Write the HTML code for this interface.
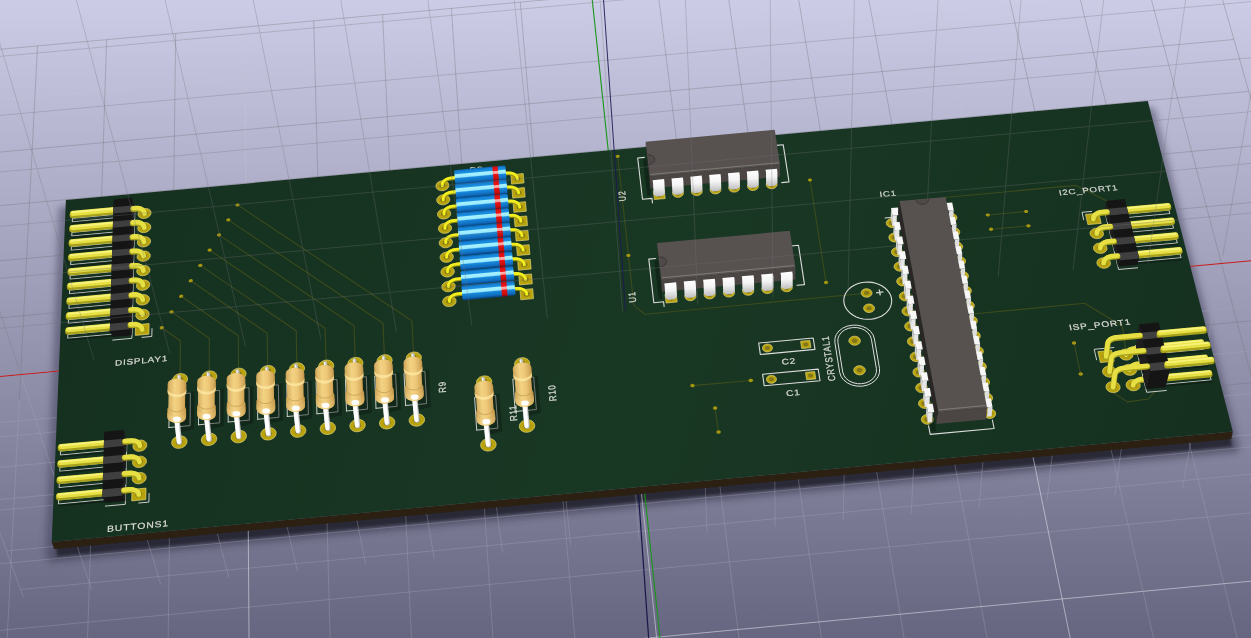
<!DOCTYPE html><html><head><meta charset="utf-8"><title>3D Viewer</title><style>html,body{margin:0;padding:0;background:#666680;overflow:hidden}svg{display:block}text{font-family:"Liberation Sans",sans-serif}</style></head><body><svg width="1251" height="638" viewBox="0 0 1251 638"><defs><linearGradient id="bg" x1="0" y1="0" x2="0" y2="1"><stop offset="0" stop-color="#cccce6"/><stop offset="1" stop-color="#666680"/></linearGradient><linearGradient id="brd" gradientUnits="userSpaceOnUse" x1="100" y1="150" x2="1200" y2="480"><stop offset="0" stop-color="#15301f"/><stop offset="0.5" stop-color="#193824"/><stop offset="1" stop-color="#15301f"/></linearGradient><filter id="blur8" x="-10%" y="-50%" width="120%" height="200%"><feGaussianBlur stdDeviation="7"/></filter><filter id="blur4" x="-10%" y="-80%" width="120%" height="260%"><feGaussianBlur stdDeviation="3.5"/></filter><filter id="blur2" x="-5%" y="-50%" width="110%" height="200%"><feGaussianBlur stdDeviation="1.6"/></filter><clipPath id="ctop"><rect x="0" y="0" width="1251" height="400"/></clipPath><clipPath id="cbot"><rect x="0" y="400" width="1251" height="238"/></clipPath><linearGradient id="pinw" x1="0" y1="0" x2="0" y2="1"><stop offset="0" stop-color="#ffffff"/><stop offset="0.45" stop-color="#f4f4f4"/><stop offset="1" stop-color="#bdbdbd"/></linearGradient><linearGradient id="rg" gradientUnits="userSpaceOnUse" x1="-1.3" y1="0" x2="1.3" y2="0"><stop offset="0" stop-color="#b98f45"/><stop offset="0.12" stop-color="#d9b365"/><stop offset="0.38" stop-color="#f3d283"/><stop offset="0.6" stop-color="#eec878"/><stop offset="0.85" stop-color="#d4aa5c"/><stop offset="1" stop-color="#b88c40"/></linearGradient><linearGradient id="rg2" gradientUnits="userSpaceOnUse" x1="-1.3" y1="0" x2="1.3" y2="0"><stop offset="0" stop-color="#d6ae5e"/><stop offset="0.4" stop-color="#fbe39a"/><stop offset="1" stop-color="#cfa555"/></linearGradient><g id="resb"><path d="M-1.2,-2.25 L-1.2,-3.6 L-1.06,-3.95 L-1.06,-5.81 L-1.2,-6.109999999999999 L-1.2,-7.56 A1.2,0.8999999999999999 0 0 1 1.2,-7.56 L1.2,-6.109999999999999 L1.06,-5.81 L1.06,-3.95 L1.2,-3.6 L1.2,-2.25 A1.2,0.8999999999999999 0 0 1 -1.2,-2.25 Z" fill="url(#rg)"/><path d="M-1.2,-6.81 A1.2,0.8999999999999999 0 0 0 1.2,-6.81 L1.2,-6.359999999999999 A1.2,0.8999999999999999 0 0 1 -1.2,-6.359999999999999 Z" fill="#fde9a4" opacity="0.75"/><path d="M-1.06,-3.95 A1.06,0.8099999999999999 0 0 0 1.06,-3.95" fill="none" stroke="#b08840" stroke-width="0.09" opacity="0.8"/><path d="M-1.2,-2.3 A1.2,0.8999999999999999 0 0 0 1.2,-2.3 L1.2,-3.2 A1.2,0.8999999999999999 0 0 1 -1.2,-3.2 Z" fill="url(#rg2)" opacity="0.85"/><ellipse cx="0.03" cy="-1.97" rx="0.5" ry="0.42" fill="#ffffff"/></g><linearGradient id="dg" x1="0" y1="0" x2="0" y2="1"><stop offset="0" stop-color="#0b5fa8"/><stop offset="0.12" stop-color="#1583d6"/><stop offset="0.26" stop-color="#1b8fe2"/><stop offset="0.33" stop-color="#a6f2ff"/><stop offset="0.52" stop-color="#9aeaff"/><stop offset="0.6" stop-color="#1888dc"/><stop offset="0.85" stop-color="#0f6cbd"/><stop offset="1" stop-color="#07407a"/></linearGradient><linearGradient id="dr" x1="0" y1="0" x2="0" y2="1"><stop offset="0" stop-color="#a80808"/><stop offset="0.12" stop-color="#e01010"/><stop offset="0.3" stop-color="#ee1515"/><stop offset="0.36" stop-color="#ffb0b0"/><stop offset="0.5" stop-color="#ff9a9a"/><stop offset="0.56" stop-color="#e81212"/><stop offset="0.85" stop-color="#c80c0c"/><stop offset="1" stop-color="#800606"/></linearGradient></defs><rect width="1251" height="638" fill="url(#bg)"/>
<g filter="url(#blur4)" opacity="0.5"><polygon points="50.2,543.0 1235.3,432.9 1238.3,451.9 48.2,562.0" fill="#2a2a3e"/><polygon points="1141.8,105.0 1154.8,109.0 1240.3,448.9 1225.3,438.9" fill="#3a3a55"/><polygon points="71.9,204.1 58.9,208.1 45.2,559.0 60.2,549.0" fill="#3a3a55"/></g>
<g filter="url(#blur2)" opacity="0.85"><polygon points="55.2,544.0 1230.3,433.9 1232.3,446.4 57.2,556.5" fill="#24242f"/></g>
<g clip-path="url(#ctop)"><line x1="589.0" y1="-4.1" x2="664.0" y2="707.4" stroke="#c8c8d0" stroke-opacity="0.3" stroke-width="1" /><line x1="-55.0" y1="381.6" x2="1296.0" y2="256.6" stroke="#c8c8d0" stroke-opacity="0.3" stroke-width="1" /><line x1="657.7" y1="-10.3" x2="746.7" y2="699.6" stroke="#72727a" stroke-opacity="0.36" stroke-width="1" /><line x1="-59.3" y1="442.5" x2="1312.7" y2="315.1" stroke="#72727a" stroke-opacity="0.36" stroke-width="1" /><line x1="520.3" y1="2.1" x2="581.4" y2="715.2" stroke="#72727a" stroke-opacity="0.36" stroke-width="1" /><line x1="-50.8" y1="322.5" x2="1279.8" y2="199.9" stroke="#72727a" stroke-opacity="0.36" stroke-width="1" /><line x1="726.4" y1="-16.5" x2="829.2" y2="691.7" stroke="#72727a" stroke-opacity="0.36" stroke-width="1" /><line x1="-63.7" y1="505.4" x2="1330.0" y2="375.5" stroke="#72727a" stroke-opacity="0.36" stroke-width="1" /><line x1="451.4" y1="8.4" x2="498.6" y2="723.1" stroke="#72727a" stroke-opacity="0.36" stroke-width="1" /><line x1="-46.8" y1="265.2" x2="1264.0" y2="144.8" stroke="#72727a" stroke-opacity="0.36" stroke-width="1" /><line x1="795.0" y1="-22.8" x2="911.7" y2="683.9" stroke="#72727a" stroke-opacity="0.36" stroke-width="1" /><line x1="-68.3" y1="570.2" x2="1347.8" y2="437.8" stroke="#72727a" stroke-opacity="0.36" stroke-width="1" /><line x1="382.6" y1="14.6" x2="415.7" y2="730.9" stroke="#72727a" stroke-opacity="0.36" stroke-width="1" /><line x1="-42.8" y1="209.6" x2="1248.8" y2="91.4" stroke="#72727a" stroke-opacity="0.36" stroke-width="1" /><line x1="863.5" y1="-29.0" x2="994.1" y2="676.1" stroke="#72727a" stroke-opacity="0.36" stroke-width="1" /><line x1="-73.0" y1="637.3" x2="1366.2" y2="502.1" stroke="#72727a" stroke-opacity="0.36" stroke-width="1" /><line x1="313.7" y1="20.9" x2="332.8" y2="738.8" stroke="#72727a" stroke-opacity="0.36" stroke-width="1" /><line x1="-39.0" y1="155.6" x2="1233.9" y2="39.5" stroke="#72727a" stroke-opacity="0.36" stroke-width="1" /><line x1="932.0" y1="-35.2" x2="1076.4" y2="668.3" stroke="#c8c8d0" stroke-opacity="0.3" stroke-width="1" /><line x1="-77.9" y1="706.5" x2="1385.2" y2="568.5" stroke="#c8c8d0" stroke-opacity="0.3" stroke-width="1" /><line x1="244.7" y1="27.1" x2="249.8" y2="746.6" stroke="#c8c8d0" stroke-opacity="0.3" stroke-width="1" /><line x1="-35.3" y1="103.2" x2="1219.5" y2="-11.0" stroke="#c8c8d0" stroke-opacity="0.3" stroke-width="1" /><line x1="1000.5" y1="-41.4" x2="1158.6" y2="660.5" stroke="#72727a" stroke-opacity="0.36" stroke-width="1" /><line x1="-83.0" y1="778.1" x2="1404.8" y2="637.2" stroke="#72727a" stroke-opacity="0.36" stroke-width="1" /><line x1="175.7" y1="33.4" x2="166.7" y2="754.5" stroke="#72727a" stroke-opacity="0.36" stroke-width="1" /><line x1="-31.7" y1="52.2" x2="1205.5" y2="-60.0" stroke="#72727a" stroke-opacity="0.36" stroke-width="1" /><line x1="1068.8" y1="-47.6" x2="1240.8" y2="652.8" stroke="#72727a" stroke-opacity="0.36" stroke-width="1" /><line x1="106.6" y1="39.7" x2="83.6" y2="762.4" stroke="#72727a" stroke-opacity="0.36" stroke-width="1" /><line x1="1137.2" y1="-53.8" x2="1322.8" y2="645.0" stroke="#72727a" stroke-opacity="0.36" stroke-width="1" /><line x1="37.5" y1="45.9" x2="0.4" y2="770.2" stroke="#72727a" stroke-opacity="0.36" stroke-width="1" /><line x1="1205.5" y1="-60.0" x2="1404.8" y2="637.2" stroke="#72727a" stroke-opacity="0.36" stroke-width="1" /><line x1="-31.7" y1="52.2" x2="-83.0" y2="778.1" stroke="#72727a" stroke-opacity="0.36" stroke-width="1" /></g>
<g><line x1="638.9" y1="539.3" x2="623.1" y2="318.9" stroke="#a4a4ba" stroke-opacity="0.36" stroke-width="1" /><line x1="707.1" y1="532.9" x2="698.1" y2="311.9" stroke="#a4a4ba" stroke-opacity="0.36" stroke-width="1" /><line x1="570.7" y1="545.7" x2="548.0" y2="325.8" stroke="#a4a4ba" stroke-opacity="0.36" stroke-width="1" /><line x1="775.2" y1="526.5" x2="773.1" y2="305.0" stroke="#a4a4ba" stroke-opacity="0.36" stroke-width="1" /><line x1="502.5" y1="552.1" x2="472.8" y2="332.8" stroke="#a4a4ba" stroke-opacity="0.36" stroke-width="1" /><line x1="843.2" y1="520.2" x2="847.9" y2="298.1" stroke="#a4a4ba" stroke-opacity="0.36" stroke-width="1" /><line x1="434.2" y1="558.5" x2="397.6" y2="339.7" stroke="#a4a4ba" stroke-opacity="0.36" stroke-width="1" /><line x1="911.2" y1="513.8" x2="922.8" y2="291.1" stroke="#a4a4ba" stroke-opacity="0.36" stroke-width="1" /><line x1="365.8" y1="564.9" x2="322.4" y2="346.7" stroke="#a4a4ba" stroke-opacity="0.36" stroke-width="1" /><line x1="979.1" y1="507.4" x2="997.6" y2="284.2" stroke="#a4a4ba" stroke-opacity="0.36" stroke-width="1" /><line x1="297.4" y1="571.3" x2="247.0" y2="353.6" stroke="#a4a4ba" stroke-opacity="0.36" stroke-width="1" /><line x1="1047.0" y1="501.1" x2="1072.3" y2="277.3" stroke="#a4a4ba" stroke-opacity="0.36" stroke-width="1" /><line x1="229.0" y1="577.8" x2="171.6" y2="360.6" stroke="#a4a4ba" stroke-opacity="0.36" stroke-width="1" /><line x1="1114.8" y1="494.7" x2="1146.9" y2="270.4" stroke="#a4a4ba" stroke-opacity="0.36" stroke-width="1" /><line x1="160.5" y1="584.2" x2="96.2" y2="367.6" stroke="#a4a4ba" stroke-opacity="0.36" stroke-width="1" /><line x1="1182.6" y1="488.3" x2="1221.5" y2="263.5" stroke="#a4a4ba" stroke-opacity="0.36" stroke-width="1" /><line x1="91.9" y1="590.6" x2="20.6" y2="374.6" stroke="#a4a4ba" stroke-opacity="0.36" stroke-width="1" /><line x1="1250.3" y1="482.0" x2="1296.0" y2="256.6" stroke="#a4a4ba" stroke-opacity="0.36" stroke-width="1" /><line x1="23.3" y1="597.0" x2="-55.0" y2="381.6" stroke="#a4a4ba" stroke-opacity="0.36" stroke-width="1" /><line x1="-55.0" y1="381.6" x2="1296.0" y2="256.6" stroke="#a4a4ba" stroke-opacity="0.36" stroke-width="1" /><line x1="-38.7" y1="426.3" x2="1286.5" y2="303.4" stroke="#a4a4ba" stroke-opacity="0.36" stroke-width="1" /><line x1="-23.1" y1="469.4" x2="1277.4" y2="348.5" stroke="#a4a4ba" stroke-opacity="0.36" stroke-width="1" /><line x1="-8.0" y1="510.9" x2="1268.6" y2="391.9" stroke="#a4a4ba" stroke-opacity="0.36" stroke-width="1" /><line x1="6.6" y1="550.9" x2="1260.1" y2="433.7" stroke="#a4a4ba" stroke-opacity="0.36" stroke-width="1" /><line x1="20.6" y1="589.5" x2="1251.9" y2="474.1" stroke="#a4a4ba" stroke-opacity="0.36" stroke-width="1" /></g>
<g clip-path="url(#cbot)"><line x1="589.0" y1="-4.1" x2="664.0" y2="707.4" stroke="#e6e6f2" stroke-opacity="0.55" stroke-width="1" /><line x1="-55.0" y1="381.6" x2="1296.0" y2="256.6" stroke="#e6e6f2" stroke-opacity="0.55" stroke-width="1" /><line x1="657.7" y1="-10.3" x2="746.7" y2="699.6" stroke="#a4a4ba" stroke-opacity="0.36" stroke-width="1" /><line x1="-59.3" y1="442.5" x2="1312.7" y2="315.1" stroke="#a4a4ba" stroke-opacity="0.36" stroke-width="1" /><line x1="520.3" y1="2.1" x2="581.4" y2="715.2" stroke="#a4a4ba" stroke-opacity="0.36" stroke-width="1" /><line x1="-50.8" y1="322.5" x2="1279.8" y2="199.9" stroke="#a4a4ba" stroke-opacity="0.36" stroke-width="1" /><line x1="726.4" y1="-16.5" x2="829.2" y2="691.7" stroke="#a4a4ba" stroke-opacity="0.36" stroke-width="1" /><line x1="-63.7" y1="505.4" x2="1330.0" y2="375.5" stroke="#a4a4ba" stroke-opacity="0.36" stroke-width="1" /><line x1="451.4" y1="8.4" x2="498.6" y2="723.1" stroke="#a4a4ba" stroke-opacity="0.36" stroke-width="1" /><line x1="-46.8" y1="265.2" x2="1264.0" y2="144.8" stroke="#a4a4ba" stroke-opacity="0.36" stroke-width="1" /><line x1="795.0" y1="-22.8" x2="911.7" y2="683.9" stroke="#a4a4ba" stroke-opacity="0.36" stroke-width="1" /><line x1="-68.3" y1="570.2" x2="1347.8" y2="437.8" stroke="#a4a4ba" stroke-opacity="0.36" stroke-width="1" /><line x1="382.6" y1="14.6" x2="415.7" y2="730.9" stroke="#a4a4ba" stroke-opacity="0.36" stroke-width="1" /><line x1="-42.8" y1="209.6" x2="1248.8" y2="91.4" stroke="#a4a4ba" stroke-opacity="0.36" stroke-width="1" /><line x1="863.5" y1="-29.0" x2="994.1" y2="676.1" stroke="#a4a4ba" stroke-opacity="0.36" stroke-width="1" /><line x1="-73.0" y1="637.3" x2="1366.2" y2="502.1" stroke="#a4a4ba" stroke-opacity="0.36" stroke-width="1" /><line x1="313.7" y1="20.9" x2="332.8" y2="738.8" stroke="#a4a4ba" stroke-opacity="0.36" stroke-width="1" /><line x1="-39.0" y1="155.6" x2="1233.9" y2="39.5" stroke="#a4a4ba" stroke-opacity="0.36" stroke-width="1" /><line x1="932.0" y1="-35.2" x2="1076.4" y2="668.3" stroke="#e6e6f2" stroke-opacity="0.55" stroke-width="1" /><line x1="-77.9" y1="706.5" x2="1385.2" y2="568.5" stroke="#e6e6f2" stroke-opacity="0.55" stroke-width="1" /><line x1="244.7" y1="27.1" x2="249.8" y2="746.6" stroke="#e6e6f2" stroke-opacity="0.55" stroke-width="1" /><line x1="-35.3" y1="103.2" x2="1219.5" y2="-11.0" stroke="#e6e6f2" stroke-opacity="0.55" stroke-width="1" /><line x1="1000.5" y1="-41.4" x2="1158.6" y2="660.5" stroke="#a4a4ba" stroke-opacity="0.36" stroke-width="1" /><line x1="-83.0" y1="778.1" x2="1404.8" y2="637.2" stroke="#a4a4ba" stroke-opacity="0.36" stroke-width="1" /><line x1="175.7" y1="33.4" x2="166.7" y2="754.5" stroke="#a4a4ba" stroke-opacity="0.36" stroke-width="1" /><line x1="-31.7" y1="52.2" x2="1205.5" y2="-60.0" stroke="#a4a4ba" stroke-opacity="0.36" stroke-width="1" /><line x1="1068.8" y1="-47.6" x2="1240.8" y2="652.8" stroke="#a4a4ba" stroke-opacity="0.36" stroke-width="1" /><line x1="106.6" y1="39.7" x2="83.6" y2="762.4" stroke="#a4a4ba" stroke-opacity="0.36" stroke-width="1" /><line x1="1137.2" y1="-53.8" x2="1322.8" y2="645.0" stroke="#a4a4ba" stroke-opacity="0.36" stroke-width="1" /><line x1="37.5" y1="45.9" x2="0.4" y2="770.2" stroke="#a4a4ba" stroke-opacity="0.36" stroke-width="1" /><line x1="1205.5" y1="-60.0" x2="1404.8" y2="637.2" stroke="#a4a4ba" stroke-opacity="0.36" stroke-width="1" /><line x1="-31.7" y1="52.2" x2="-83.0" y2="778.1" stroke="#a4a4ba" stroke-opacity="0.36" stroke-width="1" /></g>
<line x1="-392.9" y1="412.8" x2="1781.8" y2="211.7" stroke="#c41a1a" stroke-width="1.1" />
<line x1="550.6" y1="-392.2" x2="719.4" y2="1196.6" stroke="#1c961c" stroke-width="1.1" />
<line x1="626.1" y1="318.6" x2="657.8" y2="768.0" stroke="#17174a" stroke-width="1.2" />
<polygon points="51.7,541.9 1232.8,431.5 1231.3,438.9 54.2,549.0" fill="#2b2011" />
<polygon points="65.9,200.1 1147.8,101.0 1232.8,431.5 51.7,541.9" fill="url(#brd)" />
<polyline points="237.5,204.9 411.9,320.8 413.8,358.0" fill="none" stroke="#3c4b1d" stroke-width="1.1" stroke-linejoin="round"/><polygon points="239.6,204.7 239.2,205.7 238.2,206.4 236.9,206.5 235.8,206.0 235.4,205.1 235.8,204.2 236.8,203.5 238.2,203.4 239.2,203.8" fill="#a39510" />
<polyline points="228.3,219.9 383.0,323.3 384.6,360.7" fill="none" stroke="#3c4b1d" stroke-width="1.1" stroke-linejoin="round"/><polygon points="230.4,219.7 230.0,220.7 228.9,221.3 227.6,221.5 226.6,221.0 226.2,220.1 226.6,219.1 227.6,218.4 228.9,218.3 230.0,218.8" fill="#a39510" />
<polyline points="219.0,234.9 354.0,325.7 355.4,363.4" fill="none" stroke="#3c4b1d" stroke-width="1.1" stroke-linejoin="round"/><polygon points="221.1,234.7 220.7,235.7 219.7,236.4 218.3,236.5 217.3,236.0 216.9,235.1 217.3,234.1 218.3,233.4 219.7,233.3 220.7,233.8" fill="#a39510" />
<polyline points="209.6,250.1 325.1,328.2 326.2,366.1" fill="none" stroke="#3c4b1d" stroke-width="1.1" stroke-linejoin="round"/><polygon points="211.8,249.9 211.4,250.9 210.3,251.6 209.0,251.7 207.9,251.2 207.5,250.3 207.9,249.3 209.0,248.6 210.3,248.5 211.4,249.0" fill="#a39510" />
<polyline points="200.2,265.4 296.2,330.7 296.9,368.8" fill="none" stroke="#3c4b1d" stroke-width="1.1" stroke-linejoin="round"/><polygon points="202.4,265.2 201.9,266.2 200.9,266.9 199.5,267.0 198.5,266.5 198.1,265.6 198.5,264.6 199.6,263.9 200.9,263.7 202.0,264.2" fill="#a39510" />
<polyline points="190.7,280.8 267.2,333.2 267.7,371.5" fill="none" stroke="#3c4b1d" stroke-width="1.1" stroke-linejoin="round"/><polygon points="192.9,280.6 192.4,281.6 191.4,282.3 190.0,282.4 189.0,281.9 188.6,281.0 189.0,279.9 190.1,279.2 191.4,279.1 192.5,279.6" fill="#a39510" />
<polyline points="181.1,296.3 238.3,335.7 238.5,374.2" fill="none" stroke="#3c4b1d" stroke-width="1.1" stroke-linejoin="round"/><polygon points="183.3,296.1 182.9,297.1 181.8,297.8 180.4,297.9 179.4,297.4 179.0,296.5 179.4,295.5 180.5,294.8 181.8,294.6 182.9,295.1" fill="#a39510" />
<polyline points="171.5,311.9 209.3,338.2 209.2,376.9" fill="none" stroke="#3c4b1d" stroke-width="1.1" stroke-linejoin="round"/><polygon points="173.6,311.7 173.2,312.8 172.1,313.5 170.8,313.6 169.7,313.1 169.3,312.1 169.7,311.1 170.8,310.4 172.2,310.3 173.2,310.8" fill="#a39510" />
<polyline points="161.7,327.7 180.4,340.7 180.0,379.6" fill="none" stroke="#3c4b1d" stroke-width="1.1" stroke-linejoin="round"/><polygon points="163.9,327.5 163.5,328.5 162.4,329.3 161.0,329.4 160.0,328.9 159.6,327.9 160.0,326.9 161.1,326.1 162.4,326.0 163.5,326.5" fill="#a39510" />
<polyline points="943.8,197.5 1075.8,185.4 1107.2,201.0" fill="none" stroke="#3c4b1d" stroke-width="1.1" stroke-linejoin="round"/>
<polyline points="987.8,215.0 1026.1,211.5" fill="none" stroke="#3c4b1d" stroke-width="1.1" stroke-linejoin="round"/><polygon points="989.9,214.8 989.7,215.8 988.7,216.5 987.4,216.6 986.2,216.1 985.6,215.2 985.8,214.2 986.8,213.5 988.1,213.4 989.3,213.9" fill="#a39510" /><polygon points="1028.2,211.3 1028.0,212.3 1027.1,213.0 1025.8,213.1 1024.6,212.6 1024.0,211.7 1024.2,210.7 1025.1,210.0 1026.4,209.9 1027.6,210.3" fill="#a39510" />
<polyline points="991.1,229.3 1028.5,225.8" fill="none" stroke="#3c4b1d" stroke-width="1.1" stroke-linejoin="round"/><polygon points="993.2,229.1 993.0,230.1 992.1,230.8 990.7,230.9 989.5,230.4 988.9,229.5 989.1,228.5 990.1,227.8 991.4,227.6 992.6,228.1" fill="#a39510" /><polygon points="1030.6,225.6 1030.4,226.6 1029.5,227.3 1028.1,227.4 1026.9,226.9 1026.3,226.0 1026.5,225.0 1027.5,224.3 1028.8,224.2 1030.0,224.7" fill="#a39510" />
<polyline points="617.7,156.3 633.9,305.6 644.9,314.2 860.9,293.8" fill="none" stroke="#3c4b1d" stroke-width="1.1" stroke-linejoin="round"/><polygon points="619.8,156.1 619.5,157.1 618.5,157.7 617.2,157.9 616.1,157.4 615.6,156.5 615.9,155.5 616.9,154.9 618.2,154.7 619.3,155.2" fill="#a39510" />
<polyline points="628.3,255.5 628.4,255.5" fill="none" stroke="#3c4b1d" stroke-width="1.1" stroke-linejoin="round"/><polygon points="630.5,255.3 630.2,256.3 629.2,257.0 627.8,257.1 626.7,256.6 626.2,255.7 626.5,254.7 627.5,254.0 628.8,253.8 630.0,254.3" fill="#a39510" />
<polyline points="810.0,180.0 826.0,282.5" fill="none" stroke="#3c4b1d" stroke-width="1.1" stroke-linejoin="round"/><polygon points="812.1,179.8 811.8,180.8 810.9,181.4 809.6,181.6 808.4,181.1 807.9,180.2 808.1,179.2 809.1,178.5 810.4,178.4 811.5,178.9" fill="#a39510" /><polygon points="828.2,282.3 827.9,283.3 826.9,284.0 825.6,284.2 824.4,283.6 823.8,282.7 824.1,281.7 825.1,280.9 826.4,280.8 827.6,281.3" fill="#a39510" />
<polyline points="692.4,385.6 750.8,380.5" fill="none" stroke="#3c4b1d" stroke-width="1.1" stroke-linejoin="round"/><polygon points="694.7,385.4 694.4,386.4 693.3,387.2 692.0,387.3 690.8,386.8 690.2,385.8 690.5,384.7 691.5,383.9 692.9,383.8 694.1,384.4" fill="#a39510" /><polygon points="753.1,380.2 752.8,381.3 751.7,382.1 750.4,382.2 749.2,381.7 748.6,380.7 748.9,379.6 749.9,378.8 751.3,378.7 752.5,379.2" fill="#a39510" />
<polyline points="715.1,408.1 718.5,432.0" fill="none" stroke="#3c4b1d" stroke-width="1.1" stroke-linejoin="round"/><polygon points="717.3,407.9 717.0,409.0 716.0,409.7 714.6,409.8 713.4,409.3 712.9,408.3 713.1,407.2 714.2,406.4 715.6,406.3 716.8,406.8" fill="#a39510" /><polygon points="720.8,431.8 720.5,432.9 719.4,433.7 718.0,433.8 716.8,433.3 716.3,432.2 716.6,431.1 717.6,430.4 719.0,430.2 720.2,430.8" fill="#a39510" />
<polyline points="1074.0,343.0 1080.7,374.0" fill="none" stroke="#3c4b1d" stroke-width="1.1" stroke-linejoin="round"/><polygon points="1076.2,342.8 1076.0,343.9 1075.1,344.6 1073.7,344.7 1072.5,344.2 1071.8,343.2 1072.0,342.2 1073.0,341.4 1074.3,341.3 1075.6,341.8" fill="#a39510" /><polygon points="1083.0,373.8 1082.8,374.9 1081.8,375.6 1080.4,375.7 1079.2,375.2 1078.5,374.2 1078.7,373.1 1079.7,372.4 1081.0,372.2 1082.3,372.8" fill="#a39510" />
<polyline points="972.7,314.0 1084.6,303.3 1122.3,326.0 1126.3,352.7" fill="none" stroke="#3c4b1d" stroke-width="1.1" stroke-linejoin="round"/>
<polyline points="1113.5,392.7 1127.5,401.9 1148.2,399.0 1155.1,391.4" fill="none" stroke="#3c4b1d" stroke-width="1.1" stroke-linejoin="round"/>
<polyline points="644.3,157.4 637.7,158.0 642.5,199.3 652.0,198.4 652.5,202.9" fill="none" stroke="#dcdcdc" stroke-width="1.1" stroke-linejoin="round" stroke-linecap="round"/>
<polyline points="776.0,145.4 783.2,144.7 789.0,181.9 781.7,182.6" fill="none" stroke="#dcdcdc" stroke-width="1.1" stroke-linejoin="round" stroke-linecap="round"/>
<polyline points="655.5,258.5 648.8,259.1 653.8,302.7 663.6,301.8 664.1,306.5" fill="none" stroke="#dcdcdc" stroke-width="1.1" stroke-linejoin="round" stroke-linecap="round"/>
<polyline points="791.1,246.0 798.5,245.3 804.5,284.6 797.0,285.3" fill="none" stroke="#dcdcdc" stroke-width="1.1" stroke-linejoin="round" stroke-linecap="round"/>
<polyline points="928.6,425.9 930.2,434.4 994.1,428.5 992.4,420.0" fill="none" stroke="#dcdcdc" stroke-width="1.1" stroke-linejoin="round" stroke-linecap="round"/>
<polyline points="885.1,218.0 894.0,217.2" fill="none" stroke="#dcdcdc" stroke-width="1.1" stroke-linejoin="round" stroke-linecap="round"/>
<polyline points="116.2,214.3 72.5,218.3 72.3,221.9 116.1,217.8" fill="none" stroke="#dcdcdc" stroke-width="0.9" stroke-linejoin="round" stroke-linecap="round"/>
<polyline points="115.8,228.4 71.9,232.4 71.8,236.0 115.7,232.0" fill="none" stroke="#dcdcdc" stroke-width="0.9" stroke-linejoin="round" stroke-linecap="round"/>
<polyline points="115.4,242.6 71.4,246.7 71.2,250.3 115.3,246.2" fill="none" stroke="#dcdcdc" stroke-width="0.9" stroke-linejoin="round" stroke-linecap="round"/>
<polyline points="115.0,257.0 70.8,261.0 70.6,264.7 114.9,260.6" fill="none" stroke="#dcdcdc" stroke-width="0.9" stroke-linejoin="round" stroke-linecap="round"/>
<polyline points="114.6,271.4 70.2,275.5 70.1,279.2 114.5,275.1" fill="none" stroke="#dcdcdc" stroke-width="0.9" stroke-linejoin="round" stroke-linecap="round"/>
<polyline points="114.2,286.0 69.6,290.1 69.5,293.8 114.1,289.7" fill="none" stroke="#dcdcdc" stroke-width="0.9" stroke-linejoin="round" stroke-linecap="round"/>
<polyline points="113.8,300.6 69.1,304.8 68.9,308.5 113.7,304.4" fill="none" stroke="#dcdcdc" stroke-width="0.9" stroke-linejoin="round" stroke-linecap="round"/>
<polyline points="113.4,315.4 68.5,319.6 68.3,323.3 113.3,319.2" fill="none" stroke="#dcdcdc" stroke-width="0.9" stroke-linejoin="round" stroke-linecap="round"/>
<polyline points="113.0,330.3 67.9,334.5 67.7,338.3 112.9,334.1" fill="none" stroke="#dcdcdc" stroke-width="0.9" stroke-linejoin="round" stroke-linecap="round"/>
<polyline points="134.9,207.0 131.9,338.3 112.7,340.1" fill="none" stroke="#dcdcdc" stroke-width="0.9" stroke-linejoin="round" stroke-linecap="round"/>
<polyline points="152.0,328.6 151.8,336.4 142.0,337.4" fill="none" stroke="#dcdcdc" stroke-width="0.9" stroke-linejoin="round" stroke-linecap="round"/>
<polyline points="107.1,446.7 60.6,451.1 60.4,455.1 106.9,450.7" fill="none" stroke="#dcdcdc" stroke-width="0.9" stroke-linejoin="round" stroke-linecap="round"/>
<polyline points="106.6,462.9 59.9,467.2 59.8,471.3 106.5,466.9" fill="none" stroke="#dcdcdc" stroke-width="0.9" stroke-linejoin="round" stroke-linecap="round"/>
<polyline points="106.1,479.1 59.3,483.5 59.1,487.6 106.0,483.2" fill="none" stroke="#dcdcdc" stroke-width="0.9" stroke-linejoin="round" stroke-linecap="round"/>
<polyline points="105.7,495.5 58.6,499.9 58.5,504.0 105.6,499.6" fill="none" stroke="#dcdcdc" stroke-width="0.9" stroke-linejoin="round" stroke-linecap="round"/>
<polyline points="126.9,438.6 125.3,504.3 105.4,506.1" fill="none" stroke="#dcdcdc" stroke-width="0.9" stroke-linejoin="round" stroke-linecap="round"/>
<polyline points="149.1,493.5 148.9,502.1 138.7,503.0" fill="none" stroke="#dcdcdc" stroke-width="0.9" stroke-linejoin="round" stroke-linecap="round"/>
<polyline points="1124.6,214.2 1168.9,210.1 1169.9,213.7 1125.5,217.8" fill="none" stroke="#dcdcdc" stroke-width="0.9" stroke-linejoin="round" stroke-linecap="round"/>
<polyline points="1128.2,228.7 1172.6,224.6 1173.6,228.3 1129.0,232.4" fill="none" stroke="#dcdcdc" stroke-width="0.9" stroke-linejoin="round" stroke-linecap="round"/>
<polyline points="1131.7,243.4 1176.4,239.3 1177.3,243.0 1132.6,247.1" fill="none" stroke="#dcdcdc" stroke-width="0.9" stroke-linejoin="round" stroke-linecap="round"/>
<polyline points="1135.3,258.2 1180.2,254.1 1181.1,257.8 1136.2,261.9" fill="none" stroke="#dcdcdc" stroke-width="0.9" stroke-linejoin="round" stroke-linecap="round"/>
<polyline points="1104.5,210.2 1118.6,269.5 1137.6,267.8" fill="none" stroke="#dcdcdc" stroke-width="0.9" stroke-linejoin="round" stroke-linecap="round"/>
<polyline points="1083.7,219.8 1082.0,212.3 1091.6,211.4" fill="none" stroke="#dcdcdc" stroke-width="0.9" stroke-linejoin="round" stroke-linecap="round"/>
<polyline points="1156.4,349.8 1202.3,345.5 1203.3,349.4 1157.4,353.6" fill="none" stroke="#dcdcdc" stroke-width="0.9" stroke-linejoin="round" stroke-linecap="round"/>
<polyline points="1160.1,365.0 1206.2,360.7 1207.2,364.6 1161.1,368.9" fill="none" stroke="#dcdcdc" stroke-width="0.9" stroke-linejoin="round" stroke-linecap="round"/>
<polyline points="1163.8,380.3 1210.1,376.0 1211.1,379.9 1164.8,384.3" fill="none" stroke="#dcdcdc" stroke-width="0.9" stroke-linejoin="round" stroke-linecap="round"/>
<polyline points="1135.5,345.4 1146.7,392.3 1166.3,390.5" fill="none" stroke="#dcdcdc" stroke-width="0.9" stroke-linejoin="round" stroke-linecap="round"/>
<polyline points="1113.9,347.5 1094.2,349.3 1096.6,359.8" fill="none" stroke="#dcdcdc" stroke-width="0.9" stroke-linejoin="round" stroke-linecap="round"/>
<polyline points="168.9,427.5 190.1,425.6 190.3,393.0 169.4,394.9 168.9,427.5" fill="none" stroke="#dcdcdc" stroke-width="0.9" stroke-linejoin="round" stroke-linecap="round"/>
<polyline points="198.5,424.8 219.7,422.8 219.7,390.3 198.7,392.2 198.5,424.8" fill="none" stroke="#dcdcdc" stroke-width="0.9" stroke-linejoin="round" stroke-linecap="round"/>
<polyline points="228.2,422.0 249.3,420.1 249.0,387.6 228.1,389.5 228.2,422.0" fill="none" stroke="#dcdcdc" stroke-width="0.9" stroke-linejoin="round" stroke-linecap="round"/>
<polyline points="257.7,419.3 278.9,417.3 278.4,384.8 257.4,386.8 257.7,419.3" fill="none" stroke="#dcdcdc" stroke-width="0.9" stroke-linejoin="round" stroke-linecap="round"/>
<polyline points="287.3,416.5 308.4,414.6 307.7,382.1 286.8,384.1 287.3,416.5" fill="none" stroke="#dcdcdc" stroke-width="0.9" stroke-linejoin="round" stroke-linecap="round"/>
<polyline points="316.9,413.8 338.0,411.8 337.0,379.4 316.1,381.3 316.9,413.8" fill="none" stroke="#dcdcdc" stroke-width="0.9" stroke-linejoin="round" stroke-linecap="round"/>
<polyline points="346.5,411.0 367.5,409.1 366.3,376.7 345.4,378.6 346.5,411.0" fill="none" stroke="#dcdcdc" stroke-width="0.9" stroke-linejoin="round" stroke-linecap="round"/>
<polyline points="376.0,408.3 397.1,406.3 395.6,374.0 374.7,375.9 376.0,408.3" fill="none" stroke="#dcdcdc" stroke-width="0.9" stroke-linejoin="round" stroke-linecap="round"/>
<polyline points="405.6,405.5 426.6,403.6 424.9,371.3 404.0,373.2 405.6,405.5" fill="none" stroke="#dcdcdc" stroke-width="0.9" stroke-linejoin="round" stroke-linecap="round"/>
<polyline points="476.7,430.1 497.9,428.2 495.6,395.4 474.6,397.3 476.7,430.1" fill="none" stroke="#dcdcdc" stroke-width="0.9" stroke-linejoin="round" stroke-linecap="round"/>
<polyline points="515.2,411.5 536.4,409.5 533.7,377.0 512.8,379.0 515.2,411.5" fill="none" stroke="#dcdcdc" stroke-width="0.9" stroke-linejoin="round" stroke-linecap="round"/>
<polygon points="891.5,298.4 891.7,301.3 891.3,304.2 890.4,307.1 888.9,309.7 886.8,312.2 884.3,314.3 881.4,316.2 878.1,317.6 874.6,318.6 870.9,319.2 867.2,319.3 863.4,319.0 859.8,318.2 856.3,316.9 853.2,315.3 850.4,313.3 848.0,311.0 846.1,308.4 844.8,305.7 844.0,302.8 843.8,299.9 844.2,297.0 845.2,294.2 846.8,291.5 848.8,289.1 851.3,287.0 854.2,285.2 857.5,283.7 861.0,282.7 864.6,282.2 868.3,282.1 872.1,282.4 875.7,283.2 879.1,284.4 882.2,286.0 885.0,288.0 887.4,290.3 889.3,292.8 890.7,295.5" fill="none" stroke="#dcdcdc" stroke-width="1.1"/>
<text transform="matrix(7.515,-0.695,1.019,5.863,880.0,292.0)" font-size="1.9" text-anchor="middle" fill="#dadad6" stroke="#dadad6" stroke-width="0.035" letter-spacing="0.1" font-weight="normal" opacity="0.99" y="0.68">+</text>
<polygon points="834.9,342.6 834.9,338.5 836.3,334.5 838.9,331.0 842.6,328.2 847.1,326.2 852.1,325.2 857.3,325.2 862.3,326.3 866.8,328.4 870.5,331.3 873.1,334.9 874.4,338.9 879.5,368.4 879.5,372.6 878.1,376.6 875.5,380.2 871.8,383.1 867.2,385.2 862.1,386.2 856.9,386.1 851.8,385.0 847.2,382.8 843.5,379.8 840.9,376.2 839.6,372.1" fill="none" stroke="#dcdcdc" stroke-width="1"/>
<polygon points="837.9,342.3 837.9,338.8 839.1,335.5 841.3,332.5 844.4,330.1 848.2,328.4 852.5,327.6 856.9,327.6 861.1,328.5 864.9,330.3 868.0,332.8 870.2,335.8 871.4,339.2 876.4,368.7 876.4,372.2 875.3,375.6 873.0,378.7 869.9,381.1 866.0,382.9 861.7,383.7 857.3,383.7 853.0,382.7 849.1,380.9 846.0,378.4 843.8,375.3 842.7,371.9" fill="none" stroke="#dcdcdc" stroke-width="1"/>
<polyline points="758.7,343.0 813.2,338.0 815.0,349.4 760.3,354.5 758.7,343.0" fill="none" stroke="#dcdcdc" stroke-width="1.1" stroke-linejoin="round" stroke-linecap="round"/>
<polyline points="762.6,374.2 818.2,369.1 820.0,380.7 764.2,385.8 762.6,374.2" fill="none" stroke="#dcdcdc" stroke-width="1.1" stroke-linejoin="round" stroke-linecap="round"/>
<text transform="matrix(7.578,-0.701,-0.121,5.994,141.5,360.5)" font-size="1.32" text-anchor="middle" fill="#dadad6" stroke="#dadad6" stroke-width="0.035" letter-spacing="0.1" font-weight="normal" opacity="0.99" y="0.48">DISPLAY1</text>
<text transform="matrix(7.902,-0.738,-0.132,6.518,138.0,526.0)" font-size="1.32" text-anchor="middle" fill="#dadad6" stroke="#dadad6" stroke-width="0.035" letter-spacing="0.1" font-weight="normal" opacity="0.99" y="0.48">BUTTONS1</text>
<text transform="matrix(-0.349,-6.110,7.659,-0.711,442.0,387.0)" font-size="1.32" text-anchor="middle" fill="#dadad6" stroke="#dadad6" stroke-width="0.035" letter-spacing="0.1" font-weight="normal" opacity="0.99" y="0.48">R9</text>
<text transform="matrix(-0.464,-6.199,7.717,-0.717,513.0,413.0)" font-size="1.32" text-anchor="middle" fill="#dadad6" stroke="#dadad6" stroke-width="0.035" letter-spacing="0.1" font-weight="normal" opacity="0.99" y="0.48">R11</text>
<text transform="matrix(-0.523,-6.141,7.681,-0.714,552.0,393.0)" font-size="1.32" text-anchor="middle" fill="#dadad6" stroke="#dadad6" stroke-width="0.035" letter-spacing="0.1" font-weight="normal" opacity="0.99" y="0.48">R10</text>
<text transform="matrix(-0.603,-5.545,7.303,-0.671,622.0,196.0)" font-size="1.32" text-anchor="middle" fill="#dadad6" stroke="#dadad6" stroke-width="0.035" letter-spacing="0.1" font-weight="normal" opacity="0.99" y="0.48">U2</text>
<text transform="matrix(-0.634,-5.851,7.501,-0.693,632.0,297.0)" font-size="1.32" text-anchor="middle" fill="#dadad6" stroke="#dadad6" stroke-width="0.035" letter-spacing="0.1" font-weight="normal" opacity="0.99" y="0.48">U1</text>
<text transform="matrix(7.324,-0.673,1.005,5.565,888.0,193.5)" font-size="1.32" text-anchor="middle" fill="#dadad6" stroke="#dadad6" stroke-width="0.035" letter-spacing="0.1" font-weight="normal" opacity="0.99" y="0.48">IC1</text>
<text transform="matrix(7.336,-0.675,1.310,5.576,1088.5,190.0)" font-size="1.32" text-anchor="middle" fill="#dadad6" stroke="#dadad6" stroke-width="0.035" letter-spacing="0.1" font-weight="normal" opacity="0.99" y="0.48">I2C_PORT1</text>
<text transform="matrix(7.600,-0.705,1.376,5.987,1100.0,324.5)" font-size="1.32" text-anchor="middle" fill="#dadad6" stroke="#dadad6" stroke-width="0.035" letter-spacing="0.1" font-weight="normal" opacity="0.99" y="0.48">ISP_PORT1</text>
<text transform="matrix(7.642,-0.709,0.893,6.067,788.7,361.2)" font-size="1.32" text-anchor="middle" fill="#dadad6" stroke="#dadad6" stroke-width="0.035" letter-spacing="0.1" font-weight="normal" opacity="0.99" y="0.48">C2</text>
<text transform="matrix(7.704,-0.717,0.907,6.166,793.3,392.7)" font-size="1.32" text-anchor="middle" fill="#dadad6" stroke="#dadad6" stroke-width="0.035" letter-spacing="0.1" font-weight="normal" opacity="0.99" y="0.48">C1</text>
<text transform="matrix(-0.955,-6.063,7.640,-0.709,828.3,358.5)" font-size="1.32" text-anchor="middle" fill="#dadad6" stroke="#dadad6" stroke-width="0.035" letter-spacing="0.1" font-weight="normal" opacity="0.99" y="0.48">CRYSTAL1</text>
<text transform="matrix(7.236,-0.663,0.381,5.450,476.5,169.3)" font-size="1.32" text-anchor="middle" fill="#dadad6" stroke="#dadad6" stroke-width="0.035" letter-spacing="0.1" font-weight="normal" opacity="0.99" y="0.48">D9</text>
<polygon points="653.4,191.3 664.2,190.3 665.2,198.5 654.4,199.5" fill="#b9a30c" stroke="#ddd27a" stroke-width="0.7"/><polygon points="662.2,194.7 662.2,195.4 661.8,196.0 661.2,196.6 660.5,197.0 659.6,197.1 658.7,197.1 657.8,196.9 657.1,196.5 656.6,195.9 656.4,195.2 656.4,194.5 656.8,193.8 657.4,193.3 658.2,192.9 659.0,192.7 660.0,192.7 660.8,193.0 661.5,193.4 662.0,194.0" fill="#84761a" />
<polygon points="659.7,152.7 659.6,154.0 659.0,155.2 657.9,156.2 656.5,156.9 654.8,157.2 653.2,157.2 651.6,156.7 650.3,156.0 649.4,154.9 649.0,153.7 649.1,152.4 649.8,151.3 650.8,150.3 652.3,149.6 653.9,149.2 655.6,149.3 657.1,149.7 658.4,150.5 659.3,151.5" fill="#b9a30c" stroke="#ddd27a" stroke-width="0.7"/><polygon points="657.2,153.0 657.2,153.6 656.8,154.3 656.3,154.8 655.5,155.2 654.6,155.4 653.7,155.4 652.9,155.1 652.2,154.7 651.7,154.1 651.5,153.5 651.5,152.8 651.9,152.2 652.4,151.6 653.2,151.2 654.1,151.1 655.0,151.1 655.8,151.3 656.5,151.7 657.0,152.3" fill="#84761a" />
<polygon points="683.4,192.7 683.3,194.0 682.7,195.2 681.6,196.2 680.2,197.0 678.5,197.3 676.9,197.3 675.3,196.8 674.0,196.0 673.1,195.0 672.6,193.7 672.7,192.4 673.4,191.2 674.5,190.2 675.9,189.5 677.5,189.1 679.2,189.2 680.8,189.6 682.1,190.4 683.0,191.5" fill="#b9a30c" stroke="#ddd27a" stroke-width="0.7"/><polygon points="681.0,192.9 680.9,193.6 680.6,194.3 680.0,194.8 679.2,195.2 678.3,195.4 677.4,195.4 676.5,195.2 675.8,194.7 675.3,194.2 675.1,193.5 675.2,192.8 675.5,192.1 676.1,191.6 676.9,191.2 677.8,191.0 678.7,191.0 679.5,191.3 680.2,191.7 680.7,192.3" fill="#84761a" />
<polygon points="678.2,151.0 678.1,152.3 677.5,153.5 676.4,154.5 675.0,155.2 673.4,155.5 671.7,155.5 670.1,155.0 668.8,154.3 667.9,153.2 667.5,152.0 667.6,150.7 668.3,149.6 669.3,148.6 670.8,147.9 672.4,147.5 674.1,147.6 675.6,148.0 676.9,148.8 677.8,149.8" fill="#b9a30c" stroke="#ddd27a" stroke-width="0.7"/><polygon points="675.8,151.3 675.7,151.9 675.4,152.6 674.8,153.1 674.0,153.5 673.1,153.7 672.2,153.7 671.4,153.4 670.7,153.0 670.2,152.4 670.0,151.8 670.0,151.1 670.4,150.5 671.0,149.9 671.7,149.5 672.6,149.4 673.5,149.4 674.4,149.6 675.1,150.0 675.5,150.6" fill="#84761a" />
<polygon points="702.2,191.0 702.1,192.3 701.5,193.5 700.4,194.5 698.9,195.2 697.3,195.6 695.6,195.5 694.0,195.1 692.7,194.3 691.8,193.2 691.4,192.0 691.5,190.7 692.1,189.5 693.2,188.5 694.6,187.8 696.2,187.4 697.9,187.5 699.5,187.9 700.8,188.7 701.7,189.8" fill="#b9a30c" stroke="#ddd27a" stroke-width="0.7"/><polygon points="699.7,191.2 699.6,191.9 699.3,192.6 698.7,193.1 697.9,193.5 697.1,193.7 696.1,193.7 695.3,193.4 694.6,193.0 694.1,192.4 693.9,191.8 693.9,191.1 694.2,190.4 694.8,189.9 695.6,189.5 696.5,189.3 697.4,189.3 698.3,189.5 699.0,190.0 699.5,190.6" fill="#84761a" />
<polygon points="696.7,149.3 696.6,150.6 696.0,151.8 695.0,152.8 693.5,153.5 691.9,153.8 690.2,153.8 688.7,153.3 687.4,152.6 686.5,151.5 686.1,150.3 686.2,149.1 686.8,147.9 687.8,146.9 689.3,146.2 690.9,145.8 692.6,145.9 694.1,146.3 695.4,147.1 696.3,148.1" fill="#b9a30c" stroke="#ddd27a" stroke-width="0.7"/><polygon points="694.3,149.6 694.2,150.2 693.9,150.9 693.3,151.4 692.6,151.8 691.7,152.0 690.8,152.0 689.9,151.7 689.2,151.3 688.7,150.7 688.5,150.1 688.6,149.4 688.9,148.8 689.5,148.2 690.2,147.8 691.1,147.7 692.0,147.7 692.9,147.9 693.6,148.3 694.1,148.9" fill="#84761a" />
<polygon points="720.9,189.3 720.8,190.6 720.2,191.8 719.1,192.8 717.7,193.5 716.0,193.9 714.3,193.8 712.8,193.4 711.4,192.6 710.5,191.5 710.1,190.3 710.2,189.0 710.8,187.8 711.9,186.8 713.3,186.0 714.9,185.7 716.6,185.7 718.2,186.2 719.5,187.0 720.5,188.0" fill="#b9a30c" stroke="#ddd27a" stroke-width="0.7"/><polygon points="718.4,189.5 718.4,190.2 718.0,190.9 717.5,191.4 716.7,191.8 715.8,192.0 714.9,192.0 714.0,191.7 713.3,191.3 712.8,190.7 712.6,190.0 712.6,189.3 713.0,188.7 713.5,188.1 714.3,187.8 715.2,187.6 716.1,187.6 717.0,187.8 717.7,188.3 718.2,188.8" fill="#84761a" />
<polygon points="715.3,147.6 715.2,148.9 714.6,150.1 713.5,151.1 712.1,151.8 710.4,152.1 708.8,152.1 707.2,151.7 705.9,150.9 705.0,149.8 704.6,148.6 704.7,147.4 705.3,146.2 706.3,145.2 707.8,144.5 709.4,144.1 711.1,144.2 712.6,144.6 713.9,145.4 714.8,146.4" fill="#b9a30c" stroke="#ddd27a" stroke-width="0.7"/><polygon points="712.8,147.9 712.7,148.5 712.4,149.2 711.8,149.7 711.1,150.1 710.2,150.3 709.3,150.3 708.4,150.0 707.7,149.6 707.3,149.0 707.0,148.4 707.1,147.7 707.4,147.1 708.0,146.5 708.7,146.2 709.6,146.0 710.5,146.0 711.4,146.2 712.1,146.6 712.6,147.2" fill="#84761a" />
<polygon points="739.6,187.6 739.5,188.8 738.9,190.1 737.9,191.1 736.4,191.8 734.8,192.1 733.1,192.1 731.5,191.7 730.2,190.9 729.3,189.8 728.8,188.5 728.9,187.3 729.5,186.1 730.6,185.0 732.0,184.3 733.7,184.0 735.3,184.0 736.9,184.5 738.3,185.3 739.2,186.3" fill="#b9a30c" stroke="#ddd27a" stroke-width="0.7"/><polygon points="737.1,187.8 737.1,188.5 736.8,189.1 736.2,189.7 735.4,190.1 734.5,190.3 733.6,190.2 732.8,190.0 732.0,189.6 731.5,189.0 731.3,188.3 731.3,187.6 731.7,187.0 732.3,186.4 733.0,186.0 733.9,185.8 734.8,185.9 735.7,186.1 736.4,186.5 736.9,187.1" fill="#84761a" />
<polygon points="733.8,145.9 733.7,147.2 733.1,148.4 732.0,149.4 730.6,150.1 729.0,150.4 727.3,150.4 725.7,150.0 724.4,149.2 723.5,148.1 723.1,146.9 723.2,145.7 723.8,144.5 724.8,143.5 726.2,142.8 727.9,142.4 729.5,142.5 731.1,142.9 732.4,143.7 733.3,144.7" fill="#b9a30c" stroke="#ddd27a" stroke-width="0.7"/><polygon points="731.3,146.2 731.3,146.8 730.9,147.5 730.4,148.0 729.6,148.4 728.7,148.6 727.8,148.6 727.0,148.3 726.3,147.9 725.8,147.3 725.5,146.7 725.6,146.0 725.9,145.4 726.5,144.8 727.2,144.5 728.1,144.3 729.0,144.3 729.9,144.5 730.6,144.9 731.1,145.5" fill="#84761a" />
<polygon points="758.3,185.8 758.3,187.1 757.7,188.3 756.6,189.4 755.2,190.1 753.5,190.4 751.8,190.4 750.2,189.9 748.9,189.1 748.0,188.1 747.5,186.8 747.6,185.5 748.2,184.3 749.3,183.3 750.7,182.6 752.3,182.3 754.0,182.3 755.6,182.7 757.0,183.5 757.9,184.6" fill="#b9a30c" stroke="#ddd27a" stroke-width="0.7"/><polygon points="755.9,186.1 755.8,186.8 755.5,187.4 754.9,188.0 754.1,188.4 753.3,188.5 752.3,188.5 751.5,188.3 750.8,187.9 750.3,187.3 750.0,186.6 750.1,185.9 750.4,185.3 751.0,184.7 751.7,184.3 752.6,184.1 753.5,184.2 754.4,184.4 755.1,184.8 755.6,185.4" fill="#84761a" />
<polygon points="752.3,144.2 752.2,145.5 751.6,146.7 750.5,147.7 749.1,148.4 747.5,148.7 745.8,148.7 744.3,148.3 742.9,147.5 742.0,146.4 741.6,145.2 741.7,144.0 742.3,142.8 743.3,141.8 744.7,141.1 746.4,140.7 748.0,140.8 749.6,141.2 750.9,142.0 751.8,143.0" fill="#b9a30c" stroke="#ddd27a" stroke-width="0.7"/><polygon points="749.8,144.5 749.8,145.2 749.5,145.8 748.9,146.3 748.1,146.7 747.2,146.9 746.3,146.9 745.5,146.6 744.8,146.2 744.3,145.7 744.0,145.0 744.1,144.3 744.4,143.7 745.0,143.1 745.7,142.8 746.6,142.6 747.5,142.6 748.4,142.8 749.1,143.3 749.6,143.8" fill="#84761a" />
<polygon points="777.1,184.1 777.0,185.4 776.4,186.6 775.3,187.6 773.9,188.4 772.3,188.7 770.6,188.7 769.0,188.2 767.6,187.4 766.7,186.3 766.3,185.1 766.3,183.8 766.9,182.6 768.0,181.6 769.4,180.9 771.0,180.5 772.7,180.6 774.3,181.0 775.7,181.8 776.6,182.9" fill="#b9a30c" stroke="#ddd27a" stroke-width="0.7"/><polygon points="774.6,184.3 774.5,185.0 774.2,185.7 773.6,186.2 772.9,186.6 772.0,186.8 771.1,186.8 770.2,186.6 769.5,186.1 769.0,185.6 768.7,184.9 768.8,184.2 769.1,183.5 769.7,183.0 770.4,182.6 771.3,182.4 772.2,182.4 773.1,182.7 773.8,183.1 774.3,183.7" fill="#84761a" />
<polygon points="770.8,142.6 770.7,143.8 770.1,145.0 769.1,146.0 767.7,146.7 766.0,147.0 764.4,147.0 762.8,146.6 761.5,145.8 760.5,144.7 760.1,143.5 760.2,142.3 760.8,141.1 761.8,140.1 763.2,139.4 764.8,139.1 766.5,139.1 768.1,139.5 769.4,140.3 770.3,141.3" fill="#b9a30c" stroke="#ddd27a" stroke-width="0.7"/><polygon points="768.3,142.8 768.3,143.5 768.0,144.1 767.4,144.6 766.6,145.0 765.8,145.2 764.9,145.2 764.0,144.9 763.3,144.5 762.8,144.0 762.6,143.3 762.6,142.6 762.9,142.0 763.5,141.5 764.2,141.1 765.1,140.9 766.0,140.9 766.9,141.1 767.6,141.6 768.1,142.1" fill="#84761a" />
<polygon points="665.0,294.3 676.1,293.3 677.2,301.9 666.1,303.0" fill="#b9a30c" stroke="#ddd27a" stroke-width="0.7"/><polygon points="674.1,297.8 674.0,298.6 673.7,299.3 673.1,299.8 672.3,300.2 671.4,300.4 670.4,300.4 669.6,300.2 668.8,299.7 668.3,299.1 668.1,298.4 668.2,297.6 668.5,297.0 669.1,296.4 669.9,296.0 670.8,295.8 671.8,295.8 672.6,296.0 673.4,296.5 673.9,297.1" fill="#84761a" />
<polygon points="671.4,253.5 671.3,254.9 670.6,256.1 669.5,257.2 668.1,257.9 666.4,258.3 664.7,258.2 663.1,257.8 661.7,256.9 660.8,255.8 660.4,254.5 660.5,253.2 661.1,252.0 662.2,250.9 663.7,250.2 665.4,249.8 667.1,249.9 668.7,250.3 670.0,251.1 670.9,252.3" fill="#b9a30c" stroke="#ddd27a" stroke-width="0.7"/><polygon points="668.8,253.8 668.8,254.5 668.4,255.2 667.8,255.7 667.1,256.1 666.1,256.3 665.2,256.3 664.4,256.1 663.6,255.6 663.1,255.0 662.9,254.3 663.0,253.6 663.3,252.9 663.9,252.4 664.7,252.0 665.6,251.8 666.5,251.8 667.4,252.0 668.1,252.5 668.6,253.1" fill="#84761a" />
<polygon points="695.9,295.8 695.8,297.2 695.2,298.5 694.1,299.5 692.6,300.3 690.9,300.7 689.2,300.6 687.6,300.1 686.2,299.3 685.3,298.1 684.8,296.8 684.9,295.5 685.6,294.2 686.7,293.1 688.2,292.4 689.9,292.0 691.6,292.1 693.2,292.5 694.6,293.4 695.5,294.5" fill="#b9a30c" stroke="#ddd27a" stroke-width="0.7"/><polygon points="693.4,296.0 693.3,296.8 693.0,297.5 692.4,298.1 691.6,298.5 690.7,298.7 689.7,298.6 688.9,298.4 688.1,297.9 687.6,297.3 687.4,296.6 687.4,295.9 687.8,295.2 688.4,294.6 689.2,294.2 690.1,294.0 691.0,294.0 691.9,294.3 692.6,294.7 693.2,295.3" fill="#84761a" />
<polygon points="690.4,251.8 690.3,253.1 689.7,254.4 688.6,255.4 687.1,256.2 685.5,256.5 683.7,256.5 682.1,256.0 680.8,255.2 679.9,254.1 679.4,252.8 679.6,251.5 680.2,250.2 681.3,249.2 682.7,248.4 684.4,248.1 686.1,248.1 687.7,248.6 689.1,249.4 690.0,250.5" fill="#b9a30c" stroke="#ddd27a" stroke-width="0.7"/><polygon points="687.9,252.0 687.8,252.7 687.5,253.4 686.9,254.0 686.1,254.4 685.2,254.6 684.3,254.5 683.4,254.3 682.7,253.9 682.2,253.3 682.0,252.6 682.0,251.8 682.4,251.2 683.0,250.6 683.7,250.2 684.7,250.0 685.6,250.0 686.4,250.3 687.2,250.7 687.7,251.3" fill="#84761a" />
<polygon points="715.2,294.0 715.1,295.4 714.5,296.7 713.4,297.7 711.9,298.5 710.2,298.9 708.5,298.8 706.8,298.3 705.5,297.5 704.5,296.4 704.1,295.1 704.2,293.7 704.8,292.4 705.9,291.3 707.4,290.6 709.1,290.2 710.8,290.3 712.5,290.7 713.8,291.6 714.8,292.7" fill="#b9a30c" stroke="#ddd27a" stroke-width="0.7"/><polygon points="712.7,294.3 712.6,295.0 712.3,295.7 711.7,296.3 710.9,296.7 710.0,296.9 709.0,296.8 708.1,296.6 707.4,296.1 706.9,295.5 706.7,294.8 706.7,294.1 707.1,293.4 707.7,292.8 708.4,292.4 709.4,292.2 710.3,292.2 711.2,292.5 711.9,292.9 712.4,293.6" fill="#84761a" />
<polygon points="709.5,250.0 709.4,251.4 708.8,252.6 707.7,253.7 706.2,254.4 704.5,254.8 702.8,254.7 701.2,254.2 699.9,253.4 698.9,252.3 698.5,251.0 698.6,249.7 699.2,248.5 700.3,247.4 701.8,246.7 703.4,246.3 705.2,246.4 706.8,246.8 708.1,247.6 709.0,248.7" fill="#b9a30c" stroke="#ddd27a" stroke-width="0.7"/><polygon points="707.0,250.3 706.9,251.0 706.6,251.7 706.0,252.2 705.2,252.6 704.3,252.8 703.4,252.8 702.5,252.5 701.8,252.1 701.3,251.5 701.0,250.8 701.1,250.1 701.4,249.4 702.0,248.8 702.8,248.4 703.7,248.2 704.6,248.3 705.5,248.5 706.2,249.0 706.7,249.6" fill="#84761a" />
<polygon points="734.5,292.2 734.4,293.6 733.8,294.9 732.7,296.0 731.2,296.7 729.5,297.1 727.8,297.0 726.1,296.6 724.8,295.7 723.8,294.6 723.4,293.3 723.5,291.9 724.1,290.6 725.2,289.6 726.7,288.8 728.4,288.4 730.1,288.5 731.7,289.0 733.1,289.8 734.0,290.9" fill="#b9a30c" stroke="#ddd27a" stroke-width="0.7"/><polygon points="731.9,292.5 731.9,293.2 731.5,293.9 731.0,294.5 730.2,294.9 729.2,295.1 728.3,295.1 727.4,294.8 726.7,294.4 726.2,293.7 725.9,293.0 726.0,292.3 726.3,291.6 726.9,291.0 727.7,290.6 728.6,290.4 729.6,290.5 730.4,290.7 731.2,291.2 731.7,291.8" fill="#84761a" />
<polygon points="728.5,248.3 728.4,249.6 727.8,250.8 726.7,251.9 725.3,252.6 723.6,253.0 721.9,252.9 720.3,252.5 718.9,251.7 718.0,250.6 717.5,249.3 717.6,248.0 718.3,246.7 719.4,245.7 720.8,244.9 722.5,244.6 724.2,244.6 725.8,245.1 727.1,245.9 728.1,247.0" fill="#b9a30c" stroke="#ddd27a" stroke-width="0.7"/><polygon points="726.0,248.5 726.0,249.2 725.6,249.9 725.0,250.5 724.2,250.9 723.3,251.1 722.4,251.0 721.5,250.8 720.8,250.3 720.3,249.7 720.1,249.0 720.1,248.3 720.5,247.7 721.0,247.1 721.8,246.7 722.7,246.5 723.7,246.5 724.5,246.8 725.3,247.2 725.8,247.8" fill="#84761a" />
<polygon points="753.7,290.5 753.7,291.8 753.0,293.1 752.0,294.2 750.5,294.9 748.8,295.3 747.1,295.2 745.4,294.8 744.1,293.9 743.1,292.8 742.6,291.5 742.7,290.1 743.4,288.9 744.5,287.8 745.9,287.0 747.6,286.7 749.3,286.7 751.0,287.2 752.3,288.0 753.3,289.2" fill="#b9a30c" stroke="#ddd27a" stroke-width="0.7"/><polygon points="751.2,290.7 751.2,291.4 750.8,292.1 750.2,292.7 749.4,293.1 748.5,293.3 747.6,293.3 746.7,293.0 746.0,292.6 745.4,292.0 745.2,291.3 745.2,290.5 745.6,289.8 746.2,289.3 747.0,288.8 747.9,288.6 748.8,288.7 749.7,288.9 750.4,289.4 751.0,290.0" fill="#84761a" />
<polygon points="747.6,246.5 747.5,247.8 746.9,249.1 745.8,250.1 744.3,250.9 742.7,251.2 740.9,251.2 739.3,250.7 738.0,249.9 737.0,248.8 736.6,247.5 736.7,246.2 737.3,244.9 738.4,243.9 739.8,243.2 741.5,242.8 743.2,242.9 744.8,243.3 746.2,244.1 747.1,245.2" fill="#b9a30c" stroke="#ddd27a" stroke-width="0.7"/><polygon points="745.0,246.7 745.0,247.5 744.7,248.1 744.1,248.7 743.3,249.1 742.4,249.3 741.5,249.3 740.6,249.0 739.9,248.6 739.4,248.0 739.1,247.3 739.2,246.6 739.5,245.9 740.1,245.3 740.9,244.9 741.8,244.7 742.7,244.8 743.6,245.0 744.3,245.5 744.8,246.1" fill="#84761a" />
<polygon points="773.0,288.7 772.9,290.0 772.3,291.3 771.2,292.4 769.8,293.1 768.1,293.5 766.3,293.5 764.7,293.0 763.3,292.2 762.4,291.0 761.9,289.7 762.0,288.4 762.6,287.1 763.7,286.0 765.2,285.3 766.8,284.9 768.6,284.9 770.2,285.4 771.6,286.2 772.5,287.4" fill="#b9a30c" stroke="#ddd27a" stroke-width="0.7"/><polygon points="770.5,288.9 770.4,289.7 770.1,290.3 769.5,290.9 768.7,291.3 767.8,291.5 766.9,291.5 766.0,291.2 765.2,290.8 764.7,290.2 764.5,289.5 764.5,288.7 764.8,288.1 765.4,287.5 766.2,287.1 767.1,286.9 768.1,286.9 769.0,287.1 769.7,287.6 770.2,288.2" fill="#84761a" />
<polygon points="766.6,244.8 766.5,246.1 765.9,247.3 764.8,248.4 763.4,249.1 761.7,249.5 760.0,249.4 758.4,249.0 757.0,248.2 756.1,247.0 755.6,245.8 755.7,244.4 756.3,243.2 757.4,242.2 758.9,241.4 760.5,241.1 762.2,241.1 763.9,241.6 765.2,242.4 766.1,243.5" fill="#b9a30c" stroke="#ddd27a" stroke-width="0.7"/><polygon points="764.1,245.0 764.0,245.7 763.7,246.4 763.1,246.9 762.4,247.3 761.5,247.5 760.5,247.5 759.6,247.3 758.9,246.8 758.4,246.2 758.2,245.5 758.2,244.8 758.5,244.1 759.1,243.6 759.9,243.2 760.8,243.0 761.7,243.0 762.6,243.3 763.3,243.7 763.8,244.3" fill="#84761a" />
<polygon points="792.3,286.9 792.2,288.3 791.6,289.5 790.5,290.6 789.1,291.4 787.4,291.7 785.6,291.7 784.0,291.2 782.6,290.4 781.6,289.2 781.2,287.9 781.2,286.6 781.9,285.3 782.9,284.2 784.4,283.5 786.1,283.1 787.8,283.2 789.5,283.6 790.8,284.5 791.8,285.6" fill="#b9a30c" stroke="#ddd27a" stroke-width="0.7"/><polygon points="789.7,287.1 789.7,287.9 789.4,288.6 788.8,289.1 788.0,289.6 787.1,289.8 786.1,289.7 785.2,289.5 784.5,289.0 784.0,288.4 783.7,287.7 783.8,287.0 784.1,286.3 784.7,285.7 785.5,285.3 786.4,285.1 787.3,285.1 788.2,285.4 788.9,285.8 789.5,286.4" fill="#84761a" />
<polygon points="785.6,243.0 785.6,244.3 785.0,245.6 783.9,246.6 782.5,247.4 780.8,247.7 779.1,247.7 777.4,247.2 776.1,246.4 775.1,245.3 774.7,244.0 774.7,242.7 775.4,241.4 776.4,240.4 777.9,239.7 779.5,239.3 781.3,239.3 782.9,239.8 784.2,240.6 785.2,241.7" fill="#b9a30c" stroke="#ddd27a" stroke-width="0.7"/><polygon points="783.1,243.2 783.1,244.0 782.8,244.6 782.2,245.2 781.4,245.6 780.5,245.8 779.6,245.8 778.7,245.5 778.0,245.1 777.4,244.5 777.2,243.8 777.2,243.1 777.6,242.4 778.1,241.8 778.9,241.4 779.8,241.2 780.8,241.3 781.6,241.5 782.4,241.9 782.9,242.5" fill="#84761a" />
<polygon points="897.8,222.6 897.8,224.0 897.2,225.3 896.1,226.4 894.6,227.2 892.9,227.5 891.0,227.5 889.3,227.0 887.9,226.1 886.8,225.0 886.3,223.7 886.3,222.3 886.9,221.0 888.0,219.9 889.5,219.1 891.3,218.7 893.1,218.8 894.8,219.3 896.3,220.1 897.3,221.3" fill="#b9a30c" stroke="#ddd27a" stroke-width="0.7"/><polygon points="895.0,222.9 895.0,223.6 894.7,224.2 894.1,224.8 893.4,225.2 892.5,225.4 891.5,225.4 890.7,225.1 889.9,224.7 889.4,224.1 889.1,223.4 889.1,222.7 889.4,222.0 890.0,221.5 890.8,221.1 891.7,220.9 892.6,220.9 893.5,221.1 894.2,221.6 894.7,222.2" fill="#84761a" />
<polygon points="956.9,217.2 956.8,218.5 956.3,219.8 955.2,220.9 953.7,221.7 952.0,222.1 950.1,222.0 948.4,221.6 947.0,220.7 945.9,219.5 945.3,218.2 945.4,216.8 945.9,215.5 947.0,214.4 948.5,213.7 950.2,213.3 952.1,213.3 953.8,213.8 955.2,214.7 956.3,215.8" fill="#b9a30c" stroke="#ddd27a" stroke-width="0.7"/><polygon points="954.1,217.4 954.0,218.1 953.8,218.8 953.2,219.4 952.4,219.7 951.5,219.9 950.6,219.9 949.7,219.7 949.0,219.2 948.4,218.6 948.2,218.0 948.2,217.2 948.5,216.6 949.0,216.0 949.8,215.6 950.7,215.4 951.6,215.5 952.5,215.7 953.2,216.1 953.8,216.7" fill="#84761a" />
<polygon points="900.4,237.0 900.4,238.4 899.8,239.7 898.7,240.8 897.2,241.6 895.5,242.0 893.6,241.9 891.9,241.4 890.4,240.6 889.4,239.4 888.9,238.1 888.9,236.7 889.5,235.3 890.6,234.2 892.1,233.5 893.9,233.1 895.7,233.1 897.4,233.6 898.9,234.5 899.9,235.6" fill="#b9a30c" stroke="#ddd27a" stroke-width="0.7"/><polygon points="897.6,237.2 897.6,238.0 897.3,238.6 896.7,239.2 896.0,239.6 895.1,239.8 894.1,239.8 893.2,239.5 892.5,239.1 892.0,238.5 891.7,237.8 891.7,237.1 892.0,236.4 892.6,235.8 893.4,235.4 894.2,235.2 895.2,235.3 896.1,235.5 896.8,236.0 897.3,236.6" fill="#84761a" />
<polygon points="959.7,231.5 959.7,232.9 959.1,234.2 958.0,235.3 956.5,236.1 954.8,236.5 953.0,236.4 951.2,236.0 949.8,235.1 948.7,233.9 948.1,232.6 948.2,231.2 948.7,229.9 949.8,228.8 951.3,228.0 953.1,227.6 954.9,227.7 956.6,228.2 958.1,229.0 959.1,230.2" fill="#b9a30c" stroke="#ddd27a" stroke-width="0.7"/><polygon points="956.9,231.8 956.9,232.5 956.6,233.2 956.0,233.7 955.3,234.1 954.4,234.3 953.4,234.3 952.5,234.1 951.8,233.6 951.2,233.0 951.0,232.3 951.0,231.6 951.3,230.9 951.8,230.4 952.6,230.0 953.5,229.8 954.4,229.8 955.3,230.1 956.1,230.5 956.6,231.1" fill="#84761a" />
<polygon points="903.1,251.5 903.0,252.9 902.4,254.2 901.3,255.3 899.8,256.1 898.1,256.5 896.2,256.5 894.5,256.0 893.0,255.1 892.0,253.9 891.5,252.6 891.5,251.2 892.1,249.8 893.2,248.7 894.7,247.9 896.5,247.6 898.3,247.6 900.0,248.1 901.5,249.0 902.5,250.1" fill="#b9a30c" stroke="#ddd27a" stroke-width="0.7"/><polygon points="900.2,251.8 900.2,252.5 899.9,253.2 899.4,253.7 898.6,254.1 897.7,254.3 896.7,254.3 895.9,254.0 895.1,253.6 894.6,253.0 894.3,252.3 894.3,251.6 894.6,250.9 895.2,250.3 896.0,249.9 896.9,249.7 897.8,249.8 898.7,250.0 899.4,250.5 900.0,251.1" fill="#84761a" />
<polygon points="962.6,246.0 962.6,247.4 962.0,248.7 960.9,249.8 959.4,250.6 957.6,251.0 955.8,251.0 954.1,250.5 952.6,249.6 951.5,248.4 951.0,247.1 951.0,245.7 951.6,244.3 952.7,243.2 954.1,242.5 955.9,242.1 957.7,242.1 959.5,242.6 960.9,243.5 962.0,244.7" fill="#b9a30c" stroke="#ddd27a" stroke-width="0.7"/><polygon points="959.7,246.3 959.7,247.0 959.4,247.7 958.9,248.2 958.1,248.6 957.2,248.8 956.3,248.8 955.4,248.6 954.6,248.1 954.1,247.5 953.8,246.8 953.8,246.1 954.1,245.4 954.7,244.8 955.4,244.4 956.3,244.3 957.3,244.3 958.2,244.5 958.9,245.0 959.5,245.6" fill="#84761a" />
<polygon points="905.7,266.1 905.7,267.5 905.1,268.9 904.0,270.0 902.5,270.8 900.7,271.2 898.9,271.1 897.1,270.6 895.7,269.7 894.6,268.6 894.1,267.2 894.1,265.8 894.7,264.4 895.8,263.3 897.3,262.5 899.1,262.1 900.9,262.2 902.7,262.7 904.1,263.6 905.2,264.7" fill="#b9a30c" stroke="#ddd27a" stroke-width="0.7"/><polygon points="902.9,266.4 902.9,267.1 902.6,267.8 902.0,268.4 901.2,268.8 900.3,269.0 899.4,268.9 898.5,268.7 897.7,268.2 897.2,267.6 896.9,266.9 896.9,266.2 897.2,265.5 897.8,264.9 898.6,264.5 899.5,264.3 900.4,264.4 901.3,264.6 902.1,265.1 902.6,265.7" fill="#84761a" />
<polygon points="965.5,260.6 965.4,262.0 964.9,263.3 963.8,264.5 962.3,265.3 960.5,265.6 958.7,265.6 956.9,265.1 955.4,264.2 954.4,263.0 953.8,261.7 953.8,260.3 954.4,258.9 955.5,257.8 957.0,257.0 958.8,256.6 960.6,256.7 962.3,257.2 963.8,258.1 964.9,259.2" fill="#b9a30c" stroke="#ddd27a" stroke-width="0.7"/><polygon points="962.6,260.9 962.6,261.6 962.3,262.3 961.8,262.8 961.0,263.2 960.1,263.4 959.1,263.4 958.2,263.2 957.5,262.7 956.9,262.1 956.6,261.4 956.7,260.7 957.0,260.0 957.5,259.4 958.3,259.0 959.2,258.8 960.1,258.9 961.0,259.1 961.8,259.6 962.3,260.2" fill="#84761a" />
<polygon points="908.4,280.8 908.4,282.3 907.8,283.6 906.7,284.7 905.2,285.5 903.4,285.9 901.5,285.9 899.8,285.4 898.3,284.5 897.3,283.3 896.7,281.9 896.8,280.5 897.4,279.2 898.5,278.0 900.0,277.2 901.7,276.8 903.6,276.9 905.3,277.4 906.8,278.3 907.9,279.5" fill="#b9a30c" stroke="#ddd27a" stroke-width="0.7"/><polygon points="905.6,281.1 905.5,281.8 905.2,282.5 904.7,283.1 903.9,283.5 903.0,283.7 902.0,283.7 901.1,283.4 900.4,283.0 899.8,282.4 899.6,281.7 899.6,280.9 899.9,280.2 900.5,279.7 901.2,279.3 902.1,279.1 903.1,279.1 904.0,279.3 904.7,279.8 905.3,280.4" fill="#84761a" />
<polygon points="968.4,275.3 968.4,276.7 967.8,278.1 966.7,279.2 965.2,280.0 963.4,280.4 961.6,280.3 959.8,279.8 958.3,278.9 957.2,277.8 956.7,276.4 956.7,275.0 957.3,273.6 958.4,272.5 959.9,271.7 961.6,271.3 963.5,271.4 965.2,271.9 966.7,272.7 967.8,273.9" fill="#b9a30c" stroke="#ddd27a" stroke-width="0.7"/><polygon points="965.5,275.6 965.5,276.3 965.2,277.0 964.7,277.6 963.9,278.0 963.0,278.2 962.0,278.1 961.1,277.9 960.4,277.4 959.8,276.8 959.5,276.1 959.5,275.4 959.8,274.7 960.4,274.1 961.2,273.7 962.1,273.5 963.0,273.5 963.9,273.8 964.7,274.3 965.2,274.9" fill="#84761a" />
<polygon points="911.1,295.7 911.1,297.1 910.5,298.5 909.4,299.6 907.8,300.4 906.1,300.8 904.2,300.8 902.5,300.3 901.0,299.4 899.9,298.2 899.4,296.8 899.4,295.3 900.0,294.0 901.1,292.9 902.6,292.1 904.4,291.7 906.3,291.7 908.0,292.2 909.5,293.1 910.6,294.3" fill="#b9a30c" stroke="#ddd27a" stroke-width="0.7"/><polygon points="908.3,296.0 908.2,296.7 907.9,297.4 907.4,298.0 906.6,298.4 905.7,298.6 904.7,298.6 903.8,298.3 903.1,297.8 902.5,297.2 902.2,296.5 902.2,295.8 902.6,295.1 903.1,294.5 903.9,294.1 904.8,293.9 905.8,293.9 906.7,294.2 907.4,294.6 908.0,295.2" fill="#84761a" />
<polygon points="971.3,290.1 971.3,291.6 970.7,292.9 969.6,294.0 968.1,294.8 966.3,295.2 964.5,295.2 962.7,294.7 961.2,293.8 960.1,292.6 959.6,291.2 959.6,289.8 960.2,288.4 961.3,287.3 962.8,286.5 964.5,286.1 966.4,286.2 968.2,286.7 969.6,287.5 970.7,288.7" fill="#b9a30c" stroke="#ddd27a" stroke-width="0.7"/><polygon points="968.4,290.4 968.4,291.1 968.1,291.8 967.6,292.4 966.8,292.8 965.9,293.0 964.9,293.0 964.0,292.7 963.3,292.3 962.7,291.7 962.4,290.9 962.4,290.2 962.7,289.5 963.3,288.9 964.1,288.5 965.0,288.3 965.9,288.4 966.8,288.6 967.6,289.1 968.2,289.7" fill="#84761a" />
<polygon points="913.8,310.7 913.8,312.1 913.2,313.5 912.1,314.6 910.6,315.4 908.8,315.8 906.9,315.8 905.1,315.3 903.7,314.4 902.6,313.1 902.0,311.7 902.1,310.3 902.7,308.9 903.8,307.8 905.3,307.0 907.1,306.6 909.0,306.6 910.7,307.2 912.2,308.1 913.3,309.3" fill="#b9a30c" stroke="#ddd27a" stroke-width="0.7"/><polygon points="911.0,310.9 910.9,311.7 910.6,312.4 910.1,313.0 909.3,313.4 908.4,313.6 907.4,313.5 906.5,313.3 905.7,312.8 905.2,312.2 904.9,311.5 904.9,310.7 905.2,310.0 905.8,309.5 906.6,309.0 907.5,308.8 908.5,308.9 909.4,309.1 910.1,309.6 910.7,310.2" fill="#84761a" />
<polygon points="974.3,305.1 974.2,306.5 973.7,307.9 972.6,309.0 971.0,309.8 969.3,310.2 967.4,310.2 965.6,309.7 964.1,308.8 963.0,307.5 962.5,306.2 962.5,304.7 963.1,303.3 964.2,302.2 965.7,301.4 967.5,301.0 969.3,301.1 971.1,301.6 972.6,302.5 973.7,303.7" fill="#b9a30c" stroke="#ddd27a" stroke-width="0.7"/><polygon points="971.4,305.3 971.4,306.1 971.1,306.8 970.5,307.4 969.7,307.8 968.8,308.0 967.9,307.9 967.0,307.7 966.2,307.2 965.6,306.6 965.3,305.9 965.4,305.1 965.7,304.4 966.2,303.9 967.0,303.4 967.9,303.2 968.9,303.3 969.8,303.5 970.5,304.0 971.1,304.6" fill="#84761a" />
<polygon points="916.6,325.7 916.5,327.2 915.9,328.6 914.8,329.7 913.3,330.5 911.5,330.9 909.6,330.9 907.9,330.4 906.4,329.5 905.3,328.2 904.7,326.8 904.8,325.4 905.4,324.0 906.5,322.9 908.0,322.0 909.8,321.6 911.7,321.7 913.5,322.2 914.9,323.1 916.0,324.3" fill="#b9a30c" stroke="#ddd27a" stroke-width="0.7"/><polygon points="913.7,326.0 913.7,326.8 913.4,327.5 912.8,328.1 912.0,328.5 911.1,328.7 910.1,328.6 909.2,328.4 908.5,327.9 907.9,327.3 907.6,326.6 907.6,325.8 908.0,325.1 908.5,324.5 909.3,324.1 910.2,323.9 911.2,323.9 912.1,324.2 912.9,324.7 913.4,325.3" fill="#84761a" />
<polygon points="977.2,320.1 977.2,321.6 976.6,323.0 975.5,324.1 974.0,324.9 972.2,325.3 970.4,325.3 968.6,324.7 967.1,323.8 966.0,322.6 965.4,321.2 965.4,319.8 966.0,318.4 967.1,317.2 968.6,316.4 970.4,316.0 972.3,316.1 974.1,316.6 975.6,317.5 976.7,318.7" fill="#b9a30c" stroke="#ddd27a" stroke-width="0.7"/><polygon points="974.4,320.4 974.4,321.1 974.1,321.8 973.5,322.4 972.7,322.8 971.8,323.0 970.8,323.0 969.9,322.8 969.1,322.3 968.6,321.7 968.3,320.9 968.3,320.2 968.6,319.5 969.2,318.9 969.9,318.5 970.9,318.3 971.8,318.3 972.7,318.6 973.5,319.0 974.1,319.7" fill="#84761a" />
<polygon points="919.3,340.9 919.3,342.4 918.7,343.8 917.6,345.0 916.0,345.8 914.2,346.2 912.4,346.1 910.6,345.6 909.1,344.7 908.0,343.5 907.5,342.0 907.5,340.6 908.1,339.2 909.2,338.0 910.8,337.2 912.6,336.8 914.4,336.9 916.2,337.4 917.7,338.3 918.8,339.5" fill="#b9a30c" stroke="#ddd27a" stroke-width="0.7"/><polygon points="916.4,341.2 916.4,342.0 916.1,342.7 915.5,343.3 914.8,343.7 913.8,343.9 912.9,343.9 912.0,343.6 911.2,343.1 910.6,342.5 910.4,341.8 910.4,341.0 910.7,340.3 911.3,339.7 912.0,339.3 913.0,339.1 913.9,339.1 914.8,339.4 915.6,339.9 916.2,340.5" fill="#84761a" />
<polygon points="980.2,335.3 980.2,336.8 979.6,338.1 978.5,339.3 977.0,340.1 975.2,340.5 973.3,340.5 971.6,340.0 970.0,339.0 968.9,337.8 968.4,336.4 968.4,334.9 969.0,333.5 970.1,332.4 971.6,331.6 973.4,331.2 975.3,331.2 977.0,331.7 978.6,332.6 979.7,333.9" fill="#b9a30c" stroke="#ddd27a" stroke-width="0.7"/><polygon points="977.3,335.6 977.3,336.3 977.0,337.0 976.5,337.6 975.7,338.0 974.8,338.2 973.8,338.2 972.9,337.9 972.1,337.5 971.6,336.9 971.3,336.1 971.3,335.4 971.6,334.7 972.1,334.1 972.9,333.6 973.8,333.4 974.8,333.5 975.7,333.7 976.5,334.2 977.1,334.8" fill="#84761a" />
<polygon points="922.1,356.3 922.1,357.8 921.5,359.1 920.4,360.3 918.8,361.1 917.0,361.5 915.1,361.5 913.3,361.0 911.8,360.0 910.8,358.8 910.2,357.4 910.2,355.9 910.8,354.5 912.0,353.3 913.5,352.5 915.3,352.1 917.2,352.2 919.0,352.7 920.5,353.6 921.6,354.8" fill="#b9a30c" stroke="#ddd27a" stroke-width="0.7"/><polygon points="919.2,356.5 919.2,357.3 918.9,358.0 918.3,358.6 917.5,359.0 916.6,359.2 915.6,359.2 914.7,358.9 913.9,358.5 913.4,357.8 913.1,357.1 913.1,356.3 913.4,355.6 914.0,355.0 914.8,354.6 915.7,354.4 916.7,354.4 917.6,354.7 918.4,355.2 918.9,355.8" fill="#84761a" />
<polygon points="983.3,350.6 983.3,352.1 982.7,353.5 981.6,354.6 980.0,355.5 978.2,355.9 976.3,355.8 974.6,355.3 973.0,354.4 971.9,353.1 971.3,351.7 971.4,350.2 971.9,348.8 973.1,347.7 974.6,346.8 976.4,346.4 978.3,346.5 980.1,347.0 981.6,347.9 982.7,349.2" fill="#b9a30c" stroke="#ddd27a" stroke-width="0.7"/><polygon points="980.4,350.9 980.4,351.6 980.1,352.3 979.5,352.9 978.7,353.4 977.8,353.6 976.8,353.5 975.9,353.3 975.1,352.8 974.5,352.2 974.3,351.4 974.3,350.7 974.6,349.9 975.1,349.4 975.9,348.9 976.8,348.7 977.8,348.8 978.7,349.0 979.5,349.5 980.1,350.1" fill="#84761a" />
<polygon points="924.9,371.7 924.9,373.2 924.3,374.6 923.2,375.8 921.6,376.6 919.8,377.0 917.9,377.0 916.1,376.5 914.6,375.5 913.5,374.3 913.0,372.8 913.0,371.3 913.6,369.9 914.7,368.7 916.3,367.9 918.1,367.5 920.0,367.6 921.8,368.1 923.3,369.0 924.4,370.3" fill="#b9a30c" stroke="#ddd27a" stroke-width="0.7"/><polygon points="922.0,372.0 922.0,372.8 921.7,373.5 921.1,374.1 920.3,374.5 919.4,374.7 918.4,374.7 917.5,374.4 916.7,373.9 916.2,373.3 915.9,372.6 915.9,371.8 916.2,371.1 916.8,370.5 917.6,370.0 918.5,369.8 919.5,369.9 920.4,370.1 921.2,370.6 921.7,371.2" fill="#84761a" />
<polygon points="986.3,366.0 986.3,367.5 985.7,368.9 984.6,370.1 983.1,370.9 981.3,371.3 979.4,371.3 977.6,370.7 976.0,369.8 974.9,368.6 974.4,367.1 974.4,365.6 975.0,364.2 976.1,363.0 977.6,362.2 979.4,361.8 981.3,361.9 983.1,362.4 984.6,363.3 985.7,364.6" fill="#b9a30c" stroke="#ddd27a" stroke-width="0.7"/><polygon points="983.4,366.3 983.4,367.0 983.1,367.8 982.5,368.4 981.7,368.8 980.8,369.0 979.8,369.0 978.9,368.7 978.1,368.2 977.6,367.6 977.3,366.8 977.3,366.1 977.6,365.4 978.1,364.8 978.9,364.3 979.9,364.1 980.8,364.2 981.8,364.4 982.5,364.9 983.1,365.5" fill="#84761a" />
<polygon points="927.8,387.3 927.7,388.8 927.1,390.2 926.0,391.4 924.4,392.2 922.6,392.6 920.7,392.6 918.9,392.1 917.4,391.1 916.3,389.9 915.7,388.4 915.8,386.9 916.4,385.5 917.5,384.3 919.1,383.5 920.9,383.0 922.8,383.1 924.6,383.6 926.1,384.6 927.2,385.8" fill="#b9a30c" stroke="#ddd27a" stroke-width="0.7"/><polygon points="924.8,387.6 924.8,388.3 924.5,389.1 923.9,389.7 923.1,390.1 922.2,390.3 921.2,390.3 920.3,390.0 919.5,389.5 919.0,388.9 918.7,388.1 918.7,387.4 919.0,386.6 919.6,386.0 920.4,385.6 921.3,385.4 922.3,385.4 923.2,385.7 924.0,386.2 924.5,386.8" fill="#84761a" />
<polygon points="989.4,381.5 989.4,383.1 988.8,384.5 987.7,385.7 986.1,386.5 984.3,386.9 982.4,386.8 980.6,386.3 979.1,385.4 978.0,384.1 977.4,382.7 977.4,381.2 978.0,379.7 979.1,378.6 980.6,377.7 982.4,377.3 984.3,377.4 986.2,377.9 987.7,378.8 988.8,380.1" fill="#b9a30c" stroke="#ddd27a" stroke-width="0.7"/><polygon points="986.5,381.8 986.5,382.6 986.2,383.3 985.6,383.9 984.8,384.4 983.9,384.6 982.9,384.5 982.0,384.3 981.2,383.8 980.6,383.1 980.3,382.4 980.3,381.6 980.6,380.9 981.2,380.3 982.0,379.9 982.9,379.6 983.9,379.7 984.8,379.9 985.6,380.4 986.2,381.1" fill="#84761a" />
<polygon points="930.6,403.0 930.6,404.5 930.0,405.9 928.8,407.1 927.3,408.0 925.5,408.4 923.5,408.3 921.7,407.8 920.2,406.8 919.1,405.6 918.5,404.1 918.6,402.6 919.2,401.2 920.3,400.0 921.9,399.1 923.7,398.7 925.6,398.8 927.4,399.3 929.0,400.2 930.1,401.5" fill="#b9a30c" stroke="#ddd27a" stroke-width="0.7"/><polygon points="927.7,403.3 927.7,404.0 927.4,404.8 926.8,405.4 926.0,405.8 925.0,406.0 924.1,406.0 923.1,405.7 922.3,405.2 921.8,404.6 921.5,403.8 921.5,403.0 921.8,402.3 922.4,401.7 923.2,401.3 924.1,401.1 925.1,401.1 926.0,401.4 926.8,401.8 927.4,402.5" fill="#84761a" />
<polygon points="992.5,397.2 992.5,398.7 991.9,400.2 990.8,401.4 989.2,402.2 987.4,402.6 985.5,402.5 983.7,402.0 982.1,401.1 981.0,399.8 980.4,398.3 980.4,396.8 981.0,395.4 982.2,394.2 983.7,393.4 985.5,392.9 987.4,393.0 989.2,393.5 990.8,394.5 991.9,395.7" fill="#b9a30c" stroke="#ddd27a" stroke-width="0.7"/><polygon points="989.6,397.5 989.6,398.3 989.3,399.0 988.7,399.6 987.9,400.0 987.0,400.3 986.0,400.2 985.0,400.0 984.2,399.5 983.7,398.8 983.4,398.1 983.4,397.3 983.7,396.6 984.3,395.9 985.0,395.5 986.0,395.3 987.0,395.3 987.9,395.6 988.7,396.1 989.3,396.7" fill="#84761a" />
<polygon points="933.5,418.8 933.5,420.3 932.9,421.8 931.7,423.0 930.1,423.8 928.3,424.2 926.4,424.2 924.6,423.6 923.0,422.7 921.9,421.4 921.4,419.9 921.4,418.4 922.0,417.0 923.2,415.8 924.7,414.9 926.6,414.5 928.5,414.6 930.3,415.1 931.8,416.0 932.9,417.3" fill="#b9a30c" stroke="#ddd27a" stroke-width="0.7"/><polygon points="930.5,419.1 930.5,419.9 930.2,420.6 929.6,421.2 928.8,421.7 927.9,421.9 926.9,421.8 926.0,421.6 925.2,421.1 924.6,420.4 924.3,419.7 924.3,418.9 924.7,418.1 925.2,417.5 926.0,417.1 927.0,416.9 928.0,416.9 928.9,417.2 929.7,417.7 930.3,418.3" fill="#84761a" />
<polygon points="995.6,413.0 995.6,414.5 995.0,416.0 993.9,417.2 992.4,418.0 990.5,418.4 988.6,418.4 986.8,417.8 985.2,416.9 984.1,415.6 983.5,414.1 983.5,412.6 984.1,411.2 985.2,410.0 986.8,409.1 988.6,408.7 990.5,408.8 992.4,409.3 993.9,410.3 995.0,411.5" fill="#b9a30c" stroke="#ddd27a" stroke-width="0.7"/><polygon points="992.7,413.3 992.7,414.1 992.4,414.8 991.8,415.4 991.0,415.9 990.1,416.1 989.1,416.0 988.1,415.8 987.3,415.3 986.8,414.6 986.5,413.9 986.5,413.1 986.8,412.3 987.3,411.7 988.1,411.3 989.1,411.1 990.1,411.1 991.0,411.4 991.8,411.9 992.4,412.5" fill="#84761a" />
<polygon points="151.1,212.9 150.7,214.4 149.8,215.9 148.3,217.1 146.5,218.0 144.4,218.5 142.4,218.4 140.6,217.9 139.2,216.9 138.3,215.6 138.0,214.1 138.3,212.5 139.3,211.0 140.8,209.8 142.6,208.9 144.6,208.5 146.7,208.5 148.5,209.1 149.9,210.0 150.8,211.4" fill="#b9a30c" stroke="#ddd27a" stroke-width="0.7"/><polygon points="147.8,213.2 147.6,213.9 147.2,214.7 146.4,215.3 145.5,215.7 144.5,216.0 143.5,215.9 142.6,215.7 141.8,215.2 141.4,214.5 141.2,213.8 141.4,213.0 141.9,212.2 142.6,211.6 143.6,211.2 144.6,211.0 145.6,211.0 146.5,211.3 147.2,211.8 147.7,212.4" fill="#84761a" />
<polygon points="150.8,227.0 150.5,228.6 149.5,230.0 148.0,231.3 146.2,232.2 144.1,232.6 142.1,232.6 140.3,232.0 138.9,231.0 137.9,229.7 137.7,228.2 138.0,226.6 139.0,225.1 140.5,223.9 142.3,223.0 144.3,222.6 146.4,222.6 148.2,223.2 149.6,224.1 150.5,225.5" fill="#b9a30c" stroke="#ddd27a" stroke-width="0.7"/><polygon points="147.5,227.3 147.4,228.1 146.9,228.8 146.1,229.4 145.2,229.9 144.2,230.1 143.2,230.1 142.3,229.8 141.6,229.3 141.1,228.6 141.0,227.9 141.1,227.1 141.6,226.4 142.4,225.7 143.3,225.3 144.3,225.1 145.3,225.1 146.2,225.4 146.9,225.9 147.4,226.5" fill="#84761a" />
<polygon points="150.6,241.2 150.2,242.8 149.3,244.3 147.8,245.6 145.9,246.4 143.9,246.9 141.8,246.8 140.0,246.3 138.5,245.3 137.6,244.0 137.3,242.4 137.7,240.8 138.7,239.3 140.2,238.1 142.0,237.2 144.1,236.8 146.1,236.8 147.9,237.4 149.4,238.3 150.3,239.7" fill="#b9a30c" stroke="#ddd27a" stroke-width="0.7"/><polygon points="147.3,241.5 147.1,242.3 146.6,243.1 145.9,243.7 144.9,244.1 143.9,244.3 142.9,244.3 142.0,244.0 141.3,243.5 140.8,242.9 140.7,242.1 140.8,241.3 141.3,240.6 142.1,239.9 143.0,239.5 144.0,239.3 145.0,239.3 145.9,239.6 146.7,240.1 147.1,240.7" fill="#84761a" />
<polygon points="150.3,255.5 150.0,257.1 149.0,258.7 147.5,259.9 145.6,260.8 143.6,261.3 141.5,261.2 139.7,260.6 138.2,259.6 137.3,258.3 137.0,256.8 137.4,255.2 138.4,253.6 139.9,252.4 141.7,251.5 143.8,251.1 145.8,251.1 147.7,251.7 149.1,252.7 150.0,254.0" fill="#b9a30c" stroke="#ddd27a" stroke-width="0.7"/><polygon points="147.0,255.8 146.8,256.6 146.3,257.4 145.6,258.0 144.6,258.5 143.6,258.7 142.6,258.7 141.7,258.4 141.0,257.9 140.5,257.2 140.4,256.5 140.5,255.6 141.0,254.9 141.8,254.3 142.7,253.8 143.7,253.6 144.7,253.6 145.7,253.9 146.4,254.4 146.8,255.1" fill="#84761a" />
<polygon points="150.0,270.0 149.7,271.6 148.7,273.1 147.2,274.4 145.3,275.3 143.3,275.7 141.2,275.7 139.4,275.1 137.9,274.1 137.0,272.8 136.7,271.2 137.1,269.6 138.1,268.1 139.6,266.8 141.4,265.9 143.5,265.5 145.5,265.5 147.4,266.1 148.8,267.1 149.7,268.4" fill="#b9a30c" stroke="#ddd27a" stroke-width="0.7"/><polygon points="146.7,270.3 146.5,271.1 146.0,271.9 145.3,272.5 144.4,272.9 143.3,273.2 142.3,273.1 141.4,272.9 140.7,272.4 140.2,271.7 140.0,270.9 140.2,270.1 140.7,269.3 141.5,268.7 142.4,268.2 143.4,268.0 144.5,268.1 145.4,268.3 146.1,268.8 146.6,269.5" fill="#84761a" />
<polygon points="149.8,284.5 149.4,286.2 148.4,287.7 146.9,289.0 145.1,289.9 143.0,290.3 140.9,290.3 139.1,289.7 137.6,288.7 136.7,287.3 136.4,285.8 136.8,284.1 137.7,282.6 139.2,281.3 141.1,280.4 143.2,280.0 145.2,280.0 147.1,280.6 148.6,281.6 149.5,283.0" fill="#b9a30c" stroke="#ddd27a" stroke-width="0.7"/><polygon points="146.4,284.8 146.3,285.7 145.8,286.4 145.0,287.1 144.1,287.5 143.0,287.7 142.0,287.7 141.1,287.4 140.3,286.9 139.9,286.2 139.7,285.5 139.9,284.6 140.4,283.9 141.2,283.2 142.1,282.8 143.1,282.6 144.2,282.6 145.1,282.9 145.8,283.4 146.3,284.1" fill="#84761a" />
<polygon points="149.5,299.2 149.1,300.8 148.2,302.4 146.7,303.7 144.8,304.6 142.7,305.0 140.6,305.0 138.8,304.4 137.3,303.4 136.4,302.0 136.1,300.4 136.4,298.8 137.4,297.3 138.9,296.0 140.8,295.1 142.9,294.6 145.0,294.7 146.8,295.2 148.3,296.3 149.2,297.6" fill="#b9a30c" stroke="#ddd27a" stroke-width="0.7"/><polygon points="146.1,299.5 146.0,300.3 145.5,301.1 144.7,301.8 143.8,302.2 142.7,302.4 141.7,302.4 140.8,302.1 140.0,301.6 139.6,300.9 139.4,300.1 139.6,299.3 140.1,298.5 140.9,297.9 141.8,297.4 142.8,297.2 143.9,297.2 144.8,297.5 145.5,298.0 146.0,298.7" fill="#84761a" />
<polygon points="149.2,314.0 148.9,315.6 147.9,317.2 146.4,318.5 144.5,319.4 142.4,319.9 140.3,319.8 138.4,319.2 137.0,318.2 136.0,316.8 135.8,315.2 136.1,313.6 137.1,312.0 138.6,310.7 140.5,309.8 142.6,309.4 144.7,309.4 146.5,310.0 148.0,311.0 148.9,312.4" fill="#b9a30c" stroke="#ddd27a" stroke-width="0.7"/><polygon points="145.9,314.3 145.7,315.1 145.2,315.9 144.4,316.6 143.5,317.0 142.4,317.2 141.4,317.2 140.5,316.9 139.7,316.4 139.3,315.7 139.1,314.9 139.3,314.1 139.8,313.3 140.6,312.7 141.5,312.2 142.5,312.0 143.6,312.0 144.5,312.3 145.2,312.8 145.7,313.5" fill="#84761a" />
<polygon points="135.5,324.8 149.1,323.6 148.9,334.2 135.3,335.4" fill="#b9a30c" stroke="#ddd27a" stroke-width="0.7"/><polygon points="145.6,329.2 145.4,330.0 144.9,330.8 144.1,331.5 143.2,331.9 142.1,332.2 141.1,332.1 140.2,331.8 139.4,331.3 139.0,330.6 138.8,329.8 139.0,329.0 139.5,328.2 140.2,327.5 141.2,327.1 142.2,326.9 143.3,326.9 144.2,327.2 145.0,327.7 145.4,328.4" fill="#84761a" />
<polygon points="146.8,445.0 146.5,446.8 145.4,448.5 143.9,449.9 141.9,450.8 139.7,451.3 137.6,451.3 135.7,450.6 134.1,449.5 133.2,448.0 132.9,446.3 133.3,444.6 134.3,442.9 135.9,441.5 137.8,440.5 140.0,440.1 142.1,440.1 144.0,440.8 145.6,441.9 146.5,443.3" fill="#b9a30c" stroke="#ddd27a" stroke-width="0.7"/><polygon points="143.3,445.4 143.2,446.3 142.6,447.1 141.9,447.8 140.9,448.3 139.8,448.5 138.7,448.5 137.8,448.2 137.0,447.6 136.5,446.9 136.4,446.0 136.6,445.1 137.1,444.3 137.9,443.6 138.8,443.1 139.9,442.9 141.0,442.9 141.9,443.2 142.7,443.8 143.2,444.5" fill="#84761a" />
<polygon points="146.5,461.2 146.2,463.0 145.1,464.6 143.6,466.0 141.6,467.0 139.4,467.5 137.3,467.4 135.3,466.8 133.8,465.7 132.8,464.2 132.5,462.5 132.9,460.7 133.9,459.0 135.5,457.6 137.5,456.6 139.6,456.2 141.8,456.2 143.7,456.9 145.3,458.0 146.2,459.5" fill="#b9a30c" stroke="#ddd27a" stroke-width="0.7"/><polygon points="143.0,461.5 142.8,462.4 142.3,463.2 141.5,463.9 140.6,464.4 139.5,464.7 138.4,464.6 137.4,464.3 136.7,463.8 136.2,463.0 136.0,462.1 136.2,461.3 136.7,460.4 137.5,459.7 138.5,459.2 139.6,459.0 140.7,459.0 141.6,459.3 142.4,459.9 142.9,460.6" fill="#84761a" />
<polygon points="146.2,477.4 145.9,479.2 144.8,480.9 143.2,482.3 141.3,483.3 139.1,483.8 136.9,483.7 135.0,483.1 133.4,482.0 132.5,480.5 132.2,478.7 132.6,476.9 133.6,475.3 135.2,473.8 137.1,472.9 139.3,472.4 141.5,472.5 143.4,473.1 144.9,474.2 145.9,475.7" fill="#b9a30c" stroke="#ddd27a" stroke-width="0.7"/><polygon points="142.7,477.8 142.5,478.7 142.0,479.5 141.2,480.2 140.2,480.7 139.1,480.9 138.1,480.9 137.1,480.6 136.3,480.0 135.8,479.3 135.7,478.4 135.9,477.5 136.4,476.7 137.2,476.0 138.2,475.5 139.3,475.2 140.3,475.3 141.3,475.6 142.1,476.1 142.6,476.9" fill="#84761a" />
<polygon points="131.9,489.4 146.0,488.1 145.8,499.6 131.7,500.9" fill="#b9a30c" stroke="#ddd27a" stroke-width="0.7"/><polygon points="142.4,494.2 142.2,495.1 141.7,495.9 140.9,496.6 139.9,497.1 138.8,497.4 137.7,497.3 136.7,497.0 136.0,496.4 135.5,495.7 135.3,494.8 135.5,493.9 136.1,493.1 136.8,492.3 137.8,491.8 138.9,491.6 140.0,491.6 141.0,492.0 141.8,492.5 142.2,493.3" fill="#84761a" />
<polygon points="1085.5,214.4 1098.8,213.2 1101.2,223.4 1087.9,224.6" fill="#b9a30c" stroke="#ddd27a" stroke-width="0.7"/><polygon points="1096.7,218.6 1096.7,219.4 1096.4,220.2 1095.8,220.8 1094.9,221.2 1093.9,221.5 1092.9,221.4 1091.9,221.2 1091.0,220.7 1090.4,220.0 1090.0,219.2 1090.0,218.4 1090.3,217.7 1090.9,217.0 1091.8,216.6 1092.7,216.4 1093.8,216.4 1094.8,216.7 1095.7,217.2 1096.3,217.8" fill="#84761a" />
<polygon points="1103.4,232.9 1103.5,234.5 1102.9,236.0 1101.7,237.3 1100.0,238.2 1098.0,238.6 1095.8,238.6 1093.8,238.0 1092.1,237.0 1090.8,235.7 1090.1,234.1 1090.0,232.5 1090.7,231.0 1091.9,229.7 1093.6,228.8 1095.6,228.4 1097.7,228.4 1099.7,229.0 1101.5,230.0 1102.7,231.3" fill="#b9a30c" stroke="#ddd27a" stroke-width="0.7"/><polygon points="1100.1,233.2 1100.1,234.0 1099.8,234.8 1099.2,235.4 1098.4,235.8 1097.4,236.1 1096.3,236.0 1095.3,235.8 1094.4,235.3 1093.8,234.6 1093.4,233.8 1093.4,233.0 1093.7,232.2 1094.3,231.6 1095.2,231.2 1096.2,230.9 1097.2,231.0 1098.2,231.2 1099.1,231.7 1099.8,232.4" fill="#84761a" />
<polygon points="1106.9,247.6 1107.0,249.2 1106.4,250.7 1105.1,252.0 1103.4,252.9 1101.4,253.4 1099.3,253.3 1097.2,252.8 1095.5,251.8 1094.2,250.4 1093.5,248.8 1093.5,247.2 1094.1,245.7 1095.3,244.4 1097.0,243.5 1099.0,243.0 1101.1,243.1 1103.2,243.7 1104.9,244.7 1106.2,246.0" fill="#b9a30c" stroke="#ddd27a" stroke-width="0.7"/><polygon points="1103.6,247.9 1103.6,248.7 1103.3,249.5 1102.7,250.1 1101.8,250.6 1100.8,250.8 1099.8,250.8 1098.7,250.5 1097.9,250.0 1097.2,249.3 1096.9,248.5 1096.8,247.7 1097.1,246.9 1097.8,246.3 1098.6,245.8 1099.6,245.6 1100.7,245.7 1101.7,245.9 1102.6,246.4 1103.2,247.1" fill="#84761a" />
<polygon points="1110.4,262.4 1110.5,264.0 1109.9,265.6 1108.6,266.9 1106.9,267.8 1104.9,268.2 1102.8,268.2 1100.7,267.6 1099.0,266.6 1097.7,265.2 1097.0,263.7 1096.9,262.0 1097.5,260.5 1098.7,259.2 1100.5,258.3 1102.5,257.8 1104.6,257.9 1106.7,258.5 1108.4,259.5 1109.7,260.8" fill="#b9a30c" stroke="#ddd27a" stroke-width="0.7"/><polygon points="1107.1,262.7 1107.1,263.5 1106.8,264.3 1106.2,265.0 1105.3,265.4 1104.3,265.6 1103.2,265.6 1102.2,265.3 1101.3,264.8 1100.7,264.1 1100.3,263.3 1100.3,262.5 1100.6,261.7 1101.2,261.1 1102.1,260.6 1103.1,260.4 1104.1,260.5 1105.2,260.7 1106.1,261.2 1106.7,261.9" fill="#84761a" />
<polygon points="1097.9,351.6 1111.6,350.3 1114.2,361.3 1100.4,362.5" fill="#b9a30c" stroke="#ddd27a" stroke-width="0.7"/><polygon points="1109.5,356.1 1109.5,357.0 1109.2,357.8 1108.6,358.5 1107.7,358.9 1106.6,359.2 1105.5,359.1 1104.5,358.8 1103.6,358.3 1102.9,357.6 1102.6,356.7 1102.5,355.9 1102.9,355.1 1103.5,354.4 1104.4,353.9 1105.4,353.7 1106.5,353.7 1107.5,354.0 1108.4,354.6 1109.1,355.3" fill="#84761a" />
<polygon points="1132.8,353.9 1132.9,355.7 1132.3,357.3 1131.0,358.6 1129.3,359.6 1127.2,360.1 1125.0,360.0 1122.9,359.4 1121.1,358.3 1119.8,356.9 1119.0,355.2 1119.0,353.5 1119.6,351.9 1120.9,350.5 1122.6,349.6 1124.7,349.1 1126.8,349.2 1128.9,349.8 1130.8,350.8 1132.1,352.3" fill="#b9a30c" stroke="#ddd27a" stroke-width="0.7"/><polygon points="1129.4,354.3 1129.4,355.1 1129.1,355.9 1128.5,356.6 1127.6,357.1 1126.6,357.3 1125.5,357.3 1124.4,357.0 1123.5,356.4 1122.9,355.7 1122.5,354.9 1122.5,354.0 1122.8,353.2 1123.4,352.6 1124.3,352.1 1125.3,351.8 1126.4,351.9 1127.4,352.2 1128.3,352.7 1129.0,353.4" fill="#84761a" />
<polygon points="1116.4,371.0 1116.5,372.8 1115.9,374.4 1114.6,375.8 1112.9,376.7 1110.8,377.2 1108.6,377.1 1106.5,376.5 1104.7,375.4 1103.3,374.0 1102.6,372.3 1102.5,370.6 1103.2,369.0 1104.4,367.6 1106.2,366.6 1108.3,366.2 1110.5,366.2 1112.6,366.8 1114.4,367.9 1115.7,369.4" fill="#b9a30c" stroke="#ddd27a" stroke-width="0.7"/><polygon points="1113.0,371.4 1113.0,372.2 1112.7,373.0 1112.1,373.7 1111.2,374.2 1110.1,374.4 1109.0,374.4 1108.0,374.1 1107.1,373.6 1106.4,372.8 1106.1,372.0 1106.0,371.1 1106.3,370.3 1107.0,369.6 1107.8,369.2 1108.9,368.9 1110.0,369.0 1111.0,369.3 1111.9,369.8 1112.6,370.5" fill="#84761a" />
<polygon points="1136.4,369.2 1136.5,370.9 1135.9,372.5 1134.6,373.9 1132.9,374.9 1130.8,375.3 1128.6,375.3 1126.5,374.7 1124.7,373.6 1123.3,372.1 1122.6,370.5 1122.5,368.7 1123.2,367.1 1124.4,365.7 1126.2,364.8 1128.2,364.3 1130.4,364.4 1132.5,365.0 1134.4,366.1 1135.7,367.5" fill="#b9a30c" stroke="#ddd27a" stroke-width="0.7"/><polygon points="1133.0,369.5 1133.0,370.4 1132.7,371.2 1132.1,371.9 1131.2,372.3 1130.2,372.6 1129.1,372.5 1128.0,372.2 1127.1,371.7 1126.4,371.0 1126.1,370.1 1126.0,369.3 1126.3,368.5 1127.0,367.8 1127.8,367.3 1128.9,367.1 1130.0,367.1 1131.0,367.4 1131.9,367.9 1132.6,368.7" fill="#84761a" />
<polygon points="1120.0,386.4 1120.0,388.2 1119.4,389.8 1118.2,391.2 1116.4,392.1 1114.3,392.6 1112.1,392.5 1110.0,391.9 1108.2,390.9 1106.8,389.4 1106.1,387.7 1106.0,386.0 1106.7,384.3 1107.9,382.9 1109.7,382.0 1111.8,381.5 1114.0,381.6 1116.1,382.2 1117.9,383.3 1119.3,384.7" fill="#b9a30c" stroke="#ddd27a" stroke-width="0.7"/><polygon points="1116.5,386.7 1116.5,387.6 1116.2,388.4 1115.6,389.1 1114.7,389.6 1113.7,389.8 1112.6,389.8 1111.5,389.5 1110.6,389.0 1109.9,388.2 1109.6,387.4 1109.5,386.5 1109.9,385.7 1110.5,385.0 1111.4,384.5 1112.4,384.3 1113.5,384.3 1114.6,384.6 1115.5,385.2 1116.1,385.9" fill="#84761a" />
<polygon points="1140.1,384.5 1140.1,386.3 1139.5,387.9 1138.3,389.3 1136.5,390.3 1134.4,390.7 1132.2,390.7 1130.1,390.1 1128.3,389.0 1126.9,387.5 1126.2,385.8 1126.1,384.1 1126.7,382.4 1128.0,381.1 1129.7,380.1 1131.8,379.6 1134.0,379.7 1136.1,380.3 1138.0,381.4 1139.3,382.9" fill="#b9a30c" stroke="#ddd27a" stroke-width="0.7"/><polygon points="1136.6,384.9 1136.6,385.7 1136.3,386.6 1135.7,387.2 1134.8,387.7 1133.8,388.0 1132.7,387.9 1131.6,387.6 1130.7,387.1 1130.0,386.4 1129.6,385.5 1129.6,384.6 1129.9,383.8 1130.6,383.1 1131.4,382.6 1132.5,382.4 1133.6,382.4 1134.6,382.8 1135.5,383.3 1136.2,384.0" fill="#84761a" />
<polygon points="187.1,441.4 186.7,443.3 185.6,445.2 183.9,446.7 181.7,447.8 179.3,448.3 176.9,448.3 174.7,447.6 173.0,446.3 172.0,444.7 171.6,442.8 172.0,440.8 173.1,439.0 174.9,437.5 177.0,436.4 179.4,435.8 181.8,435.9 183.9,436.6 185.6,437.8 186.7,439.5" fill="#b9a30c" stroke="#ddd27a" stroke-width="0.7"/><polygon points="182.8,441.8 182.7,442.6 182.1,443.5 181.4,444.2 180.4,444.7 179.3,444.9 178.2,444.9 177.3,444.5 176.5,444.0 176.0,443.3 175.9,442.4 176.0,441.5 176.5,440.7 177.3,440.0 178.3,439.5 179.4,439.3 180.4,439.3 181.4,439.6 182.2,440.2 182.7,440.9" fill="#84761a" />
<polygon points="187.6,378.9 187.2,380.8 186.1,382.6 184.4,384.1 182.3,385.2 179.9,385.7 177.6,385.6 175.4,385.0 173.8,383.8 172.7,382.2 172.4,380.4 172.8,378.5 173.9,376.7 175.6,375.2 177.7,374.1 180.0,373.6 182.4,373.7 184.5,374.3 186.2,375.5 187.2,377.1" fill="#b9a30c" stroke="#ddd27a" stroke-width="0.7"/><polygon points="183.4,379.3 183.2,380.2 182.7,381.0 182.0,381.7 181.0,382.1 180.0,382.4 178.9,382.3 177.9,382.0 177.2,381.5 176.7,380.8 176.6,380.0 176.7,379.1 177.2,378.3 178.0,377.6 178.9,377.2 180.0,376.9 181.1,377.0 182.0,377.3 182.8,377.8 183.2,378.5" fill="#84761a" />
<polygon points="216.8,438.6 216.4,440.6 215.3,442.4 213.6,443.9 211.5,445.0 209.1,445.6 206.7,445.5 204.5,444.8 202.8,443.6 201.7,441.9 201.3,440.0 201.7,438.1 202.8,436.2 204.5,434.7 206.7,433.6 209.1,433.1 211.5,433.2 213.6,433.9 215.3,435.1 216.4,436.7" fill="#b9a30c" stroke="#ddd27a" stroke-width="0.7"/><polygon points="212.6,439.0 212.4,439.9 211.9,440.7 211.1,441.4 210.1,441.9 209.1,442.1 208.0,442.1 207.0,441.8 206.2,441.2 205.8,440.5 205.6,439.6 205.8,438.8 206.3,437.9 207.0,437.2 208.0,436.8 209.1,436.5 210.2,436.6 211.1,436.9 211.9,437.4 212.4,438.1" fill="#84761a" />
<polygon points="216.9,376.2 216.5,378.1 215.4,379.9 213.7,381.4 211.6,382.5 209.2,383.0 206.9,382.9 204.7,382.2 203.1,381.1 202.0,379.5 201.6,377.6 202.0,375.7 203.1,374.0 204.8,372.5 206.9,371.4 209.3,370.9 211.6,371.0 213.7,371.6 215.4,372.8 216.5,374.4" fill="#b9a30c" stroke="#ddd27a" stroke-width="0.7"/><polygon points="212.7,376.6 212.5,377.5 212.0,378.3 211.2,379.0 210.3,379.4 209.2,379.7 208.2,379.6 207.2,379.3 206.5,378.8 206.0,378.1 205.8,377.3 206.0,376.4 206.5,375.6 207.2,374.9 208.2,374.5 209.2,374.2 210.3,374.3 211.3,374.6 212.0,375.1 212.5,375.8" fill="#84761a" />
<polygon points="246.5,435.8 246.2,437.8 245.1,439.6 243.4,441.2 241.2,442.3 238.8,442.8 236.4,442.7 234.3,442.0 232.5,440.8 231.4,439.2 231.0,437.3 231.4,435.3 232.5,433.5 234.2,431.9 236.4,430.9 238.8,430.3 241.1,430.4 243.3,431.1 245.0,432.3 246.1,433.9" fill="#b9a30c" stroke="#ddd27a" stroke-width="0.7"/><polygon points="242.3,436.2 242.1,437.1 241.6,437.9 240.8,438.6 239.9,439.1 238.8,439.4 237.7,439.3 236.7,439.0 236.0,438.5 235.5,437.7 235.3,436.9 235.5,436.0 236.0,435.2 236.7,434.5 237.7,434.0 238.8,433.8 239.8,433.8 240.8,434.1 241.6,434.6 242.1,435.4" fill="#84761a" />
<polygon points="246.1,373.5 245.7,375.4 244.7,377.2 243.0,378.7 240.9,379.8 238.5,380.3 236.2,380.2 234.0,379.5 232.3,378.4 231.2,376.8 230.9,374.9 231.2,373.0 232.3,371.3 234.0,369.8 236.1,368.7 238.5,368.2 240.8,368.3 242.9,368.9 244.6,370.1 245.7,371.7" fill="#b9a30c" stroke="#ddd27a" stroke-width="0.7"/><polygon points="241.9,373.9 241.7,374.8 241.3,375.6 240.5,376.2 239.6,376.7 238.5,376.9 237.4,376.9 236.5,376.6 235.7,376.1 235.2,375.4 235.1,374.5 235.2,373.7 235.7,372.9 236.5,372.2 237.4,371.7 238.5,371.5 239.5,371.5 240.5,371.8 241.2,372.4 241.7,373.1" fill="#84761a" />
<polygon points="276.2,433.1 275.9,435.0 274.8,436.9 273.1,438.4 271.0,439.5 268.6,440.0 266.2,439.9 264.0,439.3 262.3,438.0 261.2,436.4 260.8,434.5 261.1,432.6 262.2,430.7 263.9,429.2 266.0,428.1 268.4,427.6 270.8,427.7 273.0,428.3 274.7,429.6 275.8,431.2" fill="#b9a30c" stroke="#ddd27a" stroke-width="0.7"/><polygon points="272.0,433.5 271.8,434.4 271.3,435.2 270.6,435.9 269.6,436.4 268.5,436.6 267.4,436.6 266.5,436.3 265.7,435.7 265.2,435.0 265.0,434.1 265.2,433.2 265.7,432.4 266.4,431.7 267.4,431.2 268.5,431.0 269.5,431.0 270.5,431.3 271.3,431.9 271.8,432.6" fill="#84761a" />
<polygon points="275.3,370.8 275.0,372.7 273.9,374.5 272.3,376.0 270.1,377.0 267.8,377.6 265.4,377.5 263.3,376.8 261.6,375.6 260.5,374.1 260.1,372.2 260.5,370.3 261.5,368.5 263.2,367.1 265.3,366.0 267.6,365.5 270.0,365.6 272.1,366.2 273.8,367.4 274.9,369.0" fill="#b9a30c" stroke="#ddd27a" stroke-width="0.7"/><polygon points="271.1,371.2 271.0,372.1 270.5,372.9 269.8,373.5 268.8,374.0 267.8,374.2 266.7,374.2 265.7,373.9 265.0,373.4 264.5,372.7 264.3,371.8 264.4,371.0 264.9,370.2 265.7,369.5 266.6,369.0 267.7,368.8 268.7,368.8 269.7,369.1 270.5,369.7 271.0,370.4" fill="#84761a" />
<polygon points="305.9,430.3 305.6,432.3 304.5,434.1 302.8,435.7 300.7,436.7 298.3,437.3 295.9,437.2 293.7,436.5 292.0,435.3 290.9,433.6 290.5,431.8 290.8,429.8 291.9,428.0 293.5,426.4 295.7,425.3 298.1,424.8 300.5,424.9 302.6,425.6 304.4,426.8 305.5,428.4" fill="#b9a30c" stroke="#ddd27a" stroke-width="0.7"/><polygon points="301.7,430.7 301.5,431.6 301.0,432.4 300.3,433.1 299.3,433.6 298.2,433.8 297.2,433.8 296.2,433.5 295.4,432.9 294.9,432.2 294.7,431.4 294.9,430.5 295.3,429.7 296.1,429.0 297.1,428.5 298.1,428.2 299.2,428.3 300.2,428.6 301.0,429.1 301.5,429.9" fill="#84761a" />
<polygon points="304.6,368.1 304.2,370.0 303.2,371.8 301.5,373.3 299.4,374.3 297.1,374.9 294.7,374.8 292.6,374.1 290.9,372.9 289.7,371.3 289.3,369.5 289.7,367.6 290.7,365.8 292.4,364.4 294.5,363.3 296.8,362.8 299.2,362.9 301.3,363.5 303.0,364.7 304.1,366.3" fill="#b9a30c" stroke="#ddd27a" stroke-width="0.7"/><polygon points="300.4,368.5 300.2,369.4 299.7,370.2 299.0,370.8 298.1,371.3 297.0,371.5 295.9,371.5 295.0,371.2 294.2,370.7 293.7,370.0 293.5,369.1 293.7,368.3 294.1,367.5 294.9,366.8 295.8,366.3 296.9,366.1 297.9,366.1 298.9,366.4 299.7,367.0 300.2,367.7" fill="#84761a" />
<polygon points="335.6,427.6 335.3,429.5 334.2,431.4 332.6,432.9 330.4,434.0 328.0,434.5 325.6,434.4 323.5,433.7 321.7,432.5 320.6,430.9 320.1,429.0 320.5,427.0 321.5,425.2 323.2,423.7 325.3,422.6 327.7,422.1 330.1,422.1 332.3,422.8 334.0,424.0 335.2,425.7" fill="#b9a30c" stroke="#ddd27a" stroke-width="0.7"/><polygon points="331.4,428.0 331.2,428.8 330.7,429.7 330.0,430.3 329.0,430.8 327.9,431.1 326.9,431.0 325.9,430.7 325.1,430.2 324.6,429.4 324.4,428.6 324.5,427.7 325.0,426.9 325.8,426.2 326.7,425.7 327.8,425.5 328.9,425.5 329.9,425.8 330.6,426.4 331.2,427.1" fill="#84761a" />
<polygon points="333.8,365.4 333.5,367.3 332.4,369.1 330.8,370.6 328.7,371.6 326.3,372.1 324.0,372.1 321.8,371.4 320.1,370.2 319.0,368.6 318.6,366.8 318.9,364.9 319.9,363.1 321.6,361.7 323.7,360.6 326.0,360.1 328.4,360.2 330.5,360.8 332.2,362.0 333.3,363.6" fill="#b9a30c" stroke="#ddd27a" stroke-width="0.7"/><polygon points="329.6,365.8 329.4,366.6 329.0,367.4 328.2,368.1 327.3,368.6 326.2,368.8 325.2,368.8 324.2,368.5 323.4,368.0 322.9,367.2 322.7,366.4 322.9,365.6 323.3,364.8 324.1,364.1 325.0,363.6 326.1,363.4 327.1,363.4 328.1,363.7 328.9,364.3 329.4,365.0" fill="#84761a" />
<polygon points="365.3,424.8 365.0,426.8 363.9,428.6 362.3,430.1 360.1,431.2 357.8,431.7 355.4,431.7 353.2,431.0 351.4,429.8 350.3,428.1 349.8,426.2 350.1,424.3 351.2,422.4 352.8,420.9 355.0,419.8 357.3,419.3 359.7,419.4 361.9,420.1 363.7,421.3 364.8,422.9" fill="#b9a30c" stroke="#ddd27a" stroke-width="0.7"/><polygon points="361.0,425.2 360.9,426.1 360.4,426.9 359.7,427.6 358.7,428.1 357.6,428.3 356.6,428.3 355.6,428.0 354.8,427.4 354.3,426.7 354.1,425.8 354.2,425.0 354.7,424.1 355.4,423.4 356.4,423.0 357.5,422.7 358.5,422.8 359.5,423.1 360.3,423.6 360.8,424.3" fill="#84761a" />
<polygon points="363.0,362.7 362.7,364.6 361.7,366.4 360.0,367.9 357.9,368.9 355.6,369.4 353.2,369.4 351.1,368.7 349.3,367.5 348.2,365.9 347.8,364.1 348.1,362.2 349.1,360.4 350.7,359.0 352.8,357.9 355.2,357.4 357.5,357.5 359.7,358.1 361.4,359.3 362.5,360.9" fill="#b9a30c" stroke="#ddd27a" stroke-width="0.7"/><polygon points="358.8,363.1 358.7,363.9 358.2,364.7 357.5,365.4 356.5,365.9 355.5,366.1 354.4,366.1 353.4,365.8 352.7,365.3 352.1,364.5 351.9,363.7 352.1,362.9 352.5,362.1 353.3,361.4 354.2,360.9 355.3,360.7 356.3,360.7 357.3,361.0 358.1,361.6 358.6,362.3" fill="#84761a" />
<polygon points="394.9,422.0 394.6,424.0 393.6,425.8 392.0,427.4 389.9,428.4 387.5,429.0 385.1,428.9 382.9,428.2 381.1,427.0 379.9,425.4 379.5,423.5 379.8,421.5 380.8,419.7 382.5,418.2 384.6,417.1 386.9,416.6 389.3,416.6 391.5,417.3 393.3,418.5 394.5,420.2" fill="#b9a30c" stroke="#ddd27a" stroke-width="0.7"/><polygon points="390.7,422.4 390.6,423.3 390.1,424.1 389.4,424.8 388.4,425.3 387.3,425.6 386.3,425.5 385.3,425.2 384.5,424.7 383.9,423.9 383.7,423.1 383.9,422.2 384.3,421.4 385.1,420.7 386.0,420.2 387.1,420.0 388.2,420.0 389.2,420.3 390.0,420.9 390.5,421.6" fill="#84761a" />
<polygon points="392.2,360.0 391.9,361.9 390.9,363.7 389.2,365.2 387.2,366.2 384.8,366.7 382.5,366.6 380.3,366.0 378.6,364.8 377.4,363.2 377.0,361.4 377.3,359.5 378.3,357.7 379.9,356.3 382.0,355.2 384.3,354.7 386.7,354.8 388.8,355.4 390.6,356.6 391.7,358.2" fill="#b9a30c" stroke="#ddd27a" stroke-width="0.7"/><polygon points="388.0,360.4 387.9,361.2 387.4,362.0 386.7,362.7 385.7,363.2 384.7,363.4 383.6,363.4 382.6,363.1 381.9,362.5 381.3,361.8 381.1,361.0 381.3,360.2 381.7,359.4 382.5,358.7 383.4,358.2 384.5,358.0 385.5,358.0 386.5,358.3 387.3,358.9 387.8,359.6" fill="#84761a" />
<polygon points="424.6,419.3 424.3,421.2 423.3,423.1 421.7,424.6 419.6,425.7 417.2,426.2 414.8,426.1 412.6,425.4 410.8,424.2 409.6,422.6 409.1,420.7 409.4,418.8 410.4,416.9 412.1,415.4 414.2,414.3 416.6,413.8 419.0,413.9 421.2,414.6 422.9,415.8 424.1,417.4" fill="#b9a30c" stroke="#ddd27a" stroke-width="0.7"/><polygon points="420.3,419.7 420.2,420.6 419.8,421.4 419.0,422.1 418.1,422.6 417.0,422.8 415.9,422.8 414.9,422.4 414.1,421.9 413.6,421.2 413.4,420.3 413.5,419.4 414.0,418.6 414.7,417.9 415.7,417.4 416.7,417.2 417.8,417.2 418.8,417.6 419.6,418.1 420.1,418.8" fill="#84761a" />
<polygon points="421.4,357.3 421.1,359.2 420.1,361.0 418.5,362.4 416.4,363.5 414.1,364.0 411.7,363.9 409.5,363.3 407.8,362.1 406.6,360.5 406.2,358.7 406.4,356.8 407.4,355.0 409.0,353.6 411.1,352.5 413.5,352.0 415.8,352.1 418.0,352.7 419.7,353.9 420.9,355.5" fill="#b9a30c" stroke="#ddd27a" stroke-width="0.7"/><polygon points="417.2,357.7 417.0,358.5 416.6,359.3 415.9,360.0 414.9,360.5 413.9,360.7 412.8,360.7 411.9,360.4 411.1,359.8 410.5,359.1 410.3,358.3 410.5,357.5 410.9,356.7 411.6,356.0 412.6,355.5 413.6,355.3 414.7,355.3 415.7,355.6 416.4,356.2 417.0,356.9" fill="#84761a" />
<polygon points="496.2,444.1 495.9,446.1 494.9,447.9 493.3,449.5 491.2,450.6 488.8,451.1 486.4,451.0 484.2,450.3 482.3,449.1 481.1,447.4 480.6,445.5 480.9,443.5 481.8,441.7 483.5,440.1 485.6,439.1 488.0,438.5 490.4,438.6 492.6,439.3 494.4,440.5 495.6,442.2" fill="#b9a30c" stroke="#ddd27a" stroke-width="0.7"/><polygon points="491.9,444.5 491.8,445.4 491.3,446.2 490.6,446.9 489.7,447.4 488.6,447.6 487.5,447.6 486.5,447.3 485.7,446.7 485.1,446.0 484.9,445.1 485.0,444.2 485.4,443.4 486.2,442.7 487.1,442.2 488.2,442.0 489.3,442.0 490.3,442.3 491.1,442.9 491.7,443.6" fill="#84761a" />
<polygon points="491.8,381.2 491.5,383.1 490.6,384.9 488.9,386.5 486.9,387.5 484.5,388.0 482.1,388.0 479.9,387.3 478.2,386.1 477.0,384.5 476.5,382.6 476.7,380.7 477.7,378.9 479.3,377.4 481.4,376.4 483.7,375.9 486.1,375.9 488.3,376.6 490.1,377.8 491.3,379.4" fill="#b9a30c" stroke="#ddd27a" stroke-width="0.7"/><polygon points="487.6,381.6 487.4,382.5 487.0,383.3 486.3,384.0 485.4,384.4 484.3,384.7 483.2,384.6 482.2,384.3 481.4,383.8 480.9,383.1 480.7,382.3 480.8,381.4 481.2,380.6 481.9,379.9 482.9,379.4 483.9,379.2 485.0,379.2 486.0,379.5 486.8,380.1 487.3,380.8" fill="#84761a" />
<polygon points="534.8,425.3 534.5,427.3 533.6,429.1 532.0,430.6 529.9,431.7 527.5,432.3 525.1,432.2 522.9,431.5 521.0,430.3 519.8,428.6 519.3,426.7 519.5,424.8 520.5,422.9 522.1,421.4 524.2,420.3 526.5,419.8 528.9,419.9 531.2,420.6 533.0,421.8 534.2,423.4" fill="#b9a30c" stroke="#ddd27a" stroke-width="0.7"/><polygon points="530.5,425.7 530.4,426.6 530.0,427.4 529.2,428.1 528.3,428.6 527.2,428.8 526.1,428.8 525.1,428.5 524.3,427.9 523.8,427.2 523.5,426.3 523.6,425.5 524.1,424.6 524.8,423.9 525.7,423.4 526.8,423.2 527.9,423.2 528.9,423.6 529.7,424.1 530.3,424.8" fill="#84761a" />
<polygon points="529.8,363.0 529.5,364.9 528.6,366.7 527.0,368.2 525.0,369.2 522.6,369.7 520.2,369.7 518.0,369.0 516.3,367.8 515.0,366.2 514.5,364.4 514.8,362.5 515.7,360.7 517.3,359.2 519.3,358.2 521.7,357.7 524.0,357.8 526.2,358.4 528.0,359.6 529.2,361.2" fill="#b9a30c" stroke="#ddd27a" stroke-width="0.7"/><polygon points="525.6,363.4 525.5,364.2 525.0,365.0 524.3,365.7 523.4,366.2 522.4,366.4 521.3,366.4 520.3,366.1 519.5,365.6 518.9,364.8 518.7,364.0 518.8,363.2 519.2,362.4 520.0,361.7 520.9,361.2 521.9,361.0 523.0,361.0 524.0,361.3 524.8,361.8 525.3,362.6" fill="#84761a" />
<polygon points="448.9,185.1 448.7,186.7 447.9,188.1 446.5,189.4 444.7,190.2 442.7,190.7 440.7,190.6 438.8,190.1 437.3,189.1 436.3,187.8 435.9,186.3 436.1,184.8 436.9,183.3 438.3,182.1 440.1,181.2 442.1,180.8 444.1,180.8 446.0,181.4 447.5,182.3 448.5,183.6" fill="#b9a30c" stroke="#ddd27a" stroke-width="0.7"/><polygon points="445.5,185.4 445.3,186.2 445.0,186.8 444.3,187.4 443.5,187.8 442.5,188.0 441.6,188.0 440.7,187.7 440.0,187.3 439.5,186.7 439.3,186.0 439.5,185.3 439.9,184.6 440.5,184.0 441.3,183.6 442.3,183.4 443.2,183.4 444.1,183.7 444.8,184.1 445.3,184.7" fill="#84761a" />
<polygon points="510.9,174.8 523.2,173.6 524.0,182.9 511.6,184.1" fill="#b9a30c" stroke="#ddd27a" stroke-width="0.7"/><polygon points="520.5,178.6 520.4,179.3 520.0,180.0 519.4,180.5 518.5,180.9 517.6,181.1 516.7,181.1 515.8,180.9 515.1,180.4 514.6,179.8 514.4,179.1 514.5,178.4 514.8,177.7 515.5,177.1 516.3,176.7 517.2,176.5 518.2,176.6 519.1,176.8 519.8,177.3 520.3,177.9" fill="#84761a" />
<polygon points="449.8,199.2 449.6,200.8 448.7,202.2 447.4,203.5 445.6,204.3 443.6,204.8 441.5,204.7 439.6,204.2 438.1,203.2 437.1,201.9 436.7,200.4 436.9,198.8 437.8,197.4 439.2,196.1 440.9,195.2 443.0,194.8 445.0,194.9 446.9,195.4 448.4,196.4 449.4,197.7" fill="#b9a30c" stroke="#ddd27a" stroke-width="0.7"/><polygon points="446.3,199.5 446.2,200.2 445.8,200.9 445.2,201.5 444.3,201.9 443.4,202.1 442.4,202.1 441.6,201.8 440.9,201.4 440.4,200.8 440.2,200.1 440.3,199.3 440.7,198.6 441.3,198.1 442.2,197.7 443.1,197.5 444.1,197.5 444.9,197.7 445.6,198.2 446.1,198.8" fill="#84761a" />
<polygon points="512.0,188.8 524.4,187.6 525.1,197.0 512.7,198.1" fill="#b9a30c" stroke="#ddd27a" stroke-width="0.7"/><polygon points="521.6,192.6 521.5,193.3 521.1,194.0 520.5,194.6 519.7,195.0 518.7,195.2 517.8,195.2 516.9,194.9 516.2,194.5 515.7,193.9 515.5,193.2 515.6,192.4 516.0,191.7 516.6,191.2 517.4,190.8 518.4,190.6 519.3,190.6 520.2,190.8 520.9,191.3 521.4,191.9" fill="#84761a" />
<polygon points="450.7,213.4 450.5,214.9 449.6,216.4 448.2,217.7 446.4,218.6 444.4,219.0 442.4,218.9 440.5,218.4 438.9,217.4 437.9,216.1 437.5,214.6 437.7,213.0 438.6,211.5 440.0,210.3 441.8,209.4 443.8,209.0 445.9,209.0 447.7,209.6 449.3,210.5 450.3,211.8" fill="#b9a30c" stroke="#ddd27a" stroke-width="0.7"/><polygon points="447.2,213.7 447.1,214.4 446.7,215.1 446.0,215.7 445.2,216.1 444.2,216.3 443.3,216.3 442.4,216.0 441.7,215.6 441.2,215.0 441.0,214.2 441.1,213.5 441.5,212.8 442.2,212.2 443.0,211.8 444.0,211.6 444.9,211.7 445.8,211.9 446.5,212.4 447.0,213.0" fill="#84761a" />
<polygon points="513.1,202.9 525.5,201.7 526.3,211.2 513.9,212.3" fill="#b9a30c" stroke="#ddd27a" stroke-width="0.7"/><polygon points="522.8,206.7 522.7,207.5 522.3,208.2 521.7,208.7 520.8,209.2 519.9,209.4 518.9,209.3 518.0,209.1 517.3,208.6 516.8,208.0 516.6,207.3 516.7,206.6 517.1,205.9 517.7,205.3 518.6,204.9 519.5,204.7 520.5,204.7 521.3,205.0 522.1,205.4 522.6,206.0" fill="#84761a" />
<polygon points="451.6,227.6 451.4,229.2 450.5,230.7 449.1,232.0 447.3,232.9 445.3,233.3 443.2,233.3 441.3,232.7 439.8,231.7 438.8,230.4 438.4,228.9 438.6,227.3 439.4,225.8 440.8,224.5 442.6,223.6 444.7,223.2 446.7,223.3 448.6,223.8 450.1,224.8 451.2,226.1" fill="#b9a30c" stroke="#ddd27a" stroke-width="0.7"/><polygon points="448.1,228.0 447.9,228.7 447.5,229.4 446.9,230.0 446.1,230.4 445.1,230.6 444.1,230.6 443.3,230.3 442.6,229.9 442.1,229.3 441.9,228.5 442.0,227.8 442.4,227.1 443.0,226.5 443.9,226.1 444.8,225.9 445.8,225.9 446.7,226.2 447.4,226.6 447.9,227.3" fill="#84761a" />
<polygon points="514.2,217.1 526.7,216.0 527.5,225.5 515.0,226.6" fill="#b9a30c" stroke="#ddd27a" stroke-width="0.7"/><polygon points="523.9,221.0 523.8,221.7 523.5,222.4 522.8,223.0 522.0,223.4 521.0,223.6 520.1,223.6 519.2,223.4 518.5,222.9 518.0,222.3 517.8,221.6 517.9,220.8 518.2,220.1 518.9,219.5 519.7,219.1 520.7,218.9 521.6,219.0 522.5,219.2 523.2,219.7 523.7,220.3" fill="#84761a" />
<polygon points="452.5,242.0 452.2,243.6 451.4,245.2 450.0,246.4 448.2,247.3 446.1,247.8 444.1,247.7 442.2,247.1 440.6,246.1 439.6,244.8 439.2,243.3 439.4,241.7 440.3,240.2 441.7,238.9 443.5,238.0 445.5,237.6 447.6,237.6 449.5,238.2 451.0,239.2 452.1,240.5" fill="#b9a30c" stroke="#ddd27a" stroke-width="0.7"/><polygon points="448.9,242.4 448.8,243.1 448.4,243.8 447.8,244.4 446.9,244.8 446.0,245.0 445.0,245.0 444.1,244.7 443.4,244.3 442.9,243.7 442.7,242.9 442.8,242.2 443.2,241.5 443.9,240.9 444.7,240.5 445.7,240.3 446.7,240.3 447.5,240.6 448.3,241.0 448.7,241.7" fill="#84761a" />
<polygon points="515.4,231.4 527.9,230.3 528.7,239.9 516.1,241.0" fill="#b9a30c" stroke="#ddd27a" stroke-width="0.7"/><polygon points="525.1,235.4 525.0,236.1 524.6,236.8 524.0,237.4 523.1,237.8 522.2,238.0 521.2,238.0 520.3,237.7 519.6,237.3 519.1,236.7 518.9,235.9 519.0,235.2 519.4,234.5 520.0,233.9 520.9,233.5 521.8,233.3 522.8,233.3 523.7,233.6 524.4,234.0 524.9,234.6" fill="#84761a" />
<polygon points="453.4,256.6 453.1,258.2 452.3,259.7 450.9,261.0 449.1,261.9 447.0,262.3 444.9,262.2 443.0,261.7 441.5,260.7 440.5,259.3 440.0,257.8 440.3,256.2 441.1,254.6 442.5,253.4 444.4,252.5 446.4,252.0 448.5,252.1 450.4,252.7 451.9,253.7 453.0,255.0" fill="#b9a30c" stroke="#ddd27a" stroke-width="0.7"/><polygon points="449.8,256.9 449.7,257.6 449.3,258.3 448.7,258.9 447.8,259.4 446.9,259.6 445.9,259.5 445.0,259.3 444.3,258.8 443.8,258.2 443.6,257.5 443.7,256.7 444.1,256.0 444.8,255.4 445.6,255.0 446.6,254.8 447.5,254.8 448.4,255.1 449.1,255.5 449.6,256.2" fill="#84761a" />
<polygon points="516.5,245.9 529.1,244.7 529.9,254.4 517.3,255.5" fill="#b9a30c" stroke="#ddd27a" stroke-width="0.7"/><polygon points="526.3,249.8 526.2,250.6 525.8,251.3 525.2,251.9 524.3,252.3 523.4,252.5 522.4,252.5 521.5,252.2 520.8,251.8 520.3,251.1 520.1,250.4 520.2,249.7 520.6,249.0 521.2,248.4 522.0,247.9 523.0,247.7 524.0,247.8 524.8,248.0 525.6,248.5 526.1,249.1" fill="#84761a" />
<polygon points="454.3,271.2 454.1,272.8 453.2,274.3 451.8,275.6 450.0,276.5 447.9,277.0 445.8,276.9 443.9,276.3 442.4,275.3 441.3,274.0 440.9,272.4 441.1,270.8 442.0,269.3 443.4,268.0 445.2,267.1 447.3,266.6 449.4,266.7 451.3,267.2 452.8,268.3 453.9,269.6" fill="#b9a30c" stroke="#ddd27a" stroke-width="0.7"/><polygon points="450.7,271.5 450.6,272.3 450.2,273.0 449.5,273.6 448.7,274.0 447.7,274.2 446.8,274.2 445.9,273.9 445.2,273.4 444.7,272.8 444.5,272.1 444.6,271.3 445.0,270.6 445.6,270.0 446.5,269.6 447.4,269.4 448.4,269.4 449.3,269.7 450.0,270.1 450.5,270.8" fill="#84761a" />
<polygon points="517.7,260.4 530.3,259.3 531.1,269.0 518.4,270.2" fill="#b9a30c" stroke="#ddd27a" stroke-width="0.7"/><polygon points="527.5,264.4 527.4,265.2 527.0,265.9 526.4,266.5 525.5,266.9 524.6,267.1 523.6,267.1 522.7,266.8 521.9,266.4 521.5,265.7 521.2,265.0 521.3,264.2 521.7,263.5 522.4,262.9 523.2,262.5 524.2,262.3 525.1,262.3 526.0,262.6 526.8,263.1 527.3,263.7" fill="#84761a" />
<polygon points="455.2,285.9 455.0,287.5 454.1,289.1 452.7,290.4 450.9,291.3 448.8,291.7 446.7,291.7 444.8,291.1 443.2,290.1 442.2,288.7 441.8,287.1 442.0,285.5 442.9,284.0 444.3,282.7 446.1,281.8 448.2,281.3 450.3,281.4 452.2,282.0 453.7,283.0 454.8,284.3" fill="#b9a30c" stroke="#ddd27a" stroke-width="0.7"/><polygon points="451.6,286.2 451.5,287.0 451.1,287.7 450.4,288.3 449.6,288.8 448.6,289.0 447.7,288.9 446.8,288.7 446.0,288.2 445.5,287.6 445.4,286.8 445.5,286.1 445.9,285.3 446.5,284.7 447.4,284.3 448.3,284.1 449.3,284.1 450.2,284.4 450.9,284.9 451.4,285.5" fill="#84761a" />
<polygon points="518.8,275.1 531.5,273.9 532.3,283.8 519.6,284.9" fill="#b9a30c" stroke="#ddd27a" stroke-width="0.7"/><polygon points="528.7,279.1 528.6,279.9 528.2,280.6 527.5,281.2 526.7,281.6 525.7,281.8 524.8,281.8 523.9,281.6 523.1,281.1 522.6,280.4 522.4,279.7 522.5,278.9 522.9,278.2 523.5,277.6 524.4,277.2 525.4,277.0 526.3,277.0 527.2,277.3 528.0,277.8 528.5,278.4" fill="#84761a" />
<polygon points="456.1,300.8 455.9,302.4 455.0,304.0 453.6,305.3 451.8,306.2 449.7,306.6 447.6,306.6 445.7,306.0 444.1,305.0 443.1,303.6 442.6,302.0 442.9,300.4 443.7,298.8 445.2,297.5 447.0,296.6 449.1,296.1 451.2,296.2 453.1,296.8 454.6,297.8 455.7,299.2" fill="#b9a30c" stroke="#ddd27a" stroke-width="0.7"/><polygon points="452.5,301.1 452.4,301.9 452.0,302.6 451.4,303.2 450.5,303.6 449.5,303.8 448.5,303.8 447.7,303.5 446.9,303.1 446.4,302.4 446.2,301.7 446.3,300.9 446.7,300.2 447.4,299.6 448.3,299.1 449.2,298.9 450.2,299.0 451.1,299.2 451.8,299.7 452.3,300.3" fill="#84761a" />
<polygon points="520.0,289.9 532.7,288.7 533.5,298.6 520.8,299.8" fill="#b9a30c" stroke="#ddd27a" stroke-width="0.7"/><polygon points="529.9,293.9 529.8,294.7 529.4,295.4 528.8,296.0 527.9,296.5 526.9,296.7 526.0,296.7 525.1,296.4 524.3,295.9 523.8,295.3 523.6,294.5 523.7,293.8 524.1,293.0 524.7,292.4 525.6,292.0 526.5,291.8 527.5,291.8 528.4,292.1 529.2,292.6 529.7,293.2" fill="#84761a" />
<polygon points="872.0,292.5 872.0,293.8 871.4,295.0 870.4,296.1 869.0,296.8 867.3,297.2 865.6,297.1 864.0,296.7 862.6,295.8 861.7,294.7 861.2,293.5 861.2,292.1 861.8,290.9 862.8,289.8 864.3,289.1 865.9,288.7 867.6,288.8 869.2,289.3 870.6,290.1 871.5,291.2" fill="#b9a30c" stroke="#ddd27a" stroke-width="0.7"/><polygon points="869.2,292.7 869.2,293.4 868.9,294.0 868.4,294.5 867.7,294.8 867.0,295.0 866.1,295.0 865.3,294.8 864.7,294.4 864.2,293.8 864.0,293.2 864.0,292.6 864.3,292.0 864.8,291.4 865.5,291.1 866.3,290.9 867.1,290.9 867.9,291.2 868.5,291.6 869.0,292.1" fill="#84761a" />
<polygon points="874.5,307.8 874.4,309.1 873.9,310.3 872.8,311.4 871.4,312.1 869.8,312.5 868.1,312.5 866.4,312.0 865.1,311.2 864.1,310.0 863.6,308.8 863.7,307.4 864.2,306.2 865.3,305.1 866.7,304.4 868.3,304.0 870.0,304.1 871.7,304.5 873.0,305.4 874.0,306.5" fill="#b9a30c" stroke="#ddd27a" stroke-width="0.7"/><polygon points="871.7,308.0 871.7,308.7 871.4,309.3 870.9,309.8 870.2,310.1 869.4,310.3 868.6,310.3 867.8,310.1 867.1,309.7 866.7,309.1 866.4,308.5 866.4,307.9 866.7,307.2 867.2,306.7 867.9,306.4 868.7,306.2 869.5,306.2 870.3,306.4 871.0,306.8 871.5,307.4" fill="#84761a" />
<polygon points="860.3,340.2 860.3,341.6 859.7,342.9 858.6,344.1 857.1,344.8 855.4,345.2 853.6,345.2 851.9,344.7 850.5,343.8 849.4,342.6 848.9,341.2 849.0,339.8 849.6,338.5 850.7,337.4 852.2,336.6 853.9,336.2 855.7,336.3 857.4,336.8 858.8,337.6 859.8,338.8" fill="#b9a30c" stroke="#ddd27a" stroke-width="0.7"/><polygon points="857.5,340.5 857.5,341.2 857.2,341.8 856.6,342.4 855.9,342.8 855.0,343.0 854.1,343.0 853.2,342.7 852.5,342.3 852.0,341.7 851.8,341.0 851.8,340.3 852.1,339.6 852.6,339.0 853.4,338.6 854.3,338.4 855.2,338.5 856.0,338.7 856.8,339.2 857.3,339.8" fill="#84761a" />
<polygon points="865.3,369.8 865.2,371.2 864.6,372.5 863.5,373.7 862.0,374.5 860.3,374.9 858.5,374.8 856.8,374.3 855.3,373.4 854.3,372.2 853.8,370.8 853.8,369.4 854.4,368.0 855.5,366.9 857.0,366.1 858.8,365.7 860.6,365.8 862.3,366.3 863.7,367.2 864.8,368.4" fill="#b9a30c" stroke="#ddd27a" stroke-width="0.7"/><polygon points="862.4,370.0 862.4,370.7 862.1,371.4 861.5,372.0 860.8,372.4 859.9,372.6 859.0,372.6 858.1,372.3 857.4,371.9 856.9,371.3 856.6,370.6 856.6,369.8 856.9,369.1 857.5,368.6 858.3,368.2 859.1,368.0 860.1,368.0 860.9,368.3 861.7,368.7 862.2,369.3" fill="#84761a" />
<polygon points="772.4,347.6 772.3,348.8 771.8,349.9 770.8,350.9 769.5,351.6 768.0,351.9 766.4,351.9 765.0,351.4 763.8,350.7 762.9,349.7 762.5,348.5 762.6,347.2 763.1,346.1 764.1,345.1 765.4,344.4 766.9,344.1 768.4,344.2 769.9,344.6 771.1,345.3 772.0,346.4" fill="#b9a30c" stroke="#ddd27a" stroke-width="0.7"/><polygon points="770.0,347.8 769.9,348.4 769.6,349.0 769.2,349.5 768.5,349.8 767.7,350.0 766.9,350.0 766.2,349.8 765.6,349.4 765.1,348.8 764.9,348.2 765.0,347.6 765.3,347.0 765.7,346.5 766.4,346.2 767.2,346.0 768.0,346.1 768.7,346.3 769.3,346.7 769.8,347.2" fill="#84761a" />
<polygon points="800.6,341.3 809.8,340.4 810.9,347.6 801.7,348.5" fill="#b9a30c" stroke="#ddd27a" stroke-width="0.7"/><polygon points="808.3,344.2 808.2,344.9 808.0,345.4 807.5,345.9 806.8,346.3 806.0,346.4 805.3,346.4 804.5,346.2 803.9,345.8 803.4,345.3 803.2,344.7 803.3,344.1 803.5,343.5 804.0,343.0 804.7,342.7 805.4,342.5 806.2,342.5 807.0,342.7 807.6,343.1 808.0,343.6" fill="#84761a" />
<polygon points="776.4,378.8 776.3,380.1 775.8,381.2 774.8,382.2 773.5,382.9 772.0,383.3 770.4,383.2 768.9,382.8 767.7,382.0 766.9,381.0 766.4,379.7 766.5,378.5 767.1,377.3 768.0,376.3 769.3,375.7 770.9,375.3 772.4,375.4 773.9,375.8 775.1,376.6 776.0,377.6" fill="#b9a30c" stroke="#ddd27a" stroke-width="0.7"/><polygon points="774.0,379.0 773.9,379.7 773.6,380.3 773.1,380.8 772.5,381.1 771.7,381.3 770.9,381.3 770.2,381.1 769.5,380.7 769.1,380.1 768.9,379.5 768.9,378.9 769.2,378.3 769.7,377.8 770.4,377.4 771.1,377.3 771.9,377.3 772.7,377.5 773.3,377.9 773.7,378.4" fill="#84761a" />
<polygon points="805.5,372.4 814.7,371.6 815.8,378.9 806.6,379.7" fill="#b9a30c" stroke="#ddd27a" stroke-width="0.7"/><polygon points="813.2,375.4 813.1,376.0 812.9,376.6 812.4,377.1 811.7,377.5 810.9,377.7 810.1,377.6 809.4,377.4 808.8,377.0 808.3,376.5 808.1,375.9 808.1,375.2 808.4,374.6 808.9,374.1 809.6,373.8 810.3,373.6 811.1,373.7 811.9,373.9 812.5,374.3 813.0,374.8" fill="#84761a" />
<line x1="116.1" y1="219.1" x2="72.3" y2="223.1" stroke="#0b170f" stroke-width="2.2" opacity="0.55"/><line x1="114.5" y1="211.3" x2="72.8" y2="215.1" stroke="#a8a21c" stroke-width="6.40" stroke-linecap="round"/><line x1="114.5" y1="209.6" x2="72.8" y2="213.4" stroke="#e6e044" stroke-width="5.12" stroke-linecap="round"/><line x1="114.5" y1="208.5" x2="72.8" y2="212.3" stroke="#f6f27a" stroke-width="1.92" stroke-linecap="round"/><polygon points="113.6,199.5 132.2,197.8 131.8,212.5 134.6,218.8 116.0,220.5 113.2,214.2" fill="#151515" /><polygon points="132.2,197.8 131.8,212.5 134.6,218.8 134.8,208.0" fill="#1e1e1e" /><polygon points="113.4,207.3 132.0,205.6 131.8,212.5 113.2,214.2" fill="#3f3f3f" /><polyline points="133.1,208.2 135.6,208.0 137.6,208.0 139.4,208.3 141.2,208.9 142.6,209.8 143.6,210.8 144.2,212.0 144.5,213.5" fill="none" stroke="#a8a21c" stroke-width="5.76" stroke-linecap="round" stroke-linejoin="round" transform="translate(0,0.9)"/><polyline points="133.1,208.2 135.6,208.0 137.6,208.0 139.4,208.3 141.2,208.9 142.6,209.8 143.6,210.8 144.2,212.0 144.5,213.5" fill="none" stroke="#e6e044" stroke-width="4.61" stroke-linecap="round" stroke-linejoin="round"/>
<line x1="115.7" y1="233.3" x2="71.7" y2="237.3" stroke="#0b170f" stroke-width="2.2" opacity="0.55"/><line x1="114.1" y1="225.5" x2="72.3" y2="229.3" stroke="#a8a21c" stroke-width="6.40" stroke-linecap="round"/><line x1="114.1" y1="223.7" x2="72.3" y2="227.6" stroke="#e6e044" stroke-width="5.12" stroke-linecap="round"/><line x1="114.1" y1="222.7" x2="72.3" y2="226.5" stroke="#f6f27a" stroke-width="1.92" stroke-linecap="round"/><polygon points="113.2,213.6 131.8,211.9 131.5,226.7 134.3,233.0 115.7,234.7 112.8,228.4" fill="#151515" /><polygon points="131.8,211.9 131.5,226.7 134.3,233.0 134.5,222.1" fill="#1e1e1e" /><polygon points="113.0,221.4 131.6,219.7 131.5,226.7 112.8,228.4" fill="#3f3f3f" /><polyline points="132.7,222.4 135.3,222.1 137.2,222.1 139.1,222.4 140.9,223.0 142.3,223.9 143.3,225.0 143.9,226.2 144.2,227.6" fill="none" stroke="#a8a21c" stroke-width="5.76" stroke-linecap="round" stroke-linejoin="round" transform="translate(0,0.9)"/><polyline points="132.7,222.4 135.3,222.1 137.2,222.1 139.1,222.4 140.9,223.0 142.3,223.9 143.3,225.0 143.9,226.2 144.2,227.6" fill="none" stroke="#e6e044" stroke-width="4.61" stroke-linecap="round" stroke-linejoin="round"/>
<line x1="115.3" y1="247.5" x2="71.2" y2="251.6" stroke="#0b170f" stroke-width="2.2" opacity="0.55"/><line x1="113.7" y1="239.7" x2="71.7" y2="243.6" stroke="#a8a21c" stroke-width="6.40" stroke-linecap="round"/><line x1="113.7" y1="238.0" x2="71.7" y2="241.8" stroke="#e6e044" stroke-width="5.12" stroke-linecap="round"/><line x1="113.7" y1="236.9" x2="71.7" y2="240.8" stroke="#f6f27a" stroke-width="1.92" stroke-linecap="round"/><polygon points="112.8,227.8 131.5,226.1 131.1,241.0 133.9,247.2 115.3,248.9 112.4,242.7" fill="#151515" /><polygon points="131.5,226.1 131.1,241.0 133.9,247.2 134.2,236.3" fill="#1e1e1e" /><polygon points="112.6,235.7 131.3,234.0 131.1,241.0 112.4,242.7" fill="#3f3f3f" /><polyline points="132.4,236.6 135.0,236.4 136.9,236.3 138.8,236.7 140.6,237.3 142.0,238.1 143.0,239.2 143.6,240.4 144.0,241.8" fill="none" stroke="#a8a21c" stroke-width="5.76" stroke-linecap="round" stroke-linejoin="round" transform="translate(0,0.9)"/><polyline points="132.4,236.6 135.0,236.4 136.9,236.3 138.8,236.7 140.6,237.3 142.0,238.1 143.0,239.2 143.6,240.4 144.0,241.8" fill="none" stroke="#e6e044" stroke-width="4.61" stroke-linecap="round" stroke-linejoin="round"/>
<polyline points="456.8,177.4 450.9,177.9 448.5,178.4 446.3,179.2 444.5,180.4 443.1,181.8 442.4,183.4 442.3,185.0 442.4,185.7" fill="none" stroke="#9a9410" stroke-width="3.6" stroke-linecap="round" stroke-linejoin="round" transform="translate(0,0.7)"/><polyline points="456.8,177.4 450.9,177.9 448.5,178.4 446.3,179.2 444.5,180.4 443.1,181.8 442.4,183.4 442.3,185.0 442.4,185.7" fill="none" stroke="#f2ee20" stroke-width="2.8" stroke-linecap="round" stroke-linejoin="round"/><polyline points="503.8,173.1 507.2,172.8 509.7,172.8 512.0,173.2 514.1,174.0 515.7,175.1 516.8,176.5 517.3,178.1 517.4,178.8" fill="none" stroke="#9a9410" stroke-width="3.6" stroke-linecap="round" stroke-linejoin="round" transform="translate(0,0.7)"/><polyline points="503.8,173.1 507.2,172.8 509.7,172.8 512.0,173.2 514.1,174.0 515.7,175.1 516.8,176.5 517.3,178.1 517.4,178.8" fill="none" stroke="#f2ee20" stroke-width="2.8" stroke-linecap="round" stroke-linejoin="round"/><g transform="translate(454.66,177.58) rotate(-5.24)"><rect x="0" y="-7.59" width="51.55" height="14.60" rx="1.6" fill="url(#dg)"/><rect x="38.41" y="-7.59" width="5.41" height="14.60" fill="url(#dr)"/></g>
<line x1="114.9" y1="261.9" x2="70.6" y2="266.0" stroke="#0b170f" stroke-width="2.2" opacity="0.55"/><line x1="113.3" y1="254.1" x2="71.1" y2="258.0" stroke="#a8a21c" stroke-width="6.40" stroke-linecap="round"/><line x1="113.3" y1="252.4" x2="71.1" y2="256.2" stroke="#e6e044" stroke-width="5.12" stroke-linecap="round"/><line x1="113.3" y1="251.3" x2="71.1" y2="255.1" stroke="#f6f27a" stroke-width="1.92" stroke-linecap="round"/><polygon points="112.4,242.1 131.1,240.4 130.8,255.4 133.6,261.6 114.9,263.3 111.9,257.1" fill="#151515" /><polygon points="131.1,240.4 130.8,255.4 133.6,261.6 133.9,250.6" fill="#1e1e1e" /><polygon points="112.1,250.1 131.0,248.4 130.8,255.4 111.9,257.1" fill="#3f3f3f" /><polyline points="132.1,250.9 134.7,250.7 136.6,250.7 138.5,251.0 140.3,251.6 141.7,252.5 142.7,253.5 143.3,254.7 143.7,256.1" fill="none" stroke="#a8a21c" stroke-width="5.76" stroke-linecap="round" stroke-linejoin="round" transform="translate(0,0.9)"/><polyline points="132.1,250.9 134.7,250.7 136.6,250.7 138.5,251.0 140.3,251.6 141.7,252.5 142.7,253.5 143.3,254.7 143.7,256.1" fill="none" stroke="#e6e044" stroke-width="4.61" stroke-linecap="round" stroke-linejoin="round"/>
<polyline points="457.7,191.5 451.8,192.0 449.4,192.4 447.2,193.3 445.3,194.4 444.0,195.9 443.2,197.4 443.2,199.1 443.3,199.8" fill="none" stroke="#9a9410" stroke-width="3.6" stroke-linecap="round" stroke-linejoin="round" transform="translate(0,0.7)"/><polyline points="457.7,191.5 451.8,192.0 449.4,192.4 447.2,193.3 445.3,194.4 444.0,195.9 443.2,197.4 443.2,199.1 443.3,199.8" fill="none" stroke="#f2ee20" stroke-width="2.8" stroke-linecap="round" stroke-linejoin="round"/><polyline points="504.9,187.1 508.3,186.8 510.8,186.8 513.1,187.2 515.2,188.0 516.9,189.2 518.0,190.6 518.5,192.2 518.6,192.9" fill="none" stroke="#9a9410" stroke-width="3.6" stroke-linecap="round" stroke-linejoin="round" transform="translate(0,0.7)"/><polyline points="504.9,187.1 508.3,186.8 510.8,186.8 513.1,187.2 515.2,188.0 516.9,189.2 518.0,190.6 518.5,192.2 518.6,192.9" fill="none" stroke="#f2ee20" stroke-width="2.8" stroke-linecap="round" stroke-linejoin="round"/><g transform="translate(455.56,191.66) rotate(-5.24)"><rect x="0" y="-7.59" width="51.75" height="14.60" rx="1.6" fill="url(#dg)"/><rect x="38.55" y="-7.59" width="5.43" height="14.60" fill="url(#dr)"/></g>
<line x1="114.5" y1="276.4" x2="70.0" y2="280.5" stroke="#0b170f" stroke-width="2.2" opacity="0.55"/><line x1="112.9" y1="268.6" x2="70.6" y2="272.4" stroke="#a8a21c" stroke-width="6.40" stroke-linecap="round"/><line x1="112.9" y1="266.8" x2="70.6" y2="270.7" stroke="#e6e044" stroke-width="5.12" stroke-linecap="round"/><line x1="112.9" y1="265.7" x2="70.6" y2="269.6" stroke="#f6f27a" stroke-width="1.92" stroke-linecap="round"/><polygon points="112.0,256.6 130.8,254.8 130.5,269.9 133.3,276.1 114.5,277.8 111.5,271.7" fill="#151515" /><polygon points="130.8,254.8 130.5,269.9 133.3,276.1 133.5,265.0" fill="#1e1e1e" /><polygon points="111.7,264.6 130.6,262.8 130.5,269.9 111.5,271.7" fill="#3f3f3f" /><polyline points="131.7,265.4 134.3,265.2 136.3,265.2 138.2,265.5 140.0,266.1 141.4,266.9 142.4,268.0 143.0,269.2 143.4,270.6" fill="none" stroke="#a8a21c" stroke-width="5.76" stroke-linecap="round" stroke-linejoin="round" transform="translate(0,0.9)"/><polyline points="131.7,265.4 134.3,265.2 136.3,265.2 138.2,265.5 140.0,266.1 141.4,266.9 142.4,268.0 143.0,269.2 143.4,270.6" fill="none" stroke="#e6e044" stroke-width="4.61" stroke-linecap="round" stroke-linejoin="round"/>
<polygon points="643.0,159.4 646.6,159.0 650.9,195.5 647.2,195.8" fill="#0c1a11" opacity="0.6"/><polygon points="646.3,153.8 650.4,188.6 649.7,176.5 645.6,141.7" fill="#2a2626" /><polygon points="650.4,188.6 780.1,176.7 780.0,164.6 649.7,176.5" fill="#4b4544" /><polygon points="645.6,141.7 774.7,129.8 780.0,164.6 649.7,176.5" fill="#575150" /><line x1="650.2" y1="174.5" x2="779.0" y2="162.7" stroke="#857f7c" stroke-width="0.9" /><polygon points="648.0,154.8 650.5,155.0 652.6,155.8 654.1,157.2 654.8,158.9 654.6,160.7 653.4,162.4 651.5,163.6 649.1,164.2" fill="#4f4948" /><polyline points="648.0,154.8 650.5,155.0 652.6,155.8 654.1,157.2 654.8,158.9 654.6,160.7 653.4,162.4 651.5,163.6 649.1,164.2" fill="none" stroke="#3a3535" stroke-width="0.9" /><polygon points="652.6,180.2 664.1,179.1 664.4,182.1 665.0,193.4 662.6,196.0 656.3,196.6 653.6,194.4 653.0,183.1" fill="url(#pinw)" /><polygon points="671.5,178.4 682.9,177.4 683.3,180.3 683.8,191.6 681.3,194.3 675.1,194.9 672.4,192.7 671.8,181.4" fill="url(#pinw)" /><polygon points="690.3,176.7 701.7,175.6 702.1,178.6 702.5,189.9 700.1,192.6 693.8,193.2 691.1,191.0 690.7,179.7" fill="url(#pinw)" /><polygon points="709.1,175.0 720.5,173.9 720.9,176.9 721.3,188.2 718.8,190.9 712.6,191.4 709.9,189.2 709.5,177.9" fill="url(#pinw)" /><polygon points="727.9,173.2 739.4,172.2 739.8,175.2 740.0,186.5 737.5,189.1 731.3,189.7 728.6,187.5 728.3,176.2" fill="url(#pinw)" /><polygon points="746.7,171.5 758.2,170.5 758.6,173.4 758.8,184.8 756.3,187.4 750.0,188.0 747.4,185.8 747.1,174.5" fill="url(#pinw)" /><polygon points="765.5,169.8 777.0,168.7 777.4,171.7 777.5,183.0 775.0,185.7 768.7,186.3 766.1,184.1 766.0,172.8" fill="url(#pinw)" />
<polyline points="458.7,205.6 452.7,206.2 450.2,206.6 448.0,207.5 446.2,208.6 444.8,210.0 444.1,211.6 444.0,213.3 444.1,214.0" fill="none" stroke="#9a9410" stroke-width="3.6" stroke-linecap="round" stroke-linejoin="round" transform="translate(0,0.7)"/><polyline points="458.7,205.6 452.7,206.2 450.2,206.6 448.0,207.5 446.2,208.6 444.8,210.0 444.1,211.6 444.0,213.3 444.1,214.0" fill="none" stroke="#f2ee20" stroke-width="2.8" stroke-linecap="round" stroke-linejoin="round"/><polyline points="506.0,201.3 509.4,201.0 511.9,201.0 514.3,201.4 516.3,202.2 518.0,203.3 519.1,204.7 519.6,206.3 519.7,207.0" fill="none" stroke="#9a9410" stroke-width="3.6" stroke-linecap="round" stroke-linejoin="round" transform="translate(0,0.7)"/><polyline points="506.0,201.3 509.4,201.0 511.9,201.0 514.3,201.4 516.3,202.2 518.0,203.3 519.1,204.7 519.6,206.3 519.7,207.0" fill="none" stroke="#f2ee20" stroke-width="2.8" stroke-linecap="round" stroke-linejoin="round"/><g transform="translate(456.46,205.84) rotate(-5.24)"><rect x="0" y="-7.59" width="51.95" height="14.60" rx="1.6" fill="url(#dg)"/><rect x="38.70" y="-7.59" width="5.45" height="14.60" fill="url(#dr)"/></g>
<line x1="114.1" y1="291.0" x2="69.4" y2="295.1" stroke="#0b170f" stroke-width="2.2" opacity="0.55"/><line x1="112.5" y1="283.1" x2="70.0" y2="287.0" stroke="#a8a21c" stroke-width="6.40" stroke-linecap="round"/><line x1="112.5" y1="281.4" x2="70.0" y2="285.3" stroke="#e6e044" stroke-width="5.12" stroke-linecap="round"/><line x1="112.5" y1="280.3" x2="70.0" y2="284.2" stroke="#f6f27a" stroke-width="1.92" stroke-linecap="round"/><polygon points="111.5,271.1 130.5,269.4 130.1,284.6 132.9,290.7 114.0,292.4 111.1,286.3" fill="#151515" /><polygon points="130.5,269.4 130.1,284.6 132.9,290.7 133.2,279.5" fill="#1e1e1e" /><polygon points="111.3,279.2 130.3,277.4 130.1,284.6 111.1,286.3" fill="#3f3f3f" /><polyline points="131.4,280.0 134.0,279.7 136.0,279.7 137.9,280.0 139.6,280.6 141.1,281.5 142.1,282.6 142.7,283.7 143.1,285.2" fill="none" stroke="#a8a21c" stroke-width="5.76" stroke-linecap="round" stroke-linejoin="round" transform="translate(0,0.9)"/><polyline points="131.4,280.0 134.0,279.7 136.0,279.7 137.9,280.0 139.6,280.6 141.1,281.5 142.1,282.6 142.7,283.7 143.1,285.2" fill="none" stroke="#e6e044" stroke-width="4.61" stroke-linecap="round" stroke-linejoin="round"/>
<line x1="1125.8" y1="219.1" x2="1170.2" y2="215.0" stroke="#0b170f" stroke-width="2.2" opacity="0.55"/><line x1="1125.9" y1="211.1" x2="1168.1" y2="207.2" stroke="#a8a21c" stroke-width="6.40" stroke-linecap="round"/><line x1="1125.9" y1="209.4" x2="1168.1" y2="205.5" stroke="#e6e044" stroke-width="5.12" stroke-linecap="round"/><line x1="1125.9" y1="208.3" x2="1168.1" y2="204.4" stroke="#f6f27a" stroke-width="1.92" stroke-linecap="round"/><polygon points="1106.0,200.9 1124.8,199.1 1128.5,214.1 1126.2,220.5 1107.4,222.2 1109.6,215.8" fill="#151515" /><polygon points="1106.0,200.9 1109.6,215.8 1107.4,222.2 1104.7,211.2" fill="#1e1e1e" /><polygon points="1107.9,208.8 1126.8,207.0 1128.5,214.1 1109.6,215.8" fill="#3f3f3f" /><polyline points="1107.1,211.5 1101.5,212.0 1099.6,212.3 1097.7,213.0 1096.1,213.9 1094.8,215.0 1093.9,216.2 1093.5,217.5 1093.3,218.9" fill="none" stroke="#a8a21c" stroke-width="5.76" stroke-linecap="round" stroke-linejoin="round" transform="translate(0,0.9)"/><polyline points="1107.1,211.5 1101.5,212.0 1099.6,212.3 1097.7,213.0 1096.1,213.9 1094.8,215.0 1093.9,216.2 1093.5,217.5 1093.3,218.9" fill="none" stroke="#e6e044" stroke-width="4.61" stroke-linecap="round" stroke-linejoin="round"/>
<line x1="113.7" y1="305.7" x2="68.9" y2="309.8" stroke="#0b170f" stroke-width="2.2" opacity="0.55"/><line x1="112.1" y1="297.8" x2="69.4" y2="301.8" stroke="#a8a21c" stroke-width="6.40" stroke-linecap="round"/><line x1="112.1" y1="296.1" x2="69.4" y2="300.0" stroke="#e6e044" stroke-width="5.12" stroke-linecap="round"/><line x1="112.1" y1="295.0" x2="69.4" y2="298.9" stroke="#f6f27a" stroke-width="1.92" stroke-linecap="round"/><polygon points="111.1,285.8 130.1,284.0 129.8,299.4 132.6,305.4 113.6,307.1 110.7,301.1" fill="#151515" /><polygon points="130.1,284.0 129.8,299.4 132.6,305.4 132.9,294.1" fill="#1e1e1e" /><polygon points="110.9,293.9 129.9,292.1 129.8,299.4 110.7,301.1" fill="#3f3f3f" /><polyline points="131.1,294.7 133.7,294.4 135.7,294.4 137.6,294.7 139.3,295.3 140.8,296.2 141.8,297.2 142.4,298.4 142.8,299.8" fill="none" stroke="#a8a21c" stroke-width="5.76" stroke-linecap="round" stroke-linejoin="round" transform="translate(0,0.9)"/><polyline points="131.1,294.7 133.7,294.4 135.7,294.4 137.6,294.7 139.3,295.3 140.8,296.2 141.8,297.2 142.4,298.4 142.8,299.8" fill="none" stroke="#e6e044" stroke-width="4.61" stroke-linecap="round" stroke-linejoin="round"/>
<polyline points="459.6,219.9 453.6,220.5 451.1,220.9 448.9,221.8 447.1,222.9 445.7,224.3 445.0,225.9 444.9,227.5 445.0,228.3" fill="none" stroke="#9a9410" stroke-width="3.6" stroke-linecap="round" stroke-linejoin="round" transform="translate(0,0.7)"/><polyline points="459.6,219.9 453.6,220.5 451.1,220.9 448.9,221.8 447.1,222.9 445.7,224.3 445.0,225.9 444.9,227.5 445.0,228.3" fill="none" stroke="#f2ee20" stroke-width="2.8" stroke-linecap="round" stroke-linejoin="round"/><polyline points="507.1,215.6 510.5,215.3 513.0,215.2 515.4,215.6 517.5,216.5 519.1,217.6 520.3,219.0 520.8,220.6 520.8,221.3" fill="none" stroke="#9a9410" stroke-width="3.6" stroke-linecap="round" stroke-linejoin="round" transform="translate(0,0.7)"/><polyline points="507.1,215.6 510.5,215.3 513.0,215.2 515.4,215.6 517.5,216.5 519.1,217.6 520.3,219.0 520.8,220.6 520.8,221.3" fill="none" stroke="#f2ee20" stroke-width="2.8" stroke-linecap="round" stroke-linejoin="round"/><g transform="translate(457.37,220.14) rotate(-5.25)"><rect x="0" y="-7.59" width="52.15" height="14.60" rx="1.6" fill="url(#dg)"/><rect x="38.85" y="-7.59" width="5.48" height="14.60" fill="url(#dr)"/></g>
<line x1="1129.4" y1="233.7" x2="1173.9" y2="229.6" stroke="#0b170f" stroke-width="2.2" opacity="0.55"/><line x1="1129.4" y1="225.7" x2="1171.8" y2="221.8" stroke="#a8a21c" stroke-width="6.40" stroke-linecap="round"/><line x1="1129.4" y1="224.0" x2="1171.8" y2="220.1" stroke="#e6e044" stroke-width="5.12" stroke-linecap="round"/><line x1="1129.4" y1="222.9" x2="1171.8" y2="219.0" stroke="#f6f27a" stroke-width="1.92" stroke-linecap="round"/><polygon points="1109.5,215.4 1128.4,213.7 1132.1,228.7 1129.7,235.1 1110.8,236.9 1113.1,230.5" fill="#151515" /><polygon points="1109.5,215.4 1113.1,230.5 1110.8,236.9 1108.2,225.8" fill="#1e1e1e" /><polygon points="1111.4,223.4 1130.3,221.6 1132.1,228.7 1113.1,230.5" fill="#3f3f3f" /><polyline points="1110.5,226.1 1105.0,226.6 1103.0,226.9 1101.2,227.6 1099.5,228.5 1098.2,229.6 1097.3,230.8 1096.9,232.1 1096.8,233.5" fill="none" stroke="#a8a21c" stroke-width="5.76" stroke-linecap="round" stroke-linejoin="round" transform="translate(0,0.9)"/><polyline points="1110.5,226.1 1105.0,226.6 1103.0,226.9 1101.2,227.6 1099.5,228.5 1098.2,229.6 1097.3,230.8 1096.9,232.1 1096.8,233.5" fill="none" stroke="#e6e044" stroke-width="4.61" stroke-linecap="round" stroke-linejoin="round"/>
<line x1="113.3" y1="320.5" x2="68.3" y2="324.7" stroke="#0b170f" stroke-width="2.2" opacity="0.55"/><line x1="111.6" y1="312.6" x2="68.8" y2="316.6" stroke="#a8a21c" stroke-width="6.40" stroke-linecap="round"/><line x1="111.6" y1="310.9" x2="68.8" y2="314.9" stroke="#e6e044" stroke-width="5.12" stroke-linecap="round"/><line x1="111.6" y1="309.8" x2="68.8" y2="313.8" stroke="#f6f27a" stroke-width="1.92" stroke-linecap="round"/><polygon points="110.7,300.5 129.8,298.8 129.4,314.2 132.3,320.2 113.2,322.0 110.3,316.0" fill="#151515" /><polygon points="129.8,298.8 129.4,314.2 132.3,320.2 132.5,308.8" fill="#1e1e1e" /><polygon points="110.5,308.7 129.6,307.0 129.4,314.2 110.3,316.0" fill="#3f3f3f" /><polyline points="130.7,309.5 133.3,309.2 135.3,309.2 137.3,309.5 139.0,310.1 140.5,311.0 141.5,312.0 142.1,313.2 142.5,314.6" fill="none" stroke="#a8a21c" stroke-width="5.76" stroke-linecap="round" stroke-linejoin="round" transform="translate(0,0.9)"/><polyline points="130.7,309.5 133.3,309.2 135.3,309.2 137.3,309.5 139.0,310.1 140.5,311.0 141.5,312.0 142.1,313.2 142.5,314.6" fill="none" stroke="#e6e044" stroke-width="4.61" stroke-linecap="round" stroke-linejoin="round"/>
<line x1="1132.9" y1="248.4" x2="1177.7" y2="244.3" stroke="#0b170f" stroke-width="2.2" opacity="0.55"/><line x1="1133.0" y1="240.4" x2="1175.6" y2="236.5" stroke="#a8a21c" stroke-width="6.40" stroke-linecap="round"/><line x1="1133.0" y1="238.7" x2="1175.6" y2="234.8" stroke="#e6e044" stroke-width="5.12" stroke-linecap="round"/><line x1="1133.0" y1="237.6" x2="1175.6" y2="233.7" stroke="#f6f27a" stroke-width="1.92" stroke-linecap="round"/><polygon points="1113.0,230.1 1132.0,228.3 1135.7,243.5 1133.3,249.9 1114.3,251.6 1116.6,245.3" fill="#151515" /><polygon points="1113.0,230.1 1116.6,245.3 1114.3,251.6 1111.7,240.4" fill="#1e1e1e" /><polygon points="1114.9,238.1 1133.9,236.4 1135.7,243.5 1116.6,245.3" fill="#3f3f3f" /><polyline points="1114.1,240.8 1108.5,241.3 1106.5,241.6 1104.6,242.3 1103.0,243.2 1101.7,244.3 1100.8,245.5 1100.4,246.8 1100.2,248.2" fill="none" stroke="#a8a21c" stroke-width="5.76" stroke-linecap="round" stroke-linejoin="round" transform="translate(0,0.9)"/><polyline points="1114.1,240.8 1108.5,241.3 1106.5,241.6 1104.6,242.3 1103.0,243.2 1101.7,244.3 1100.8,245.5 1100.4,246.8 1100.2,248.2" fill="none" stroke="#e6e044" stroke-width="4.61" stroke-linecap="round" stroke-linejoin="round"/>
<polyline points="460.5,234.3 454.5,234.9 452.0,235.3 449.8,236.2 447.9,237.3 446.6,238.7 445.8,240.3 445.7,241.9 445.8,242.7" fill="none" stroke="#9a9410" stroke-width="3.6" stroke-linecap="round" stroke-linejoin="round" transform="translate(0,0.7)"/><polyline points="460.5,234.3 454.5,234.9 452.0,235.3 449.8,236.2 447.9,237.3 446.6,238.7 445.8,240.3 445.7,241.9 445.8,242.7" fill="none" stroke="#f2ee20" stroke-width="2.8" stroke-linecap="round" stroke-linejoin="round"/><polyline points="508.2,230.0 511.6,229.6 514.2,229.6 516.5,230.0 518.6,230.8 520.3,232.0 521.4,233.4 521.9,234.9 522.0,235.6" fill="none" stroke="#9a9410" stroke-width="3.6" stroke-linecap="round" stroke-linejoin="round" transform="translate(0,0.7)"/><polyline points="508.2,230.0 511.6,229.6 514.2,229.6 516.5,230.0 518.6,230.8 520.3,232.0 521.4,233.4 521.9,234.9 522.0,235.6" fill="none" stroke="#f2ee20" stroke-width="2.8" stroke-linecap="round" stroke-linejoin="round"/><g transform="translate(458.29,234.55) rotate(-5.25)"><rect x="0" y="-7.59" width="52.35" height="14.60" rx="1.6" fill="url(#dg)"/><rect x="39.00" y="-7.59" width="5.50" height="14.60" fill="url(#dr)"/></g>
<line x1="112.9" y1="335.5" x2="67.7" y2="339.6" stroke="#0b170f" stroke-width="2.2" opacity="0.55"/><line x1="111.2" y1="327.6" x2="68.2" y2="331.5" stroke="#a8a21c" stroke-width="6.40" stroke-linecap="round"/><line x1="111.2" y1="325.8" x2="68.2" y2="329.8" stroke="#e6e044" stroke-width="5.12" stroke-linecap="round"/><line x1="111.2" y1="324.8" x2="68.2" y2="328.7" stroke="#f6f27a" stroke-width="1.92" stroke-linecap="round"/><polygon points="110.3,315.4 129.4,313.7 129.1,329.2 131.9,335.2 112.8,336.9 109.8,331.0" fill="#151515" /><polygon points="129.4,313.7 129.1,329.2 131.9,335.2 132.2,323.7" fill="#1e1e1e" /><polygon points="110.0,323.7 129.2,321.9 129.1,329.2 109.8,331.0" fill="#3f3f3f" /><polyline points="130.4,324.4 133.0,324.2 135.0,324.1 136.9,324.4 138.7,325.0 140.2,325.9 141.2,326.9 141.8,328.1 142.2,329.5" fill="none" stroke="#a8a21c" stroke-width="5.76" stroke-linecap="round" stroke-linejoin="round" transform="translate(0,0.9)"/><polyline points="130.4,324.4 133.0,324.2 135.0,324.1 136.9,324.4 138.7,325.0 140.2,325.9 141.2,326.9 141.8,328.1 142.2,329.5" fill="none" stroke="#e6e044" stroke-width="4.61" stroke-linecap="round" stroke-linejoin="round"/>
<line x1="1136.5" y1="263.2" x2="1181.4" y2="259.1" stroke="#0b170f" stroke-width="2.2" opacity="0.55"/><line x1="1136.6" y1="255.2" x2="1179.4" y2="251.3" stroke="#a8a21c" stroke-width="6.40" stroke-linecap="round"/><line x1="1136.6" y1="253.5" x2="1179.4" y2="249.6" stroke="#e6e044" stroke-width="5.12" stroke-linecap="round"/><line x1="1136.6" y1="252.4" x2="1179.4" y2="248.5" stroke="#f6f27a" stroke-width="1.92" stroke-linecap="round"/><polygon points="1116.5,244.9 1135.6,243.1 1139.3,258.4 1136.9,264.7 1117.9,266.5 1120.2,260.2" fill="#151515" /><polygon points="1116.5,244.9 1120.2,260.2 1117.9,266.5 1115.2,255.2" fill="#1e1e1e" /><polygon points="1118.5,253.0 1137.6,251.2 1139.3,258.4 1120.2,260.2" fill="#3f3f3f" /><polyline points="1117.6,255.6 1112.0,256.1 1110.0,256.5 1108.1,257.1 1106.5,258.0 1105.2,259.1 1104.3,260.3 1103.9,261.6 1103.7,263.0" fill="none" stroke="#a8a21c" stroke-width="5.76" stroke-linecap="round" stroke-linejoin="round" transform="translate(0,0.9)"/><polyline points="1117.6,255.6 1112.0,256.1 1110.0,256.5 1108.1,257.1 1106.5,258.0 1105.2,259.1 1104.3,260.3 1103.9,261.6 1103.7,263.0" fill="none" stroke="#e6e044" stroke-width="4.61" stroke-linecap="round" stroke-linejoin="round"/>
<polyline points="461.4,248.9 455.4,249.4 452.9,249.9 450.7,250.7 448.8,251.9 447.5,253.3 446.7,254.8 446.6,256.5 446.7,257.2" fill="none" stroke="#9a9410" stroke-width="3.6" stroke-linecap="round" stroke-linejoin="round" transform="translate(0,0.7)"/><polyline points="461.4,248.9 455.4,249.4 452.9,249.9 450.7,250.7 448.8,251.9 447.5,253.3 446.7,254.8 446.6,256.5 446.7,257.2" fill="none" stroke="#f2ee20" stroke-width="2.8" stroke-linecap="round" stroke-linejoin="round"/><polyline points="509.3,244.5 512.8,244.1 515.3,244.1 517.7,244.5 519.8,245.3 521.5,246.5 522.6,247.9 523.1,249.4 523.2,250.1" fill="none" stroke="#9a9410" stroke-width="3.6" stroke-linecap="round" stroke-linejoin="round" transform="translate(0,0.7)"/><polyline points="509.3,244.5 512.8,244.1 515.3,244.1 517.7,244.5 519.8,245.3 521.5,246.5 522.6,247.9 523.1,249.4 523.2,250.1" fill="none" stroke="#f2ee20" stroke-width="2.8" stroke-linecap="round" stroke-linejoin="round"/><g transform="translate(459.22,249.06) rotate(-5.26)"><rect x="0" y="-7.59" width="52.55" height="14.60" rx="1.6" fill="url(#dg)"/><rect x="39.15" y="-7.59" width="5.52" height="14.60" fill="url(#dr)"/></g>
<polyline points="462.4,263.5 456.3,264.0 453.8,264.5 451.6,265.3 449.7,266.5 448.4,267.9 447.6,269.5 447.5,271.1 447.6,271.8" fill="none" stroke="#9a9410" stroke-width="3.6" stroke-linecap="round" stroke-linejoin="round" transform="translate(0,0.7)"/><polyline points="462.4,263.5 456.3,264.0 453.8,264.5 451.6,265.3 449.7,266.5 448.4,267.9 447.6,269.5 447.5,271.1 447.6,271.8" fill="none" stroke="#f2ee20" stroke-width="2.8" stroke-linecap="round" stroke-linejoin="round"/><polyline points="510.5,259.1 513.9,258.7 516.4,258.7 518.9,259.1 521.0,259.9 522.6,261.1 523.8,262.4 524.3,264.0 524.4,264.7" fill="none" stroke="#9a9410" stroke-width="3.6" stroke-linecap="round" stroke-linejoin="round" transform="translate(0,0.7)"/><polyline points="510.5,259.1 513.9,258.7 516.4,258.7 518.9,259.1 521.0,259.9 522.6,261.1 523.8,262.4 524.3,264.0 524.4,264.7" fill="none" stroke="#f2ee20" stroke-width="2.8" stroke-linecap="round" stroke-linejoin="round"/><g transform="translate(460.15,263.70) rotate(-5.26)"><rect x="0" y="-7.59" width="52.76" height="14.60" rx="1.6" fill="url(#dg)"/><rect x="39.30" y="-7.59" width="5.54" height="14.60" fill="url(#dr)"/></g>
<polyline points="463.3,278.2 457.2,278.8 454.8,279.2 452.5,280.1 450.6,281.2 449.2,282.6 448.5,284.2 448.4,285.8 448.5,286.5" fill="none" stroke="#9a9410" stroke-width="3.6" stroke-linecap="round" stroke-linejoin="round" transform="translate(0,0.7)"/><polyline points="463.3,278.2 457.2,278.8 454.8,279.2 452.5,280.1 450.6,281.2 449.2,282.6 448.5,284.2 448.4,285.8 448.5,286.5" fill="none" stroke="#f2ee20" stroke-width="2.8" stroke-linecap="round" stroke-linejoin="round"/><polyline points="511.6,273.8 515.1,273.5 517.6,273.4 520.0,273.8 522.1,274.6 523.8,275.8 525.0,277.2 525.5,278.7 525.5,279.4" fill="none" stroke="#9a9410" stroke-width="3.6" stroke-linecap="round" stroke-linejoin="round" transform="translate(0,0.7)"/><polyline points="511.6,273.8 515.1,273.5 517.6,273.4 520.0,273.8 522.1,274.6 523.8,275.8 525.0,277.2 525.5,278.7 525.5,279.4" fill="none" stroke="#f2ee20" stroke-width="2.8" stroke-linecap="round" stroke-linejoin="round"/><g transform="translate(461.09,278.44) rotate(-5.27)"><rect x="0" y="-7.59" width="52.96" height="14.60" rx="1.6" fill="url(#dg)"/><rect x="39.46" y="-7.59" width="5.56" height="14.60" fill="url(#dr)"/></g>
<polyline points="464.3,293.1 458.2,293.7 455.7,294.1 453.4,294.9 451.5,296.1 450.2,297.5 449.4,299.1 449.3,300.7 449.4,301.4" fill="none" stroke="#9a9410" stroke-width="3.6" stroke-linecap="round" stroke-linejoin="round" transform="translate(0,0.7)"/><polyline points="464.3,293.1 458.2,293.7 455.7,294.1 453.4,294.9 451.5,296.1 450.2,297.5 449.4,299.1 449.3,300.7 449.4,301.4" fill="none" stroke="#f2ee20" stroke-width="2.8" stroke-linecap="round" stroke-linejoin="round"/><polyline points="512.7,288.6 516.2,288.3 518.8,288.3 521.2,288.7 523.3,289.5 525.0,290.6 526.2,292.0 526.7,293.5 526.7,294.2" fill="none" stroke="#9a9410" stroke-width="3.6" stroke-linecap="round" stroke-linejoin="round" transform="translate(0,0.7)"/><polyline points="512.7,288.6 516.2,288.3 518.8,288.3 521.2,288.7 523.3,289.5 525.0,290.6 526.2,292.0 526.7,293.5 526.7,294.2" fill="none" stroke="#f2ee20" stroke-width="2.8" stroke-linecap="round" stroke-linejoin="round"/><g transform="translate(462.04,293.30) rotate(-5.27)"><rect x="0" y="-7.59" width="53.17" height="14.60" rx="1.6" fill="url(#dg)"/><rect x="39.61" y="-7.59" width="5.58" height="14.60" fill="url(#dr)"/></g>
<polygon points="654.3,260.5 658.0,260.2 662.4,298.7 658.7,299.0" fill="#0c1a11" opacity="0.6"/><polygon points="657.7,255.0 662.0,291.7 661.3,279.9 657.0,243.0" fill="#2a2626" /><polygon points="662.0,291.7 795.4,279.4 795.4,267.5 661.3,279.9" fill="#4b4544" /><polygon points="657.0,243.0 789.8,230.8 795.4,267.5 661.3,279.9" fill="#575150" /><line x1="661.8" y1="277.7" x2="794.4" y2="265.5" stroke="#857f7c" stroke-width="0.9" /><polygon points="659.5,256.9 662.0,257.1 664.2,257.9 665.8,259.4 666.5,261.3 666.2,263.2 665.0,264.9 663.1,266.2 660.7,266.8" fill="#4f4948" /><polyline points="659.5,256.9 662.0,257.1 664.2,257.9 665.8,259.4 666.5,261.3 666.2,263.2 665.0,264.9 663.1,266.2 660.7,266.8" fill="none" stroke="#3a3535" stroke-width="0.9" /><polygon points="664.3,283.4 676.1,282.3 676.5,285.5 677.0,296.6 674.5,299.3 668.1,299.9 665.3,297.7 664.7,286.6" fill="url(#pinw)" /><polygon points="683.7,281.6 695.4,280.5 695.8,283.7 696.3,294.8 693.8,297.5 687.3,298.1 684.6,295.9 684.1,284.8" fill="url(#pinw)" /><polygon points="703.1,279.8 714.8,278.8 715.2,281.9 715.6,293.0 713.1,295.7 706.6,296.3 703.9,294.1 703.5,283.0" fill="url(#pinw)" /><polygon points="722.4,278.1 734.2,277.0 734.6,280.1 734.9,291.3 732.3,293.9 725.9,294.5 723.2,292.3 722.8,281.2" fill="url(#pinw)" /><polygon points="741.8,276.3 753.5,275.2 754.0,278.3 754.2,289.5 751.6,292.1 745.2,292.7 742.5,290.6 742.2,279.4" fill="url(#pinw)" /><polygon points="761.1,274.5 772.9,273.4 773.4,276.5 773.5,287.7 770.9,290.4 764.5,291.0 761.7,288.8 761.6,277.6" fill="url(#pinw)" /><polygon points="780.5,272.7 792.3,271.6 792.7,274.7 792.7,285.9 790.2,288.6 783.7,289.2 781.0,287.0 781.0,275.8" fill="url(#pinw)" />
<g opacity="0.3"><line x1="622.5" y1="311.4" x2="581.4" y2="-260.3" stroke="#72727a" stroke-width="1" /><line x1="697.8" y1="304.4" x2="674.5" y2="-268.6" stroke="#72727a" stroke-width="1" /><line x1="547.2" y1="318.3" x2="488.2" y2="-252.0" stroke="#72727a" stroke-width="1" /><line x1="773.0" y1="297.5" x2="767.5" y2="-276.9" stroke="#72727a" stroke-width="1" /><line x1="471.8" y1="325.3" x2="394.9" y2="-243.7" stroke="#72727a" stroke-width="1" /><line x1="848.1" y1="290.5" x2="860.5" y2="-285.2" stroke="#72727a" stroke-width="1" /><line x1="396.4" y1="332.3" x2="301.5" y2="-235.3" stroke="#72727a" stroke-width="1" /><line x1="923.2" y1="283.6" x2="953.3" y2="-293.5" stroke="#72727a" stroke-width="1" /><line x1="320.9" y1="339.3" x2="208.0" y2="-227.0" stroke="#72727a" stroke-width="1" /><line x1="998.2" y1="276.6" x2="1046.0" y2="-301.8" stroke="#72727a" stroke-width="1" /><line x1="245.3" y1="346.2" x2="114.4" y2="-218.7" stroke="#72727a" stroke-width="1" /><line x1="1073.1" y1="269.7" x2="1138.6" y2="-310.0" stroke="#72727a" stroke-width="1" /><line x1="169.7" y1="353.2" x2="20.8" y2="-210.3" stroke="#72727a" stroke-width="1" /><line x1="1148.0" y1="262.8" x2="1231.1" y2="-318.3" stroke="#72727a" stroke-width="1" /><line x1="94.0" y1="360.2" x2="-73.0" y2="-201.9" stroke="#72727a" stroke-width="1" /><line x1="1222.8" y1="255.9" x2="1323.6" y2="-326.6" stroke="#72727a" stroke-width="1" /><line x1="18.2" y1="367.2" x2="-166.9" y2="-193.5" stroke="#72727a" stroke-width="1" /><line x1="1297.6" y1="249.0" x2="1415.9" y2="-334.8" stroke="#72727a" stroke-width="1" /><line x1="-57.6" y1="374.3" x2="-260.9" y2="-185.2" stroke="#72727a" stroke-width="1" /><line x1="-71.9" y1="335.0" x2="1305.9" y2="208.0" stroke="#72727a" stroke-width="1" /><line x1="-89.5" y1="286.6" x2="1316.1" y2="157.4" stroke="#72727a" stroke-width="1" /><line x1="-107.8" y1="236.2" x2="1326.8" y2="104.7" stroke="#72727a" stroke-width="1" /><line x1="-126.9" y1="183.6" x2="1337.9" y2="49.8" stroke="#72727a" stroke-width="1" /><line x1="-146.8" y1="128.8" x2="1349.5" y2="-7.4" stroke="#72727a" stroke-width="1" /><line x1="-167.6" y1="71.6" x2="1361.6" y2="-67.2" stroke="#72727a" stroke-width="1" /><line x1="-189.4" y1="11.7" x2="1374.3" y2="-129.6" stroke="#72727a" stroke-width="1" /><line x1="-212.1" y1="-50.9" x2="1387.5" y2="-194.9" stroke="#72727a" stroke-width="1" /><line x1="-235.9" y1="-116.4" x2="1401.4" y2="-263.2" stroke="#72727a" stroke-width="1" /><line x1="-260.9" y1="-185.2" x2="1415.9" y2="-334.8" stroke="#72727a" stroke-width="1" /></g>
<line x1="1157.7" y1="355.0" x2="1203.7" y2="350.8" stroke="#0b170f" stroke-width="2.2" opacity="0.55"/><line x1="1157.7" y1="347.7" x2="1201.5" y2="343.6" stroke="#a8a21c" stroke-width="6.40" stroke-linecap="round"/><line x1="1157.7" y1="345.9" x2="1201.5" y2="341.9" stroke="#e6e044" stroke-width="5.12" stroke-linecap="round"/><line x1="1157.7" y1="344.9" x2="1201.5" y2="340.8" stroke="#f6f27a" stroke-width="1.92" stroke-linecap="round"/><polyline points="1138.2,348.1 1134.4,348.4 1132.4,348.8 1130.4,349.4 1128.7,350.3 1127.4,351.4 1126.5,352.6 1126.0,353.9 1125.9,354.6" fill="none" stroke="#a8a21c" stroke-width="5.76" stroke-linecap="round" stroke-linejoin="round" transform="translate(0,0.9)"/><polyline points="1138.2,348.1 1134.4,348.4 1132.4,348.8 1130.4,349.4 1128.7,350.3 1127.4,351.4 1126.5,352.6 1126.0,353.9 1125.9,354.6" fill="none" stroke="#e6e044" stroke-width="4.61" stroke-linecap="round" stroke-linejoin="round"/><polygon points="1139.0,324.2 1158.6,322.4 1162.5,338.4 1158.1,356.6 1138.6,358.4 1142.8,340.3" fill="#151515" /><polygon points="1139.0,324.2 1142.8,340.3 1138.6,358.4 1135.8,346.5" fill="#1e1e1e" /><polygon points="1141.0,332.7 1160.7,330.9 1162.5,338.4 1142.8,340.3" fill="#3f3f3f" />
<line x1="1159.7" y1="334.6" x2="1203.7" y2="330.5" stroke="#a8a21c" stroke-width="6.40" stroke-linecap="round"/><line x1="1159.7" y1="332.9" x2="1203.7" y2="328.8" stroke="#e6e044" stroke-width="5.12" stroke-linecap="round"/><line x1="1159.7" y1="331.8" x2="1203.7" y2="327.7" stroke="#f6f27a" stroke-width="1.92" stroke-linecap="round"/>
<line x1="1161.4" y1="370.3" x2="1207.6" y2="366.0" stroke="#0b170f" stroke-width="2.2" opacity="0.55"/><line x1="1161.4" y1="362.9" x2="1205.3" y2="358.8" stroke="#a8a21c" stroke-width="6.40" stroke-linecap="round"/><line x1="1161.4" y1="361.2" x2="1205.3" y2="357.1" stroke="#e6e044" stroke-width="5.12" stroke-linecap="round"/><line x1="1161.4" y1="360.1" x2="1205.3" y2="356.0" stroke="#f6f27a" stroke-width="1.92" stroke-linecap="round"/><polyline points="1141.8,363.3 1138.0,363.7 1136.0,364.0 1134.0,364.7 1132.3,365.6 1131.0,366.7 1130.0,367.9 1129.6,369.1 1129.5,369.8" fill="none" stroke="#a8a21c" stroke-width="5.76" stroke-linecap="round" stroke-linejoin="round" transform="translate(0,0.9)"/><polyline points="1141.8,363.3 1138.0,363.7 1136.0,364.0 1134.0,364.7 1132.3,365.6 1131.0,366.7 1130.0,367.9 1129.6,369.1 1129.5,369.8" fill="none" stroke="#e6e044" stroke-width="4.61" stroke-linecap="round" stroke-linejoin="round"/><polygon points="1142.6,339.4 1162.3,337.6 1166.3,353.8 1161.8,371.8 1142.2,373.6 1146.5,355.6" fill="#151515" /><polygon points="1142.6,339.4 1146.5,355.6 1142.2,373.6 1139.4,361.7" fill="#1e1e1e" /><polygon points="1144.7,348.0 1164.4,346.2 1166.3,353.8 1146.5,355.6" fill="#3f3f3f" />
<polyline points="1140.1,335.0 1116.2,337.2 1114.1,337.6 1112.2,338.2 1110.5,339.1 1109.2,340.2 1108.2,341.5 1107.8,342.7 1106.0,356.4" fill="none" stroke="#a8a21c" stroke-width="5.76" stroke-linecap="round" stroke-linejoin="round" transform="translate(0,0.9)"/><polyline points="1140.1,335.0 1116.2,337.2 1114.1,337.6 1112.2,338.2 1110.5,339.1 1109.2,340.2 1108.2,341.5 1107.8,342.7 1106.0,356.4" fill="none" stroke="#e6e044" stroke-width="4.61" stroke-linecap="round" stroke-linejoin="round"/>
<line x1="106.9" y1="452.2" x2="60.4" y2="456.5" stroke="#0b170f" stroke-width="2.2" opacity="0.55"/><line x1="105.2" y1="444.2" x2="60.9" y2="448.3" stroke="#a8a21c" stroke-width="6.40" stroke-linecap="round"/><line x1="105.2" y1="442.5" x2="60.9" y2="446.6" stroke="#e6e044" stroke-width="5.12" stroke-linecap="round"/><line x1="105.2" y1="441.4" x2="60.9" y2="445.5" stroke="#f6f27a" stroke-width="1.92" stroke-linecap="round"/><polygon points="104.2,431.7 124.0,429.9 123.6,446.5 126.6,451.9 106.9,453.8 103.8,448.3" fill="#151515" /><polygon points="124.0,429.9 123.6,446.5 126.6,451.9 126.9,439.7" fill="#1e1e1e" /><polygon points="104.0,440.5 123.8,438.7 123.6,446.5 103.8,448.3" fill="#3f3f3f" /><polyline points="124.9,441.0 130.4,440.5 132.4,440.5 134.4,440.7 136.3,441.3 137.8,442.1 138.9,443.2 139.5,444.3 139.9,445.7" fill="none" stroke="#a8a21c" stroke-width="5.76" stroke-linecap="round" stroke-linejoin="round" transform="translate(0,0.9)"/><polyline points="124.9,441.0 130.4,440.5 132.4,440.5 134.4,440.7 136.3,441.3 137.8,442.1 138.9,443.2 139.5,444.3 139.9,445.7" fill="none" stroke="#e6e044" stroke-width="4.61" stroke-linecap="round" stroke-linejoin="round"/>
<line x1="179.4" y1="379.1" x2="179.0" y2="376.2" stroke="#bcbcbc" stroke-width="3.6" stroke-linecap="round"/><line x1="178.8" y1="379.1" x2="178.4" y2="376.2" stroke="#f4f4f4" stroke-width="1.4" stroke-linecap="round"/><polygon points="181.0,432.0 194.1,428.9 194.4,391.4 181.4,392.6" fill="#0a1810" opacity="0.45"/><line x1="179.3" y1="442.1" x2="176.7" y2="417.5" stroke="#c4c4c4" stroke-width="5.4" stroke-linecap="round"/><line x1="178.8" y1="442.1" x2="176.2" y2="417.5" stroke="#ffffff" stroke-width="4.0" stroke-linecap="round"/><use href="#resb" transform="matrix(7.811,0.085,-0.068,6.266,176.50,431.55)"/>
<line x1="1163.4" y1="349.9" x2="1207.6" y2="345.8" stroke="#a8a21c" stroke-width="6.40" stroke-linecap="round"/><line x1="1163.4" y1="348.1" x2="1207.6" y2="344.0" stroke="#e6e044" stroke-width="5.12" stroke-linecap="round"/><line x1="1163.4" y1="347.0" x2="1207.6" y2="342.9" stroke="#f6f27a" stroke-width="1.92" stroke-linecap="round"/>
<line x1="208.6" y1="376.4" x2="208.2" y2="373.5" stroke="#bcbcbc" stroke-width="3.6" stroke-linecap="round"/><line x1="208.0" y1="376.4" x2="207.6" y2="373.5" stroke="#f4f4f4" stroke-width="1.4" stroke-linecap="round"/><polygon points="210.6,429.2 223.8,426.1 223.7,388.7 210.7,389.9" fill="#0a1810" opacity="0.45"/><line x1="209.1" y1="439.3" x2="206.4" y2="414.8" stroke="#c4c4c4" stroke-width="5.4" stroke-linecap="round"/><line x1="208.6" y1="439.3" x2="205.9" y2="414.8" stroke="#ffffff" stroke-width="4.0" stroke-linecap="round"/><use href="#resb" transform="matrix(7.809,0.026,-0.021,6.260,206.36,428.78)"/>
<line x1="1165.1" y1="385.7" x2="1211.5" y2="381.4" stroke="#0b170f" stroke-width="2.2" opacity="0.55"/><line x1="1165.2" y1="378.3" x2="1209.3" y2="374.2" stroke="#a8a21c" stroke-width="6.40" stroke-linecap="round"/><line x1="1165.2" y1="376.6" x2="1209.3" y2="372.5" stroke="#e6e044" stroke-width="5.12" stroke-linecap="round"/><line x1="1165.2" y1="375.5" x2="1209.3" y2="371.4" stroke="#f6f27a" stroke-width="1.92" stroke-linecap="round"/><polyline points="1145.5,378.7 1141.6,379.1 1139.6,379.4 1137.7,380.1 1136.0,381.0 1134.6,382.0 1133.7,383.2 1133.2,384.5 1133.1,385.2" fill="none" stroke="#a8a21c" stroke-width="5.76" stroke-linecap="round" stroke-linejoin="round" transform="translate(0,0.9)"/><polyline points="1145.5,378.7 1141.6,379.1 1139.6,379.4 1137.7,380.1 1136.0,381.0 1134.6,382.0 1133.7,383.2 1133.2,384.5 1133.1,385.2" fill="none" stroke="#e6e044" stroke-width="4.61" stroke-linecap="round" stroke-linejoin="round"/><polygon points="1146.3,354.8 1166.1,352.9 1170.1,369.3 1165.5,387.2 1145.9,389.0 1150.2,371.1" fill="#151515" /><polygon points="1146.3,354.8 1150.2,371.1 1145.9,389.0 1143.0,377.0" fill="#1e1e1e" /><polygon points="1148.4,363.4 1168.2,361.6 1170.1,369.3 1150.2,371.1" fill="#3f3f3f" />
<polyline points="1143.8,350.3 1119.7,352.5 1117.7,352.9 1115.8,353.5 1114.1,354.4 1112.7,355.5 1111.8,356.7 1111.3,358.0 1109.5,371.7" fill="none" stroke="#a8a21c" stroke-width="5.76" stroke-linecap="round" stroke-linejoin="round" transform="translate(0,0.9)"/><polyline points="1143.8,350.3 1119.7,352.5 1117.7,352.9 1115.8,353.5 1114.1,354.4 1112.7,355.5 1111.8,356.7 1111.3,358.0 1109.5,371.7" fill="none" stroke="#e6e044" stroke-width="4.61" stroke-linecap="round" stroke-linejoin="round"/>
<line x1="237.9" y1="373.7" x2="237.5" y2="370.8" stroke="#bcbcbc" stroke-width="3.6" stroke-linecap="round"/><line x1="237.3" y1="373.7" x2="236.9" y2="370.8" stroke="#f4f4f4" stroke-width="1.4" stroke-linecap="round"/><polygon points="240.3,426.5 253.4,423.4 253.1,386.0 240.1,387.2" fill="#0a1810" opacity="0.45"/><line x1="238.8" y1="436.6" x2="236.2" y2="412.0" stroke="#c4c4c4" stroke-width="5.4" stroke-linecap="round"/><line x1="238.3" y1="436.6" x2="235.7" y2="412.0" stroke="#ffffff" stroke-width="4.0" stroke-linecap="round"/><use href="#resb" transform="matrix(7.806,-0.033,0.027,6.255,236.22,426.01)"/>
<line x1="267.1" y1="371.0" x2="266.7" y2="368.1" stroke="#bcbcbc" stroke-width="3.6" stroke-linecap="round"/><line x1="266.5" y1="371.0" x2="266.1" y2="368.1" stroke="#f4f4f4" stroke-width="1.4" stroke-linecap="round"/><polygon points="269.9,423.7 283.0,420.6 282.4,383.3 269.4,384.5" fill="#0a1810" opacity="0.45"/><line x1="268.5" y1="433.8" x2="265.9" y2="409.2" stroke="#c4c4c4" stroke-width="5.4" stroke-linecap="round"/><line x1="268.0" y1="433.8" x2="265.4" y2="409.2" stroke="#ffffff" stroke-width="4.0" stroke-linecap="round"/><use href="#resb" transform="matrix(7.803,-0.092,0.074,6.250,266.06,423.23)"/>
<line x1="106.4" y1="468.4" x2="59.7" y2="472.7" stroke="#0b170f" stroke-width="2.2" opacity="0.55"/><line x1="104.7" y1="460.4" x2="60.3" y2="464.5" stroke="#a8a21c" stroke-width="6.40" stroke-linecap="round"/><line x1="104.7" y1="458.7" x2="60.3" y2="462.8" stroke="#e6e044" stroke-width="5.12" stroke-linecap="round"/><line x1="104.7" y1="457.6" x2="60.3" y2="461.7" stroke="#f6f27a" stroke-width="1.92" stroke-linecap="round"/><polygon points="103.8,447.9 123.6,446.0 123.2,462.7 126.2,468.1 106.4,469.9 103.3,464.5" fill="#151515" /><polygon points="123.6,446.0 123.2,462.7 126.2,468.1 126.5,455.8" fill="#1e1e1e" /><polygon points="103.5,456.7 123.4,454.8 123.2,462.7 103.3,464.5" fill="#3f3f3f" /><polyline points="124.6,457.1 130.0,456.6 132.1,456.6 134.1,456.9 135.9,457.5 137.4,458.3 138.5,459.3 139.1,460.5 139.5,461.8" fill="none" stroke="#a8a21c" stroke-width="5.76" stroke-linecap="round" stroke-linejoin="round" transform="translate(0,0.9)"/><polyline points="124.6,457.1 130.0,456.6 132.1,456.6 134.1,456.9 135.9,457.5 137.4,458.3 138.5,459.3 139.1,460.5 139.5,461.8" fill="none" stroke="#e6e044" stroke-width="4.61" stroke-linecap="round" stroke-linejoin="round"/>
<line x1="1167.2" y1="365.3" x2="1211.5" y2="361.1" stroke="#a8a21c" stroke-width="6.40" stroke-linecap="round"/><line x1="1167.2" y1="363.5" x2="1211.5" y2="359.4" stroke="#e6e044" stroke-width="5.12" stroke-linecap="round"/><line x1="1167.2" y1="362.4" x2="1211.5" y2="358.3" stroke="#f6f27a" stroke-width="1.92" stroke-linecap="round"/>
<line x1="296.3" y1="368.3" x2="295.9" y2="365.4" stroke="#bcbcbc" stroke-width="3.6" stroke-linecap="round"/><line x1="295.7" y1="368.3" x2="295.3" y2="365.4" stroke="#f4f4f4" stroke-width="1.4" stroke-linecap="round"/><polygon points="299.5,421.0 312.6,417.9 311.7,380.5 298.7,381.7" fill="#0a1810" opacity="0.45"/><line x1="298.2" y1="431.0" x2="295.6" y2="406.5" stroke="#c4c4c4" stroke-width="5.4" stroke-linecap="round"/><line x1="297.7" y1="431.0" x2="295.1" y2="406.5" stroke="#ffffff" stroke-width="4.0" stroke-linecap="round"/><use href="#resb" transform="matrix(7.799,-0.152,0.121,6.244,295.89,420.46)"/>
<polygon points="892.9,220.7 897.8,218.6 936.5,431.0 931.0,431.5" fill="#0c1a11" opacity="0.5"/><polygon points="953.7,210.1 949.2,210.5 948.6,220.4 953.1,220.0" fill="#dedede" /><polygon points="945.3,203.1 952.2,202.4 953.7,210.1 946.8,210.7" fill="#f6f6f6" /><polygon points="956.5,224.5 952.1,225.0 951.4,234.8 955.9,234.4" fill="#dedede" /><polygon points="948.1,217.4 955.0,216.8 956.5,224.5 949.6,225.2" fill="#f6f6f6" /><polygon points="959.4,239.1 954.9,239.5 954.3,249.3 958.7,248.9" fill="#dedede" /><polygon points="950.9,231.9 957.8,231.3 959.4,239.1 952.5,239.7" fill="#f6f6f6" /><polygon points="962.3,253.7 957.8,254.1 957.1,263.9 961.6,263.5" fill="#dedede" /><polygon points="953.8,246.5 960.7,245.9 962.3,253.7 955.3,254.4" fill="#f6f6f6" /><polygon points="965.2,268.5 960.7,268.9 960.0,278.7 964.5,278.3" fill="#dedede" /><polygon points="956.7,261.2 963.6,260.6 965.2,268.5 958.2,269.1" fill="#f6f6f6" /><polygon points="968.1,283.4 963.6,283.8 962.9,293.5 967.4,293.1" fill="#dedede" /><polygon points="959.6,276.0 966.6,275.4 968.1,283.4 961.1,284.0" fill="#f6f6f6" /><polygon points="971.1,298.4 966.5,298.8 965.9,308.5 970.4,308.1" fill="#dedede" /><polygon points="962.5,291.0 969.5,290.3 971.1,298.4 964.1,299.0" fill="#f6f6f6" /><polygon points="974.1,313.5 969.5,313.9 968.8,323.6 973.4,323.2" fill="#dedede" /><polygon points="965.4,306.0 972.5,305.4 974.1,313.5 967.0,314.1" fill="#f6f6f6" /><polygon points="977.1,328.7 972.5,329.1 971.8,338.8 976.4,338.4" fill="#dedede" /><polygon points="968.4,321.2 975.5,320.5 977.1,328.7 970.0,329.4" fill="#f6f6f6" /><polygon points="980.1,344.1 975.5,344.5 974.8,354.2 979.4,353.7" fill="#dedede" /><polygon points="971.4,336.5 978.5,335.8 980.1,344.1 973.0,344.7" fill="#f6f6f6" /><polygon points="983.2,359.5 978.5,360.0 977.8,369.6 982.4,369.2" fill="#dedede" /><polygon points="974.4,351.9 981.5,351.2 983.2,359.5 976.0,360.2" fill="#f6f6f6" /><polygon points="986.3,375.2 981.6,375.6 980.9,385.2 985.5,384.8" fill="#dedede" /><polygon points="977.5,367.4 984.6,366.8 986.3,375.2 979.1,375.8" fill="#f6f6f6" /><polygon points="989.4,390.9 984.7,391.3 983.9,400.9 988.6,400.5" fill="#dedede" /><polygon points="980.5,383.1 987.7,382.4 989.4,390.9 982.2,391.6" fill="#f6f6f6" /><polygon points="992.5,406.7 987.8,407.2 987.0,416.8 991.7,416.3" fill="#dedede" /><polygon points="983.6,398.9 990.8,398.2 992.5,406.7 985.3,407.4" fill="#f6f6f6" /><polygon points="891.1,208.1 892.5,215.8 892.1,225.6 890.7,217.9" fill="#cfcfcf" /><polygon points="896.9,215.3 892.5,215.8 892.1,226.1 896.5,225.7" fill="#e6e6e6" /><polygon points="891.1,208.1 898.3,207.4 899.7,215.1 892.5,215.8" fill="#f8f8f8" /><polygon points="893.7,222.5 895.1,230.2 894.7,240.0 893.3,232.3" fill="#cfcfcf" /><polygon points="899.5,229.8 895.1,230.2 894.7,240.5 899.1,240.1" fill="#e6e6e6" /><polygon points="893.7,222.5 900.9,221.8 902.3,229.5 895.1,230.2" fill="#f8f8f8" /><polygon points="896.3,237.0 897.7,244.8 897.3,254.6 895.9,246.8" fill="#cfcfcf" /><polygon points="902.2,244.3 897.7,244.8 897.3,255.0 901.7,254.6" fill="#e6e6e6" /><polygon points="896.3,237.0 903.6,236.3 905.0,244.1 897.7,244.8" fill="#f8f8f8" /><polygon points="898.9,251.6 900.3,259.4 899.9,269.2 898.5,261.4" fill="#cfcfcf" /><polygon points="904.9,259.0 900.3,259.4 899.9,269.7 904.4,269.3" fill="#e6e6e6" /><polygon points="898.9,251.6 906.2,250.9 907.7,258.8 900.3,259.4" fill="#f8f8f8" /><polygon points="901.6,266.3 903.0,274.2 902.6,284.0 901.2,276.1" fill="#cfcfcf" /><polygon points="907.5,273.8 903.0,274.2 902.6,284.5 907.1,284.1" fill="#e6e6e6" /><polygon points="901.6,266.3 908.9,265.6 910.4,273.5 903.0,274.2" fill="#f8f8f8" /><polygon points="904.3,281.1 905.7,289.1 905.3,298.9 903.8,290.9" fill="#cfcfcf" /><polygon points="910.3,288.7 905.7,289.1 905.3,299.4 909.8,298.9" fill="#e6e6e6" /><polygon points="904.3,281.1 911.6,280.5 913.1,288.5 905.7,289.1" fill="#f8f8f8" /><polygon points="907.0,296.1 908.4,304.2 908.0,313.9 906.5,305.8" fill="#cfcfcf" /><polygon points="913.0,303.7 908.4,304.2 908.0,314.4 912.5,313.9" fill="#e6e6e6" /><polygon points="907.0,296.1 914.4,295.4 915.8,303.5 908.4,304.2" fill="#f8f8f8" /><polygon points="909.7,311.2 911.2,319.3 910.7,329.0 909.2,320.9" fill="#cfcfcf" /><polygon points="915.7,318.9 911.2,319.3 910.7,329.5 915.2,329.1" fill="#e6e6e6" /><polygon points="909.7,311.2 917.1,310.5 918.6,318.6 911.2,319.3" fill="#f8f8f8" /><polygon points="912.4,326.4 913.9,334.6 913.4,344.2 912.0,336.1" fill="#cfcfcf" /><polygon points="918.5,334.1 913.9,334.6 913.4,344.7 918.0,344.3" fill="#e6e6e6" /><polygon points="912.4,326.4 919.9,325.7 921.4,333.9 913.9,334.6" fill="#f8f8f8" /><polygon points="915.2,341.7 916.7,350.0 916.2,359.6 914.7,351.4" fill="#cfcfcf" /><polygon points="921.3,349.5 916.7,350.0 916.2,360.1 920.8,359.6" fill="#e6e6e6" /><polygon points="915.2,341.7 922.7,341.0 924.2,349.3 916.7,350.0" fill="#f8f8f8" /><polygon points="918.0,357.1 919.5,365.5 919.0,375.1 917.5,366.8" fill="#cfcfcf" /><polygon points="924.1,365.0 919.5,365.5 919.0,375.6 923.6,375.1" fill="#e6e6e6" /><polygon points="918.0,357.1 925.5,356.4 927.0,364.8 919.5,365.5" fill="#f8f8f8" /><polygon points="920.8,372.7 922.3,381.1 921.8,390.7 920.3,382.3" fill="#cfcfcf" /><polygon points="927.0,380.7 922.3,381.1 921.8,391.2 926.4,390.7" fill="#e6e6e6" /><polygon points="920.8,372.7 928.4,372.0 929.9,380.4 922.3,381.1" fill="#f8f8f8" /><polygon points="923.7,388.4 925.2,396.9 924.6,406.4 923.1,398.0" fill="#cfcfcf" /><polygon points="929.9,396.4 925.2,396.9 924.6,406.9 929.3,406.5" fill="#e6e6e6" /><polygon points="923.7,388.4 931.2,387.7 932.8,396.2 925.2,396.9" fill="#f8f8f8" /><polygon points="926.5,404.2 928.1,412.8 927.5,422.3 926.0,413.8" fill="#cfcfcf" /><polygon points="932.7,412.3 928.1,412.8 927.5,422.8 932.1,422.3" fill="#e6e6e6" /><polygon points="926.5,404.2 934.1,403.5 935.7,412.0 928.1,412.8" fill="#f8f8f8" /><polygon points="898.0,213.3 936.4,424.0 936.8,417.9 938.1,410.9 899.6,201.1 898.3,207.0" fill="#2a2626" /><polygon points="936.4,424.0 986.0,419.4 987.0,407.6 938.3,412.2 936.8,417.9" fill="#4b4544" /><polygon points="899.6,201.1 945.6,196.9 987.0,407.6 938.3,412.2" fill="#575150" /><line x1="938.7" y1="409.9" x2="985.7" y2="405.5" stroke="#857f7c" stroke-width="0.9" /><polygon points="928.5,199.1 928.4,200.9 927.3,202.6 925.4,203.8 923.1,204.4 920.6,204.3 918.4,203.4 916.7,202.0 915.9,200.2" fill="#4f4948" /><polyline points="928.5,199.1 928.4,200.9 927.3,202.6 925.4,203.8 923.1,204.4 920.6,204.3 918.4,203.4 916.7,202.0 915.9,200.2" fill="none" stroke="#3a3535" stroke-width="0.9" />
<line x1="325.6" y1="365.6" x2="325.2" y2="362.7" stroke="#bcbcbc" stroke-width="3.6" stroke-linecap="round"/><line x1="325.0" y1="365.6" x2="324.6" y2="362.7" stroke="#f4f4f4" stroke-width="1.4" stroke-linecap="round"/><polygon points="329.1,418.2 342.2,415.1 341.0,377.8 328.0,379.0" fill="#0a1810" opacity="0.45"/><line x1="327.9" y1="428.3" x2="325.3" y2="403.7" stroke="#c4c4c4" stroke-width="5.4" stroke-linecap="round"/><line x1="327.4" y1="428.3" x2="324.8" y2="403.7" stroke="#ffffff" stroke-width="4.0" stroke-linecap="round"/><use href="#resb" transform="matrix(7.795,-0.211,0.169,6.239,325.71,417.69)"/>
<polyline points="1147.4,365.7 1123.3,367.9 1121.3,368.3 1119.3,368.9 1117.6,369.8 1116.3,370.9 1115.3,372.2 1114.9,373.4 1113.0,387.1" fill="none" stroke="#a8a21c" stroke-width="5.76" stroke-linecap="round" stroke-linejoin="round" transform="translate(0,0.9)"/><polyline points="1147.4,365.7 1123.3,367.9 1121.3,368.3 1119.3,368.9 1117.6,369.8 1116.3,370.9 1115.3,372.2 1114.9,373.4 1113.0,387.1" fill="none" stroke="#e6e044" stroke-width="4.61" stroke-linecap="round" stroke-linejoin="round"/>
<line x1="354.8" y1="362.9" x2="354.4" y2="360.0" stroke="#bcbcbc" stroke-width="3.6" stroke-linecap="round"/><line x1="354.2" y1="362.9" x2="353.8" y2="360.0" stroke="#f4f4f4" stroke-width="1.4" stroke-linecap="round"/><polygon points="358.7,415.5 371.8,412.4 370.3,375.1 357.4,376.3" fill="#0a1810" opacity="0.45"/><line x1="357.5" y1="425.5" x2="355.0" y2="401.0" stroke="#c4c4c4" stroke-width="5.4" stroke-linecap="round"/><line x1="357.0" y1="425.5" x2="354.5" y2="401.0" stroke="#ffffff" stroke-width="4.0" stroke-linecap="round"/><use href="#resb" transform="matrix(7.791,-0.270,0.216,6.233,355.53,414.92)"/>
<line x1="384.0" y1="360.2" x2="383.6" y2="357.3" stroke="#bcbcbc" stroke-width="3.6" stroke-linecap="round"/><line x1="383.4" y1="360.2" x2="383.0" y2="357.3" stroke="#f4f4f4" stroke-width="1.4" stroke-linecap="round"/><polygon points="388.3,412.7 401.3,409.6 399.6,372.4 386.6,373.6" fill="#0a1810" opacity="0.45"/><line x1="387.2" y1="422.8" x2="384.7" y2="398.2" stroke="#c4c4c4" stroke-width="5.4" stroke-linecap="round"/><line x1="386.7" y1="422.8" x2="384.2" y2="398.2" stroke="#ffffff" stroke-width="4.0" stroke-linecap="round"/><use href="#resb" transform="matrix(7.786,-0.329,0.263,6.228,385.33,412.15)"/>
<line x1="413.2" y1="357.5" x2="412.8" y2="354.6" stroke="#bcbcbc" stroke-width="3.6" stroke-linecap="round"/><line x1="412.6" y1="357.5" x2="412.2" y2="354.6" stroke="#f4f4f4" stroke-width="1.4" stroke-linecap="round"/><polygon points="417.9,410.0 430.9,406.9 428.9,369.7 415.9,370.9" fill="#0a1810" opacity="0.45"/><line x1="416.9" y1="420.0" x2="414.4" y2="395.5" stroke="#c4c4c4" stroke-width="5.4" stroke-linecap="round"/><line x1="416.4" y1="420.0" x2="413.9" y2="395.5" stroke="#ffffff" stroke-width="4.0" stroke-linecap="round"/><use href="#resb" transform="matrix(7.781,-0.389,0.311,6.222,415.12,409.38)"/>
<line x1="106.0" y1="484.7" x2="59.1" y2="489.0" stroke="#0b170f" stroke-width="2.2" opacity="0.55"/><line x1="104.3" y1="476.7" x2="59.6" y2="480.8" stroke="#a8a21c" stroke-width="6.40" stroke-linecap="round"/><line x1="104.3" y1="475.0" x2="59.6" y2="479.1" stroke="#e6e044" stroke-width="5.12" stroke-linecap="round"/><line x1="104.3" y1="473.9" x2="59.6" y2="478.0" stroke="#f6f27a" stroke-width="1.92" stroke-linecap="round"/><polygon points="103.3,464.1 123.2,462.3 122.8,479.1 125.8,484.4 105.9,486.3 102.8,480.9" fill="#151515" /><polygon points="123.2,462.3 122.8,479.1 125.8,484.4 126.1,472.0" fill="#1e1e1e" /><polygon points="103.0,473.0 123.0,471.2 122.8,479.1 102.8,480.9" fill="#3f3f3f" /><polyline points="124.2,473.4 129.6,472.9 131.7,472.9 133.7,473.2 135.6,473.7 137.1,474.6 138.2,475.6 138.8,476.7 139.2,478.1" fill="none" stroke="#a8a21c" stroke-width="5.76" stroke-linecap="round" stroke-linejoin="round" transform="translate(0,0.9)"/><polyline points="124.2,473.4 129.6,472.9 131.7,472.9 133.7,473.2 135.6,473.7 137.1,474.6 138.2,475.6 138.8,476.7 139.2,478.1" fill="none" stroke="#e6e044" stroke-width="4.61" stroke-linecap="round" stroke-linejoin="round"/>
<line x1="105.5" y1="501.1" x2="58.4" y2="505.5" stroke="#0b170f" stroke-width="2.2" opacity="0.55"/><line x1="103.8" y1="493.1" x2="59.0" y2="497.3" stroke="#a8a21c" stroke-width="6.40" stroke-linecap="round"/><line x1="103.8" y1="491.4" x2="59.0" y2="495.6" stroke="#e6e044" stroke-width="5.12" stroke-linecap="round"/><line x1="103.8" y1="490.3" x2="59.0" y2="494.5" stroke="#f6f27a" stroke-width="1.92" stroke-linecap="round"/><polygon points="102.8,480.5 122.8,478.6 122.4,495.6 125.4,500.9 105.5,502.7 102.3,497.5" fill="#151515" /><polygon points="122.8,478.6 122.4,495.6 125.4,500.9 125.7,488.4" fill="#1e1e1e" /><polygon points="102.6,489.5 122.6,487.6 122.4,495.6 102.3,497.5" fill="#3f3f3f" /><polyline points="123.8,489.9 129.3,489.3 131.4,489.3 133.4,489.6 135.2,490.1 136.8,491.0 137.9,492.0 138.5,493.1 138.9,494.5" fill="none" stroke="#a8a21c" stroke-width="5.76" stroke-linecap="round" stroke-linejoin="round" transform="translate(0,0.9)"/><polyline points="123.8,489.9 129.3,489.3 131.4,489.3 133.4,489.6 135.2,490.1 136.8,491.0 137.9,492.0 138.5,493.1 138.9,494.5" fill="none" stroke="#e6e044" stroke-width="4.61" stroke-linecap="round" stroke-linejoin="round"/>
<line x1="521.5" y1="363.2" x2="521.1" y2="360.3" stroke="#bcbcbc" stroke-width="3.6" stroke-linecap="round"/><line x1="520.9" y1="363.2" x2="520.5" y2="360.3" stroke="#f4f4f4" stroke-width="1.4" stroke-linecap="round"/><polygon points="527.8,415.9 540.8,412.8 537.7,375.4 524.7,376.6" fill="#0a1810" opacity="0.45"/><line x1="527.0" y1="426.0" x2="524.7" y2="401.4" stroke="#c4c4c4" stroke-width="5.4" stroke-linecap="round"/><line x1="526.5" y1="426.0" x2="524.2" y2="401.4" stroke="#ffffff" stroke-width="4.0" stroke-linecap="round"/><use href="#resb" transform="matrix(7.789,-0.608,0.488,6.254,525.77,415.39)"/>
<line x1="483.5" y1="381.4" x2="483.1" y2="378.5" stroke="#bcbcbc" stroke-width="3.6" stroke-linecap="round"/><line x1="482.9" y1="381.4" x2="482.5" y2="378.5" stroke="#f4f4f4" stroke-width="1.4" stroke-linecap="round"/><polygon points="489.3,434.6 502.3,431.5 499.6,393.8 486.5,395.0" fill="#0a1810" opacity="0.45"/><line x1="488.4" y1="444.8" x2="486.0" y2="420.1" stroke="#c4c4c4" stroke-width="5.4" stroke-linecap="round"/><line x1="487.9" y1="444.8" x2="485.5" y2="420.1" stroke="#ffffff" stroke-width="4.0" stroke-linecap="round"/><use href="#resb" transform="matrix(7.829,-0.531,0.428,6.310,486.96,434.22)"/>
<line x1="625.5" y1="311.1" x2="516.9" y2="-1227.5" stroke="#1e1a52" stroke-width="1.0" opacity="0.9"/></svg></body></html>
